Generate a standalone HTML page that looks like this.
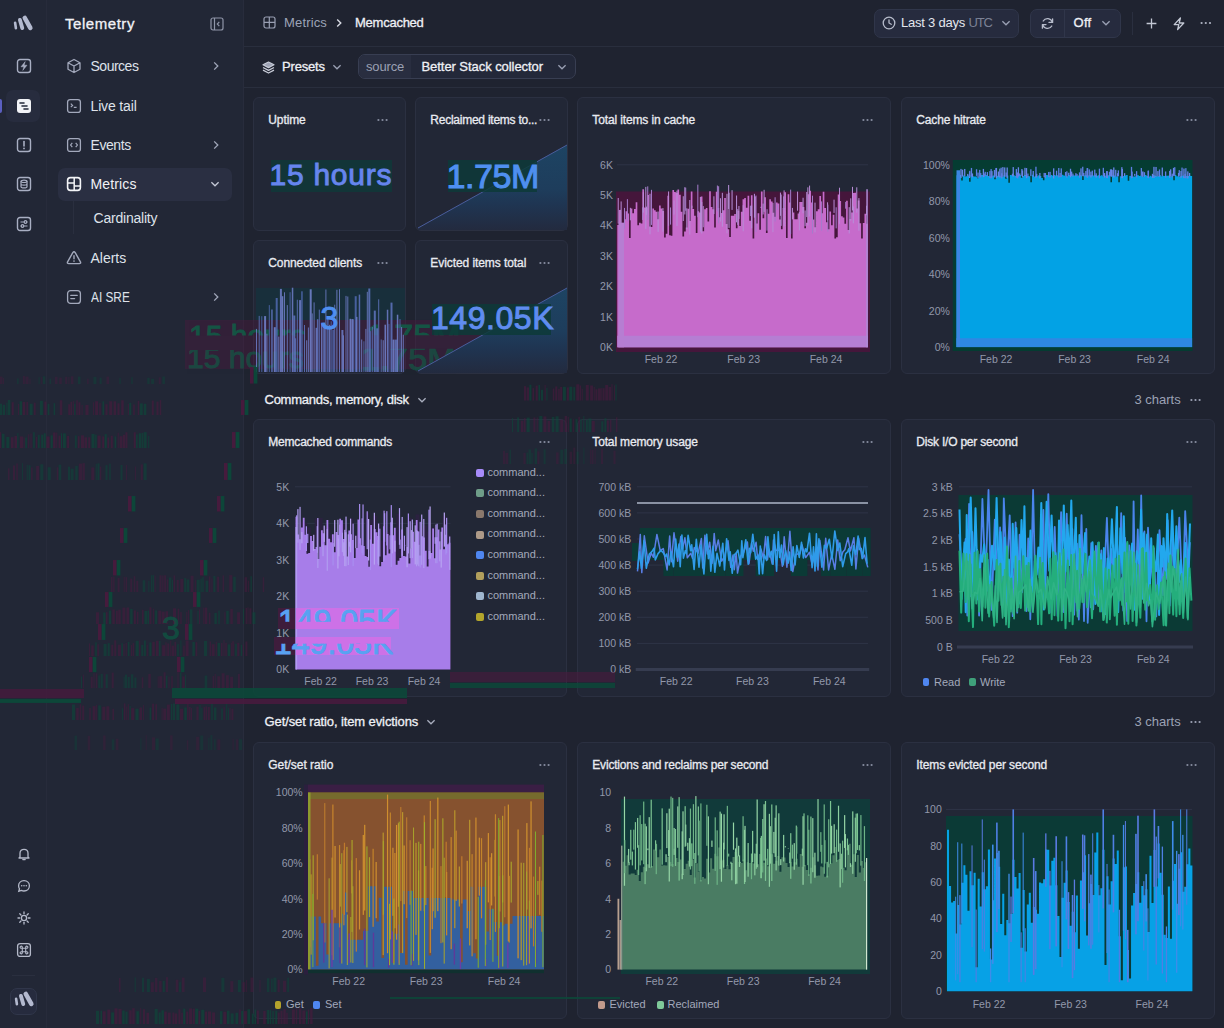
<!DOCTYPE html><html><head><meta charset="utf-8"><title>Telemetry</title>
<style>
html,body{margin:0;padding:0}
body{width:1224px;height:1028px;overflow:hidden;position:relative;background:#1f2330;font-family:"Liberation Sans",sans-serif;}
svg{overflow:visible}
</style></head><body>
<div style="position:absolute;left:0px;top:0px;width:46px;height:1028px;background:#222736;"></div>
<div style="position:absolute;left:46px;top:0px;width:1px;height:1028px;background:#272b3b;"></div>
<div style="position:absolute;left:47px;top:0px;width:196px;height:1028px;background:#222736;"></div>
<div style="position:absolute;left:243px;top:0px;width:1px;height:1028px;background:#282c3c;"></div>
<svg style="position:absolute;left:10px;top:12px;" width="24" height="20" viewBox="0 0 24 20"><g stroke="#b3b9cf" stroke-linecap="round" stroke-linejoin="round" fill="none"><path d="M5.1 10.7 L5.9 16.2" stroke-width="2.6"/><path d="M9.9 7.9 L12.3 16.1" stroke-width="3.8"/><path d="M14.8 6.0 L20.3 15.9" stroke-width="4.6"/></g></svg>
<div style="position:absolute;left:6px;top:90px;width:34px;height:32px;background:#272c3e;border-radius:7px;"></div>
<div style="position:absolute;left:0px;top:99px;width:2px;height:14px;background:#5b5fc0;border-radius:0 2px 2px 0;"></div>
<svg style="position:absolute;left:16px;top:58px;" width="16" height="16" viewBox="0 0 16 16"><rect x="1.5" y="1.5" width="13" height="13" rx="2.5" fill="none" stroke="#a9afc3" stroke-width="1.4"/><path d="M9.2 3.6 L5 8.8 H7.9 L6.8 12.4 L11 7.2 H8.1Z" fill="#a9afc3" stroke="#a9afc3" stroke-width=".5" stroke-linejoin="round"/></svg>
<svg style="position:absolute;left:16px;top:98px;" width="16" height="16" viewBox="0 0 16 16"><rect x="1" y="1" width="14" height="14" rx="3" fill="#f2f3f7"/><path d="M4 5 H8 M6 8 H11 M8 11 H12" stroke="#23283a" stroke-width="1.6" stroke-linecap="round"/></svg>
<svg style="position:absolute;left:16px;top:137px;" width="16" height="16" viewBox="0 0 16 16"><rect x="1.5" y="1.5" width="13" height="13" rx="2.5" fill="none" stroke="#a9afc3" stroke-width="1.4"/><path d="M8 4.5 V9" stroke="#a9afc3" stroke-width="1.6" stroke-linecap="round"/><circle cx="8" cy="11.4" r="0.9" fill="#a9afc3"/></svg>
<svg style="position:absolute;left:16px;top:176px;" width="16" height="16" viewBox="0 0 16 16"><rect x="1.5" y="1.5" width="13" height="13" rx="2.5" fill="none" stroke="#a9afc3" stroke-width="1.4"/><ellipse cx="8" cy="5.3" rx="3" ry="1.2" fill="none" stroke="#a9afc3" stroke-width="1.2"/><path d="M5 5.3 V10.7 C5 12.3 11 12.3 11 10.7 V5.3 M5 8 C5 9.5 11 9.5 11 8" fill="none" stroke="#a9afc3" stroke-width="1.2"/></svg>
<svg style="position:absolute;left:16px;top:216px;" width="16" height="16" viewBox="0 0 16 16"><rect x="1.5" y="1.5" width="13" height="13" rx="2.5" fill="none" stroke="#a9afc3" stroke-width="1.4"/><path d="M4.5 6 H11.5 M4.5 10 H11.5" stroke="#a9afc3" stroke-width="1.2"/><circle cx="9.5" cy="6" r="1.3" fill="#222736" stroke="#a9afc3" stroke-width="1.2"/><circle cx="6.5" cy="10" r="1.3" fill="#222736" stroke="#a9afc3" stroke-width="1.2"/></svg>
<svg style="position:absolute;left:16px;top:846px;" width="16" height="16" viewBox="0 0 16 16"><path d="M4 11 V7.2 C4 4.8 5.8 3.3 8 3.3 C10.2 3.3 12 4.8 12 7.2 V11 L13 12 H3Z" fill="none" stroke="#b4b9c9" stroke-width="1.3" stroke-linejoin="round"/><path d="M6.8 13.6 H9.2" stroke="#b4b9c9" stroke-width="1.3" stroke-linecap="round"/></svg>
<svg style="position:absolute;left:16px;top:878px;" width="16" height="16" viewBox="0 0 16 16"><path d="M8 2.6 C11.2 2.6 13.4 4.9 13.4 7.8 C13.4 10.7 11.2 13 8 13 C7.1 13 6.2 12.8 5.5 12.4 L2.8 13.2 L3.5 10.8 C2.9 10 2.6 8.9 2.6 7.8 C2.6 4.9 4.8 2.6 8 2.6Z" fill="none" stroke="#b4b9c9" stroke-width="1.3"/><circle cx="5.7" cy="7.8" r=".8" fill="#b4b9c9"/><circle cx="8" cy="7.8" r=".8" fill="#b4b9c9"/><circle cx="10.3" cy="7.8" r=".8" fill="#b4b9c9"/></svg>
<svg style="position:absolute;left:16px;top:910px;" width="16" height="16" viewBox="0 0 16 16"><circle cx="8" cy="8" r="2.6" fill="none" stroke="#b4b9c9" stroke-width="1.3"/><path d="M12.30 8.00 L14.00 8.00" stroke="#b4b9c9" stroke-width="1.3" stroke-linecap="round"/><path d="M11.04 11.04 L12.24 12.24" stroke="#b4b9c9" stroke-width="1.3" stroke-linecap="round"/><path d="M8.00 12.30 L8.00 14.00" stroke="#b4b9c9" stroke-width="1.3" stroke-linecap="round"/><path d="M4.96 11.04 L3.76 12.24" stroke="#b4b9c9" stroke-width="1.3" stroke-linecap="round"/><path d="M3.70 8.00 L2.00 8.00" stroke="#b4b9c9" stroke-width="1.3" stroke-linecap="round"/><path d="M4.96 4.96 L3.76 3.76" stroke="#b4b9c9" stroke-width="1.3" stroke-linecap="round"/><path d="M8.00 3.70 L8.00 2.00" stroke="#b4b9c9" stroke-width="1.3" stroke-linecap="round"/><path d="M11.04 4.96 L12.24 3.76" stroke="#b4b9c9" stroke-width="1.3" stroke-linecap="round"/></svg>
<svg style="position:absolute;left:16px;top:942px;" width="16" height="16" viewBox="0 0 16 16"><rect x="1.6" y="1.6" width="12.8" height="12.8" rx="2.5" fill="none" stroke="#b4b9c9" stroke-width="1.3"/><path d="M6.3 6.3 H9.7 V9.7 H6.3Z M6.3 6.3 V5.4 A1.1 1.1 0 1 0 5.2 6.3 H6.3 M9.7 6.3 V5.4 A1.1 1.1 0 1 1 10.8 6.3 H9.7 M6.3 9.7 V10.6 A1.1 1.1 0 1 1 5.2 9.7 H6.3 M9.7 9.7 V10.6 A1.1 1.1 0 1 0 10.8 9.7 H9.7" fill="none" stroke="#b4b9c9" stroke-width="1.1"/></svg>
<div style="position:absolute;left:12px;top:975px;width:23px;height:1px;background:#2a2f3f;"></div>
<div style="position:absolute;left:10px;top:988px;width:27px;height:27px;background:#262b3e;border:1px solid #30364a;border-radius:7px;box-sizing:border-box;"></div>
<svg style="position:absolute;left:10.5px;top:988px;" width="24" height="20" viewBox="0 0 24 20"><g stroke="#b3b9cf" stroke-linecap="round" stroke-linejoin="round" fill="none"><path d="M5.1 10.7 L5.9 16.2" stroke-width="2.6"/><path d="M9.9 7.9 L12.3 16.1" stroke-width="3.8"/><path d="M14.8 6.0 L20.3 15.9" stroke-width="4.6"/></g></svg>
<div class="t" style="position:absolute;left:65px;top:16.1px;font-size:15px;line-height:15px;font-weight:400;color:#f1f2f6;white-space:nowrap;letter-spacing:0.546px;-webkit-text-stroke:0.30px #f1f2f6;">Telemetry</div>
<svg style="position:absolute;left:210px;top:17px;" width="14" height="14" viewBox="0 0 14 14"><rect x="1" y="1" width="12" height="12" rx="2" fill="none" stroke="#8f95a8" stroke-width="1.2"/><path d="M4.5 1 V13" stroke="#8f95a8" stroke-width="1.2"/><path d="M9.3 4.8 L7.3 7 L9.3 9.2" fill="none" stroke="#8f95a8" stroke-width="1.2"/></svg>
<div style="position:absolute;left:58px;top:168px;width:174px;height:33px;background:#2a2f42;border-radius:7px;"></div>
<svg style="position:absolute;left:66px;top:58px;" width="16" height="16" viewBox="0 0 16 16"><path d="M8 1.5 L14 4.7 V11.3 L8 14.5 L2 11.3 V4.7Z M2 4.7 L8 8 L14 4.7 M8 8 V14.5" fill="none" stroke="#a3a9bc" stroke-width="1.3" stroke-linejoin="round"/></svg>
<div class="t" style="position:absolute;left:90.5px;top:59.2px;font-size:14px;line-height:14px;font-weight:400;color:#dfe2ea;white-space:nowrap;letter-spacing:-0.490px;">Sources</div>
<svg style="position:absolute;left:211px;top:61px;" width="10" height="10" viewBox="0 0 10 10"><path d="M3.2 1.4 L6.8 5 L3.2 8.6" fill="none" stroke="#a1a7ba" stroke-width="1.3"/></svg>
<svg style="position:absolute;left:66px;top:97.5px;" width="16" height="16" viewBox="0 0 16 16"><rect x="1.6" y="1.6" width="12.8" height="12.8" rx="2.5" fill="none" stroke="#a3a9bc" stroke-width="1.3"/><path d="M4.8 5.6 L6.6 7.4 L4.8 9.2 M7.8 9.4 H10.6" fill="none" stroke="#a3a9bc" stroke-width="1.2"/></svg>
<div class="t" style="position:absolute;left:90.5px;top:98.7px;font-size:14px;line-height:14px;font-weight:400;color:#dfe2ea;white-space:nowrap;letter-spacing:-0.144px;">Live tail</div>
<svg style="position:absolute;left:66px;top:137px;" width="16" height="16" viewBox="0 0 16 16"><rect x="1.6" y="1.6" width="12.8" height="12.8" rx="2.5" fill="none" stroke="#a3a9bc" stroke-width="1.3"/><path d="M6.3 5.8 L4.6 8 L6.3 10.2 M9.7 5.8 L11.4 8 L9.7 10.2" fill="none" stroke="#a3a9bc" stroke-width="1.2"/></svg>
<div class="t" style="position:absolute;left:90.5px;top:138.2px;font-size:14px;line-height:14px;font-weight:400;color:#dfe2ea;white-space:nowrap;letter-spacing:-0.419px;">Events</div>
<svg style="position:absolute;left:211px;top:140px;" width="10" height="10" viewBox="0 0 10 10"><path d="M3.2 1.4 L6.8 5 L3.2 8.6" fill="none" stroke="#a1a7ba" stroke-width="1.3"/></svg>
<svg style="position:absolute;left:66px;top:176px;" width="16" height="16" viewBox="0 0 16 16"><rect x="1.6" y="1.6" width="12.8" height="12.8" rx="2.8" fill="none" stroke="#f4f5f8" stroke-width="1.6"/><path d="M8.2 1.6 V14.4 M1.6 7 H8.2 M8.2 10 H14.4" stroke="#f4f5f8" stroke-width="1.5"/></svg>
<div class="t" style="position:absolute;left:90.5px;top:177.2px;font-size:14px;line-height:14px;font-weight:500;color:#f1f2f6;white-space:nowrap;letter-spacing:0.149px;">Metrics</div>
<svg style="position:absolute;left:210px;top:179px;" width="10" height="10" viewBox="0 0 10 10"><path d="M1.4 3.2 L5 6.8 L8.6 3.2" fill="none" stroke="#c5c9d6" stroke-width="1.3"/></svg>
<svg style="position:absolute;left:66px;top:249.5px;" width="16" height="16" viewBox="0 0 16 16"><path d="M6.8 2.6 Q8 0.8 9.2 2.6 L14.4 11.8 Q15.2 13.6 13.2 13.6 H2.8 Q0.8 13.6 1.6 11.8Z" fill="none" stroke="#a3a9bc" stroke-width="1.4" stroke-linejoin="round"/><path d="M8 5.8 V8.8" stroke="#a3a9bc" stroke-width="1.4" stroke-linecap="round"/><circle cx="8" cy="11" r=".85" fill="#a3a9bc"/></svg>
<div class="t" style="position:absolute;left:90.5px;top:250.7px;font-size:14px;line-height:14px;font-weight:400;color:#dfe2ea;white-space:nowrap;letter-spacing:-0.015px;">Alerts</div>
<svg style="position:absolute;left:66px;top:289px;" width="16" height="16" viewBox="0 0 16 16"><rect x="1.6" y="1.6" width="12.8" height="12.8" rx="3" fill="none" stroke="#a3a9bc" stroke-width="1.3"/><path d="M4.8 6.4 H11.2 M4.8 9.6 H8.6" stroke="#a3a9bc" stroke-width="1.3" stroke-linecap="round"/></svg>
<div class="t" style="position:absolute;left:90.5px;top:290.2px;font-size:14px;line-height:14px;font-weight:400;color:#dfe2ea;white-space:nowrap;transform:scaleX(0.845);transform-origin:0 0;">AI SRE</div>
<svg style="position:absolute;left:211px;top:292px;" width="10" height="10" viewBox="0 0 10 10"><path d="M3.2 1.4 L6.8 5 L3.2 8.6" fill="none" stroke="#a1a7ba" stroke-width="1.3"/></svg>
<div style="position:absolute;left:73px;top:201px;width:1px;height:33px;background:#2a2f3f;"></div>
<div class="t" style="position:absolute;left:93.5px;top:211.2px;font-size:14px;line-height:14px;font-weight:400;color:#dfe2ea;white-space:nowrap;letter-spacing:-0.212px;">Cardinality</div>
<div style="position:absolute;left:244px;top:46px;width:980px;height:1px;background:#292e3d;"></div>
<div style="position:absolute;left:244px;top:87px;width:980px;height:1px;background:#292e3d;"></div>
<svg style="position:absolute;left:263px;top:16px;" width="13" height="13" viewBox="0 0 13 13"><rect x="1" y="1" width="11" height="11" rx="2" fill="none" stroke="#9aa0b3" stroke-width="1.2"/><path d="M1 6.3 H12 M6.3 1 V12" stroke="#9aa0b3" stroke-width="1.2"/></svg>
<div class="t" style="position:absolute;left:284px;top:15.7px;font-size:13px;line-height:13px;font-weight:400;color:#9ca3b7;white-space:nowrap;letter-spacing:0.158px;">Metrics</div>
<svg style="position:absolute;left:334px;top:17.5px;" width="10" height="10" viewBox="0 0 10 10"><path d="M3.2 1.4 L6.8 5 L3.2 8.6" fill="none" stroke="#d7dae3" stroke-width="1.4"/></svg>
<div class="t" style="position:absolute;left:355px;top:15.7px;font-size:13px;line-height:13px;font-weight:400;color:#eef0f5;white-space:nowrap;letter-spacing:-0.247px;-webkit-text-stroke:0.30px #eef0f5;">Memcached</div>
<div style="position:absolute;left:874px;top:9px;width:145px;height:29px;background:#262b3e;border:1px solid #30364a;border-radius:7px;box-sizing:border-box;"></div>
<svg style="position:absolute;left:882px;top:16px;" width="14" height="14" viewBox="0 0 14 14"><circle cx="7" cy="7" r="5.8" fill="none" stroke="#b7bccb" stroke-width="1.3"/><path d="M7 3.8 V7 L9.2 8.3" fill="none" stroke="#b7bccb" stroke-width="1.3" stroke-linecap="round"/></svg>
<div class="t" style="position:absolute;left:901px;top:15.7px;font-size:13px;line-height:13px;font-weight:400;color:#e4e7ee;white-space:nowrap;letter-spacing:-0.216px;">Last 3 days</div>
<div class="t" style="position:absolute;left:968.5px;top:15.7px;font-size:13px;line-height:13px;font-weight:400;color:#7c8296;white-space:nowrap;letter-spacing:-1.139px;">UTC</div>
<svg style="position:absolute;left:1000.5px;top:18px;" width="10" height="10" viewBox="0 0 10 10"><path d="M1.4 3.2 L5 6.8 L8.6 3.2" fill="none" stroke="#9aa0b3" stroke-width="1.3"/></svg>
<div style="position:absolute;left:1030px;top:9px;width:91px;height:29px;background:#262b3e;border:1px solid #30364a;border-radius:7px;box-sizing:border-box;"></div>
<div style="position:absolute;left:1064px;top:10px;width:1px;height:27px;background:#30364a;"></div>
<svg style="position:absolute;left:1039.5px;top:15.5px;" width="15" height="15" viewBox="0 0 15 15"><path d="M12.3 6.2 A5 5 0 0 0 3.2 5 M2.7 8.8 A5 5 0 0 0 11.8 10" fill="none" stroke="#b7bccb" stroke-width="1.3" stroke-linecap="round"/><path d="M12.6 2.8 V6.4 H9" fill="none" stroke="#b7bccb" stroke-width="1.3" stroke-linecap="round" stroke-linejoin="round"/><path d="M2.4 12.2 V8.6 H6" fill="none" stroke="#b7bccb" stroke-width="1.3" stroke-linecap="round" stroke-linejoin="round"/></svg>
<div class="t" style="position:absolute;left:1073.5px;top:15.7px;font-size:13px;line-height:13px;font-weight:400;color:#eef0f5;white-space:nowrap;letter-spacing:0.265px;-webkit-text-stroke:0.30px #eef0f5;">Off</div>
<svg style="position:absolute;left:1101px;top:18px;" width="10" height="10" viewBox="0 0 10 10"><path d="M1.4 3.2 L5 6.8 L8.6 3.2" fill="none" stroke="#9aa0b3" stroke-width="1.3"/></svg>
<div style="position:absolute;left:1131.5px;top:12px;width:1.0px;height:23px;background:#2a2f3f;"></div>
<svg style="position:absolute;left:1145.5px;top:17.6px;" width="11" height="11" viewBox="0 0 11 11"><path d="M5.5 0.6 V10.4 M0.6 5.5 H10.4" stroke="#c3c8d4" stroke-width="1.3"/></svg>
<svg style="position:absolute;left:1171.5px;top:16.5px;" width="14" height="14" viewBox="0 0 14 14"><path d="M8.4 1 L2.2 7.6 H6.8 L5.6 12.6 L11.8 6 H7.2Z" fill="none" stroke="#c3c8d4" stroke-width="1.3" stroke-linejoin="round"/></svg>
<svg style="position:absolute;left:1199.5px;top:20.4px;" width="12" height="6" viewBox="0 0 12 6"><circle cx="1.6" cy="3" r="1.1" fill="#b0b5c4"/><circle cx="5.8" cy="3" r="1.1" fill="#b0b5c4"/><circle cx="10" cy="3" r="1.1" fill="#b0b5c4"/></svg>
<svg style="position:absolute;left:262px;top:60.5px;" width="13" height="13" viewBox="0 0 13 13"><path d="M6.5 1 L12 3.8 L6.5 6.6 L1 3.8Z" fill="#9ea3b5" stroke="#c7cbd7" stroke-width="1.2" stroke-linejoin="round"/><path d="M1 6.5 L6.5 9.3 L12 6.5 M1 9.2 L6.5 12 L12 9.2" fill="none" stroke="#c7cbd7" stroke-width="1.3" stroke-linejoin="round"/></svg>
<div class="t" style="position:absolute;left:282px;top:59.7px;font-size:13px;line-height:13px;font-weight:400;color:#eef0f5;white-space:nowrap;letter-spacing:-0.173px;-webkit-text-stroke:0.30px #eef0f5;">Presets</div>
<svg style="position:absolute;left:332px;top:61.5px;" width="10" height="10" viewBox="0 0 10 10"><path d="M1.4 3.2 L5 6.8 L8.6 3.2" fill="none" stroke="#9aa0b3" stroke-width="1.3"/></svg>
<div style="position:absolute;left:357.5px;top:54px;width:218.0px;height:24.5px;background:#232839;border:1px solid #383e52;border-radius:7px;box-sizing:border-box;"></div>
<div style="position:absolute;left:358.5px;top:55px;width:52.0px;height:22.5px;background:#292e40;border-radius:6px 0 0 6px;"></div>
<div class="t" style="position:absolute;left:366px;top:60.0px;font-size:13px;line-height:13px;font-weight:400;color:#9aa0b3;white-space:nowrap;letter-spacing:-0.158px;">source</div>
<div class="t" style="position:absolute;left:421.5px;top:60.0px;font-size:13px;line-height:13px;font-weight:400;color:#eef0f5;white-space:nowrap;letter-spacing:-0.061px;-webkit-text-stroke:0.30px #eef0f5;">Better Stack collector</div>
<svg style="position:absolute;left:557px;top:61.5px;" width="10" height="10" viewBox="0 0 10 10"><path d="M1.4 3.2 L5 6.8 L8.6 3.2" fill="none" stroke="#9aa0b3" stroke-width="1.3"/></svg>
<div style="position:absolute;left:253px;top:97px;width:153px;height:134px;background:#222736;border:1px solid #2b3041;border-radius:6px;box-sizing:border-box;"></div>
<div class="t" style="position:absolute;left:268.3px;top:113.6px;font-size:12px;line-height:12px;font-weight:400;color:#e9ebf1;white-space:nowrap;letter-spacing:-0.111px;-webkit-text-stroke:0.30px #e9ebf1;">Uptime</div>
<svg style="position:absolute;left:377px;top:116.6px;" width="11" height="6" viewBox="0 0 11 6"><circle cx="1.4" cy="3" r="1.1" fill="#868c9f"/><circle cx="5.5" cy="3" r="1.1" fill="#868c9f"/><circle cx="9.6" cy="3" r="1.1" fill="#868c9f"/></svg>
<div style="position:absolute;left:415px;top:97px;width:153px;height:134px;background:#222736;border:1px solid #2b3041;border-radius:6px;box-sizing:border-box;"></div>
<div class="t" style="position:absolute;left:430.3px;top:113.6px;font-size:12px;line-height:12px;font-weight:400;color:#e9ebf1;white-space:nowrap;letter-spacing:-0.244px;-webkit-text-stroke:0.30px #e9ebf1;">Reclaimed items to...</div>
<svg style="position:absolute;left:539px;top:116.6px;" width="11" height="6" viewBox="0 0 11 6"><circle cx="1.4" cy="3" r="1.1" fill="#868c9f"/><circle cx="5.5" cy="3" r="1.1" fill="#868c9f"/><circle cx="9.6" cy="3" r="1.1" fill="#868c9f"/></svg>
<div style="position:absolute;left:253px;top:240px;width:153px;height:134px;background:#222736;border:1px solid #2b3041;border-radius:6px;box-sizing:border-box;"></div>
<div class="t" style="position:absolute;left:268.3px;top:256.6px;font-size:12px;line-height:12px;font-weight:400;color:#e9ebf1;white-space:nowrap;letter-spacing:-0.096px;-webkit-text-stroke:0.30px #e9ebf1;">Connected clients</div>
<svg style="position:absolute;left:377px;top:259.8px;" width="11" height="6" viewBox="0 0 11 6"><circle cx="1.4" cy="3" r="1.1" fill="#868c9f"/><circle cx="5.5" cy="3" r="1.1" fill="#868c9f"/><circle cx="9.6" cy="3" r="1.1" fill="#868c9f"/></svg>
<div style="position:absolute;left:415px;top:240px;width:153px;height:134px;background:#222736;border:1px solid #2b3041;border-radius:6px;box-sizing:border-box;"></div>
<div class="t" style="position:absolute;left:430.3px;top:256.6px;font-size:12px;line-height:12px;font-weight:400;color:#e9ebf1;white-space:nowrap;letter-spacing:-0.073px;-webkit-text-stroke:0.30px #e9ebf1;">Evicted items total</div>
<svg style="position:absolute;left:539px;top:259.8px;" width="11" height="6" viewBox="0 0 11 6"><circle cx="1.4" cy="3" r="1.1" fill="#868c9f"/><circle cx="5.5" cy="3" r="1.1" fill="#868c9f"/><circle cx="9.6" cy="3" r="1.1" fill="#868c9f"/></svg>
<div style="position:absolute;left:577px;top:97px;width:314px;height:277px;background:#222736;border:1px solid #2b3041;border-radius:6px;box-sizing:border-box;"></div>
<div class="t" style="position:absolute;left:592.3px;top:113.6px;font-size:12px;line-height:12px;font-weight:400;color:#e9ebf1;white-space:nowrap;letter-spacing:-0.133px;-webkit-text-stroke:0.30px #e9ebf1;">Total items in cache</div>
<svg style="position:absolute;left:862px;top:116.6px;" width="11" height="6" viewBox="0 0 11 6"><circle cx="1.4" cy="3" r="1.1" fill="#868c9f"/><circle cx="5.5" cy="3" r="1.1" fill="#868c9f"/><circle cx="9.6" cy="3" r="1.1" fill="#868c9f"/></svg>
<div style="position:absolute;left:901px;top:97px;width:314px;height:277px;background:#222736;border:1px solid #2b3041;border-radius:6px;box-sizing:border-box;"></div>
<div class="t" style="position:absolute;left:916.3px;top:113.6px;font-size:12px;line-height:12px;font-weight:400;color:#e9ebf1;white-space:nowrap;letter-spacing:-0.151px;-webkit-text-stroke:0.30px #e9ebf1;">Cache hitrate</div>
<svg style="position:absolute;left:1186px;top:116.6px;" width="11" height="6" viewBox="0 0 11 6"><circle cx="1.4" cy="3" r="1.1" fill="#868c9f"/><circle cx="5.5" cy="3" r="1.1" fill="#868c9f"/><circle cx="9.6" cy="3" r="1.1" fill="#868c9f"/></svg>
<div class="t" style="position:absolute;left:264.5px;top:392.8px;font-size:13px;line-height:13px;font-weight:400;color:#eef0f5;white-space:nowrap;letter-spacing:-0.261px;-webkit-text-stroke:0.30px #eef0f5;">Commands, memory, disk</div>
<svg style="position:absolute;left:416.5px;top:394.5px;" width="10" height="10" viewBox="0 0 10 10"><path d="M1.4 3.2 L5 6.8 L8.6 3.2" fill="none" stroke="#a8adbd" stroke-width="1.3"/></svg>
<div class="t" style="position:absolute;left:1134.5px;top:392.9px;font-size:13px;line-height:13px;font-weight:400;color:#9ca2b5;white-space:nowrap;letter-spacing:-0.016px;">3 charts</div>
<svg style="position:absolute;left:1190px;top:396.6px;" width="11" height="6" viewBox="0 0 11 6"><circle cx="1.4" cy="3" r="1.1" fill="#9ca2b5"/><circle cx="5.5" cy="3" r="1.1" fill="#9ca2b5"/><circle cx="9.6" cy="3" r="1.1" fill="#9ca2b5"/></svg>
<div style="position:absolute;left:253px;top:419px;width:314px;height:278px;background:#222736;border:1px solid #2b3041;border-radius:6px;box-sizing:border-box;"></div>
<div class="t" style="position:absolute;left:268.3px;top:435.6px;font-size:12px;line-height:12px;font-weight:400;color:#e9ebf1;white-space:nowrap;letter-spacing:-0.208px;-webkit-text-stroke:0.30px #e9ebf1;">Memcached commands</div>
<svg style="position:absolute;left:539px;top:439.3px;" width="11" height="6" viewBox="0 0 11 6"><circle cx="1.4" cy="3" r="1.1" fill="#868c9f"/><circle cx="5.5" cy="3" r="1.1" fill="#868c9f"/><circle cx="9.6" cy="3" r="1.1" fill="#868c9f"/></svg>
<div style="position:absolute;left:577px;top:419px;width:314px;height:278px;background:#222736;border:1px solid #2b3041;border-radius:6px;box-sizing:border-box;"></div>
<div class="t" style="position:absolute;left:592.3px;top:435.6px;font-size:12px;line-height:12px;font-weight:400;color:#e9ebf1;white-space:nowrap;letter-spacing:-0.146px;-webkit-text-stroke:0.30px #e9ebf1;">Total memory usage</div>
<svg style="position:absolute;left:862px;top:439.3px;" width="11" height="6" viewBox="0 0 11 6"><circle cx="1.4" cy="3" r="1.1" fill="#868c9f"/><circle cx="5.5" cy="3" r="1.1" fill="#868c9f"/><circle cx="9.6" cy="3" r="1.1" fill="#868c9f"/></svg>
<div style="position:absolute;left:901px;top:419px;width:314px;height:278px;background:#222736;border:1px solid #2b3041;border-radius:6px;box-sizing:border-box;"></div>
<div class="t" style="position:absolute;left:916.3px;top:435.6px;font-size:12px;line-height:12px;font-weight:400;color:#e9ebf1;white-space:nowrap;letter-spacing:-0.212px;-webkit-text-stroke:0.30px #e9ebf1;">Disk I/O per second</div>
<svg style="position:absolute;left:1186px;top:439.3px;" width="11" height="6" viewBox="0 0 11 6"><circle cx="1.4" cy="3" r="1.1" fill="#868c9f"/><circle cx="5.5" cy="3" r="1.1" fill="#868c9f"/><circle cx="9.6" cy="3" r="1.1" fill="#868c9f"/></svg>
<div class="t" style="position:absolute;left:264.5px;top:715.2px;font-size:13px;line-height:13px;font-weight:400;color:#eef0f5;white-space:nowrap;letter-spacing:-0.105px;-webkit-text-stroke:0.30px #eef0f5;">Get/set ratio, item evictions</div>
<svg style="position:absolute;left:426px;top:717px;" width="10" height="10" viewBox="0 0 10 10"><path d="M1.4 3.2 L5 6.8 L8.6 3.2" fill="none" stroke="#a8adbd" stroke-width="1.3"/></svg>
<div class="t" style="position:absolute;left:1134.5px;top:715.3px;font-size:13px;line-height:13px;font-weight:400;color:#9ca2b5;white-space:nowrap;letter-spacing:-0.016px;">3 charts</div>
<svg style="position:absolute;left:1190px;top:719px;" width="11" height="6" viewBox="0 0 11 6"><circle cx="1.4" cy="3" r="1.1" fill="#9ca2b5"/><circle cx="5.5" cy="3" r="1.1" fill="#9ca2b5"/><circle cx="9.6" cy="3" r="1.1" fill="#9ca2b5"/></svg>
<div style="position:absolute;left:253px;top:742px;width:314px;height:277px;background:#222736;border:1px solid #2b3041;border-radius:6px;box-sizing:border-box;"></div>
<div class="t" style="position:absolute;left:268.3px;top:758.6px;font-size:12px;line-height:12px;font-weight:400;color:#e9ebf1;white-space:nowrap;letter-spacing:-0.026px;-webkit-text-stroke:0.30px #e9ebf1;">Get/set ratio</div>
<svg style="position:absolute;left:539px;top:761.8px;" width="11" height="6" viewBox="0 0 11 6"><circle cx="1.4" cy="3" r="1.1" fill="#868c9f"/><circle cx="5.5" cy="3" r="1.1" fill="#868c9f"/><circle cx="9.6" cy="3" r="1.1" fill="#868c9f"/></svg>
<div style="position:absolute;left:577px;top:742px;width:314px;height:277px;background:#222736;border:1px solid #2b3041;border-radius:6px;box-sizing:border-box;"></div>
<div class="t" style="position:absolute;left:592.3px;top:758.6px;font-size:12px;line-height:12px;font-weight:400;color:#e9ebf1;white-space:nowrap;letter-spacing:-0.189px;-webkit-text-stroke:0.30px #e9ebf1;">Evictions and reclaims per second</div>
<svg style="position:absolute;left:862px;top:761.8px;" width="11" height="6" viewBox="0 0 11 6"><circle cx="1.4" cy="3" r="1.1" fill="#868c9f"/><circle cx="5.5" cy="3" r="1.1" fill="#868c9f"/><circle cx="9.6" cy="3" r="1.1" fill="#868c9f"/></svg>
<div style="position:absolute;left:901px;top:742px;width:314px;height:277px;background:#222736;border:1px solid #2b3041;border-radius:6px;box-sizing:border-box;"></div>
<div class="t" style="position:absolute;left:916.3px;top:758.6px;font-size:12px;line-height:12px;font-weight:400;color:#e9ebf1;white-space:nowrap;letter-spacing:-0.106px;-webkit-text-stroke:0.30px #e9ebf1;">Items evicted per second</div>
<svg style="position:absolute;left:1186px;top:761.8px;" width="11" height="6" viewBox="0 0 11 6"><circle cx="1.4" cy="3" r="1.1" fill="#868c9f"/><circle cx="5.5" cy="3" r="1.1" fill="#868c9f"/><circle cx="9.6" cy="3" r="1.1" fill="#868c9f"/></svg>
<!--CHARTS-->
<div style="position:absolute;left:185px;top:320px;width:311px;height:49px;background:#4a1a3e;opacity:.45;"></div>
<div class="t" style="position:absolute;left:189px;top:321.2px;font-size:30px;line-height:30px;font-weight:400;color:#0d6248;white-space:nowrap;-webkit-text-stroke:0.90px #0d6248;opacity:.8;clip-path:inset(0 0 52% 0);">15 hours</div>
<div class="t" style="position:absolute;left:187px;top:343.2px;font-size:30px;line-height:30px;font-weight:400;color:#0d6248;white-space:nowrap;-webkit-text-stroke:0.90px #0d6248;opacity:.6;clip-path:inset(23% 0 0 0);">15 hours</div>
<div class="t" style="position:absolute;left:366px;top:319.0px;font-size:34px;line-height:34px;font-weight:400;color:#0d6248;white-space:nowrap;-webkit-text-stroke:1.02px #0d6248;opacity:.8;clip-path:inset(0 0 52% 0);">1.75M</div>
<div class="t" style="position:absolute;left:361px;top:341.0px;font-size:34px;line-height:34px;font-weight:400;color:#0d6248;white-space:nowrap;-webkit-text-stroke:1.02px #0d6248;opacity:.6;clip-path:inset(23% 0 0 0);">1.75M</div>
<div style="position:absolute;left:271px;top:160px;width:121px;height:32px;background:#0f3a3a;opacity:.8;"></div>
<div class="t" style="position:absolute;left:269.5px;top:159.7px;font-size:30px;line-height:30px;font-weight:400;color:#6685ee;white-space:nowrap;letter-spacing:0.736px;-webkit-text-stroke:0.90px #6685ee;">15 hours</div>
<svg style="position:absolute;left:415px;top:97px;" width="153" height="134" viewBox="0 0 153 134"><defs><linearGradient id="lg97" x1="0" y1="0" x2="0" y2="1"><stop offset="0" stop-color="#1d4564"/><stop offset="0.55" stop-color="#1e3d5c"/><stop offset="0.72" stop-color="#1f3552"/><stop offset="1" stop-color="#232a3e"/></linearGradient><clipPath id="ac97"><path d="M3 131 L152 48 V133 H3Z"/></clipPath></defs><rect x="0" y="40" width="153" height="94" fill="url(#lg97)" clip-path="url(#ac97)"/><path d="M3 131 L152 48" stroke="#4a5d9c" stroke-width="1" fill="none"/></svg>
<div style="position:absolute;left:448px;top:160px;width:89px;height:31.5px;background:#0d3a38;opacity:.85;"></div>
<div class="t" style="position:absolute;left:446.5px;top:158.8px;font-size:34px;line-height:34px;font-weight:400;color:#4f8ff0;white-space:nowrap;letter-spacing:-0.445px;-webkit-text-stroke:1.02px #4f8ff0;">1.75M</div>
<div style="position:absolute;left:256px;top:288px;width:149px;height:32px;background:#123540;opacity:.6;"></div>
<svg style="position:absolute;left:255px;top:287px;" width="150" height="86" viewBox="0 0 150 86"><rect x="1.0" y="41.9" width="1" height="43.1" fill="#6e7cc8" opacity=".85"/><rect x="3.7" y="28.9" width="1" height="56.1" fill="#5f74c0" opacity=".85"/><rect x="6.3" y="29.2" width="1" height="55.8" fill="#5068b0" opacity=".85"/><rect x="9.1" y="29.1" width="2" height="55.9" fill="#7484d0" opacity=".85"/><rect x="11.4" y="46.7" width="1" height="38.3" fill="#7484d0" opacity=".85"/><rect x="13.8" y="18.1" width="1" height="66.9" fill="#5068b0" opacity=".85"/><rect x="16.2" y="22.5" width="1.5" height="62.5" fill="#5f74c0" opacity=".85"/><rect x="18.8" y="40.2" width="2" height="44.8" fill="#7484d0" opacity=".85"/><rect x="20.7" y="11.0" width="2" height="74.0" fill="#5068b0" opacity=".85"/><rect x="23.3" y="49.6" width="1" height="35.4" fill="#7484d0" opacity=".85"/><rect x="24.9" y="1.9" width="2" height="83.1" fill="#6e7cc8" opacity=".85"/><rect x="26.8" y="9.2" width="1.5" height="75.8" fill="#7484d0" opacity=".85"/><rect x="29.0" y="5.3" width="1" height="79.7" fill="#6e7cc8" opacity=".85"/><rect x="31.8" y="18.1" width="1" height="66.9" fill="#6e7cc8" opacity=".85"/><rect x="34.6" y="5.2" width="1" height="79.8" fill="#5068b0" opacity=".85"/><rect x="36.8" y="0.7" width="1.5" height="84.3" fill="#6e7cc8" opacity=".85"/><rect x="38.3" y="28.5" width="2" height="56.5" fill="#5f74c0" opacity=".85"/><rect x="40.1" y="51.3" width="1" height="33.7" fill="#5f74c0" opacity=".85"/><rect x="41.8" y="12.7" width="1" height="72.3" fill="#5f74c0" opacity=".85"/><rect x="44.1" y="13.1" width="2" height="71.9" fill="#6e7cc8" opacity=".85"/><rect x="46.2" y="4.3" width="1.5" height="80.7" fill="#5068b0" opacity=".85"/><rect x="49.0" y="38.0" width="1" height="47.0" fill="#5f74c0" opacity=".85"/><rect x="51.2" y="53.3" width="1" height="31.7" fill="#7484d0" opacity=".85"/><rect x="52.9" y="40.5" width="1" height="44.5" fill="#6e7cc8" opacity=".85"/><rect x="54.7" y="2.3" width="2" height="82.7" fill="#7484d0" opacity=".85"/><rect x="56.7" y="26.4" width="1" height="58.6" fill="#6e7cc8" opacity=".85"/><rect x="58.6" y="15.4" width="1" height="69.6" fill="#6e7cc8" opacity=".85"/><rect x="60.6" y="40.8" width="1.5" height="44.2" fill="#6e7cc8" opacity=".85"/><rect x="61.9" y="32.2" width="1.5" height="52.8" fill="#5f74c0" opacity=".85"/><rect x="63.8" y="22.6" width="1" height="62.4" fill="#5f74c0" opacity=".85"/><rect x="66.0" y="36.7" width="1.5" height="48.3" fill="#6e7cc8" opacity=".85"/><rect x="68.2" y="39.7" width="2" height="45.3" fill="#5f74c0" opacity=".85"/><rect x="70.4" y="2.5" width="1" height="82.5" fill="#6e7cc8" opacity=".85"/><rect x="72.1" y="29.9" width="1.5" height="55.1" fill="#5068b0" opacity=".85"/><rect x="73.9" y="37.8" width="1.5" height="47.2" fill="#6e7cc8" opacity=".85"/><rect x="75.7" y="34.3" width="1" height="50.7" fill="#5068b0" opacity=".85"/><rect x="77.4" y="42.8" width="1.5" height="42.2" fill="#5068b0" opacity=".85"/><rect x="79.2" y="17.7" width="1" height="67.3" fill="#5f74c0" opacity=".85"/><rect x="81.4" y="2.8" width="1" height="82.2" fill="#7484d0" opacity=".85"/><rect x="84.0" y="2.2" width="1" height="82.8" fill="#6e7cc8" opacity=".85"/><rect x="86.4" y="43.0" width="2" height="42.0" fill="#6e7cc8" opacity=".85"/><rect x="88.0" y="48.3" width="1" height="36.7" fill="#6e7cc8" opacity=".85"/><rect x="90.5" y="8.9" width="1" height="76.1" fill="#6e7cc8" opacity=".85"/><rect x="92.3" y="9.5" width="1" height="75.5" fill="#6e7cc8" opacity=".85"/><rect x="94.5" y="31.8" width="1.5" height="53.2" fill="#7484d0" opacity=".85"/><rect x="96.3" y="32.1" width="2" height="52.9" fill="#7484d0" opacity=".85"/><rect x="97.7" y="32.3" width="1" height="52.7" fill="#5f74c0" opacity=".85"/><rect x="99.7" y="9.2" width="2" height="75.8" fill="#5068b0" opacity=".85"/><rect x="101.0" y="29.9" width="1.5" height="55.1" fill="#6e7cc8" opacity=".85"/><rect x="103.7" y="7.6" width="1.5" height="77.4" fill="#5f74c0" opacity=".85"/><rect x="106.2" y="52.5" width="1" height="32.5" fill="#7484d0" opacity=".85"/><rect x="108.4" y="54.3" width="1" height="30.7" fill="#5068b0" opacity=".85"/><rect x="110.4" y="41.9" width="1" height="43.1" fill="#7484d0" opacity=".85"/><rect x="111.8" y="4.8" width="1" height="80.2" fill="#6e7cc8" opacity=".85"/><rect x="113.3" y="1.5" width="2" height="83.5" fill="#5f74c0" opacity=".85"/><rect x="115.1" y="44.1" width="1" height="40.9" fill="#5068b0" opacity=".85"/><rect x="116.8" y="39.9" width="1" height="45.1" fill="#5f74c0" opacity=".85"/><rect x="118.8" y="23.6" width="2" height="61.4" fill="#5f74c0" opacity=".85"/><rect x="121.2" y="41.3" width="2" height="43.7" fill="#5f74c0" opacity=".85"/><rect x="123.2" y="12.3" width="1" height="72.7" fill="#5f74c0" opacity=".85"/><rect x="125.7" y="52.5" width="1" height="32.5" fill="#5f74c0" opacity=".85"/><rect x="127.7" y="53.2" width="1" height="31.8" fill="#7484d0" opacity=".85"/><rect x="129.5" y="37.7" width="1.5" height="47.3" fill="#7484d0" opacity=".85"/><rect x="131.8" y="22.7" width="1.5" height="62.3" fill="#6e7cc8" opacity=".85"/><rect x="133.4" y="36.9" width="1" height="48.1" fill="#5068b0" opacity=".85"/><rect x="135.5" y="15.6" width="2" height="69.4" fill="#5f74c0" opacity=".85"/><rect x="137.6" y="52.6" width="2" height="32.4" fill="#7484d0" opacity=".85"/><rect x="139.9" y="52.6" width="2" height="32.4" fill="#5f74c0" opacity=".85"/><rect x="141.8" y="27.7" width="1.5" height="57.3" fill="#7484d0" opacity=".85"/><rect x="144.5" y="32.0" width="1" height="53.0" fill="#5068b0" opacity=".85"/><rect x="146.1" y="40.1" width="1" height="44.9" fill="#7484d0" opacity=".85"/><rect x="147.8" y="47.8" width="1" height="37.2" fill="#6e7cc8" opacity=".85"/></svg>
<div class="t" style="position:absolute;left:320.5px;top:302.1px;font-size:32px;line-height:32px;font-weight:400;color:#4f8ff0;white-space:nowrap;-webkit-text-stroke:0.96px #4f8ff0;">3</div>
<svg style="position:absolute;left:415px;top:240px;" width="153" height="134" viewBox="0 0 153 134"><defs><linearGradient id="lg240" x1="0" y1="0" x2="0" y2="1"><stop offset="0" stop-color="#1d4564"/><stop offset="0.55" stop-color="#1e3d5c"/><stop offset="0.72" stop-color="#1f3552"/><stop offset="1" stop-color="#232a3e"/></linearGradient><clipPath id="ac240"><path d="M3 131 L152 48 V133 H3Z"/></clipPath></defs><rect x="0" y="40" width="153" height="94" fill="url(#lg240)" clip-path="url(#ac240)"/><path d="M3 131 L152 48" stroke="#4a5d9c" stroke-width="1" fill="none"/></svg>
<div style="position:absolute;left:432px;top:304px;width:119px;height:31px;background:#0d3a38;opacity:.85;"></div>
<div class="t" style="position:absolute;left:431px;top:302.1px;font-size:32px;line-height:32px;font-weight:400;color:#5f8cf0;white-space:nowrap;letter-spacing:0.557px;-webkit-text-stroke:0.96px #5f8cf0;">149.05K</div>
<svg style="position:absolute;left:0px;top:0px;" width="1" height="1" viewBox="0 0 1 1"></svg>
<svg style="position:absolute;left:617px;top:160px;" width="260" height="200" viewBox="0 0 260 200"><line x1="0" y1="4.800000000000011" x2="251" y2="4.800000000000011" stroke="#2e3447" stroke-width="1"/><line x1="0" y1="35.20000000000002" x2="251" y2="35.20000000000002" stroke="#2e3447" stroke-width="1"/><line x1="0" y1="65.60000000000002" x2="251" y2="65.60000000000002" stroke="#2e3447" stroke-width="1"/><line x1="0" y1="96.0" x2="251" y2="96.0" stroke="#2e3447" stroke-width="1"/><line x1="0" y1="126.39999999999998" x2="251" y2="126.39999999999998" stroke="#2e3447" stroke-width="1"/><line x1="0" y1="156.8" x2="251" y2="156.8" stroke="#2e3447" stroke-width="1"/></svg>
<div class="t" style="position:absolute;right:611.0999999999999px;top:159.5px;font-size:10.5px;line-height:10.5px;font-weight:400;color:#9298ab;white-space:nowrap;text-align:right;">6K</div>
<div class="t" style="position:absolute;right:611.0999999999999px;top:189.9px;font-size:10.5px;line-height:10.5px;font-weight:400;color:#9298ab;white-space:nowrap;text-align:right;">5K</div>
<div class="t" style="position:absolute;right:611.0999999999999px;top:220.3px;font-size:10.5px;line-height:10.5px;font-weight:400;color:#9298ab;white-space:nowrap;text-align:right;">4K</div>
<div class="t" style="position:absolute;right:611.0999999999999px;top:250.7px;font-size:10.5px;line-height:10.5px;font-weight:400;color:#9298ab;white-space:nowrap;text-align:right;">3K</div>
<div class="t" style="position:absolute;right:611.0999999999999px;top:281.1px;font-size:10.5px;line-height:10.5px;font-weight:400;color:#9298ab;white-space:nowrap;text-align:right;">2K</div>
<div class="t" style="position:absolute;right:611.0999999999999px;top:311.5px;font-size:10.5px;line-height:10.5px;font-weight:400;color:#9298ab;white-space:nowrap;text-align:right;">1K</div>
<div class="t" style="position:absolute;right:611.0999999999999px;top:341.9px;font-size:10.5px;line-height:10.5px;font-weight:400;color:#9298ab;white-space:nowrap;text-align:right;">0K</div>
<div style="position:absolute;left:621px;width:80px;top:354.2px;font-size:10.5px;line-height:10.5px;font-weight:400;color:#9298ab;white-space:nowrap;text-align:center;">Feb 22</div>
<div style="position:absolute;left:703.7px;width:80px;top:354.2px;font-size:10.5px;line-height:10.5px;font-weight:400;color:#9298ab;white-space:nowrap;text-align:center;">Feb 23</div>
<div style="position:absolute;left:786px;width:80px;top:354.2px;font-size:10.5px;line-height:10.5px;font-weight:400;color:#9298ab;white-space:nowrap;text-align:center;">Feb 24</div>
<div class="t" style="position:absolute;right:274.19999999999993px;top:159.5px;font-size:10.5px;line-height:10.5px;font-weight:400;color:#9298ab;white-space:nowrap;text-align:right;">100%</div>
<div class="t" style="position:absolute;right:274.19999999999993px;top:196.0px;font-size:10.5px;line-height:10.5px;font-weight:400;color:#9298ab;white-space:nowrap;text-align:right;">80%</div>
<div class="t" style="position:absolute;right:274.19999999999993px;top:232.5px;font-size:10.5px;line-height:10.5px;font-weight:400;color:#9298ab;white-space:nowrap;text-align:right;">60%</div>
<div class="t" style="position:absolute;right:274.19999999999993px;top:269.0px;font-size:10.5px;line-height:10.5px;font-weight:400;color:#9298ab;white-space:nowrap;text-align:right;">40%</div>
<div class="t" style="position:absolute;right:274.19999999999993px;top:305.5px;font-size:10.5px;line-height:10.5px;font-weight:400;color:#9298ab;white-space:nowrap;text-align:right;">20%</div>
<div class="t" style="position:absolute;right:274.19999999999993px;top:342.0px;font-size:10.5px;line-height:10.5px;font-weight:400;color:#9298ab;white-space:nowrap;text-align:right;">0%</div>
<div style="position:absolute;left:956px;width:80px;top:354.2px;font-size:10.5px;line-height:10.5px;font-weight:400;color:#9298ab;white-space:nowrap;text-align:center;">Feb 22</div>
<div style="position:absolute;left:1034.5px;width:80px;top:354.2px;font-size:10.5px;line-height:10.5px;font-weight:400;color:#9298ab;white-space:nowrap;text-align:center;">Feb 23</div>
<div style="position:absolute;left:1113.2px;width:80px;top:354.2px;font-size:10.5px;line-height:10.5px;font-weight:400;color:#9298ab;white-space:nowrap;text-align:center;">Feb 24</div>
<svg style="position:absolute;left:295px;top:480px;" width="160" height="200" viewBox="0 0 160 200"><line x1="0" y1="6.800000000000011" x2="155.5" y2="6.800000000000011" stroke="#2e3447" stroke-width="1"/><line x1="0" y1="43.34000000000003" x2="155.5" y2="43.34000000000003" stroke="#2e3447" stroke-width="1"/><line x1="0" y1="79.88" x2="155.5" y2="79.88" stroke="#2e3447" stroke-width="1"/><line x1="0" y1="116.42000000000007" x2="155.5" y2="116.42000000000007" stroke="#2e3447" stroke-width="1"/><line x1="0" y1="152.96000000000004" x2="155.5" y2="152.96000000000004" stroke="#2e3447" stroke-width="1"/></svg>
<div class="t" style="position:absolute;right:934.8px;top:481.5px;font-size:10.5px;line-height:10.5px;font-weight:400;color:#9298ab;white-space:nowrap;text-align:right;">5K</div>
<div class="t" style="position:absolute;right:934.8px;top:518.1px;font-size:10.5px;line-height:10.5px;font-weight:400;color:#9298ab;white-space:nowrap;text-align:right;">4K</div>
<div class="t" style="position:absolute;right:934.8px;top:554.6px;font-size:10.5px;line-height:10.5px;font-weight:400;color:#9298ab;white-space:nowrap;text-align:right;">3K</div>
<div class="t" style="position:absolute;right:934.8px;top:591.1px;font-size:10.5px;line-height:10.5px;font-weight:400;color:#9298ab;white-space:nowrap;text-align:right;">2K</div>
<div class="t" style="position:absolute;right:934.8px;top:627.7px;font-size:10.5px;line-height:10.5px;font-weight:400;color:#9298ab;white-space:nowrap;text-align:right;">1K</div>
<div class="t" style="position:absolute;right:934.8px;top:664.2px;font-size:10.5px;line-height:10.5px;font-weight:400;color:#9298ab;white-space:nowrap;text-align:right;">0K</div>
<div style="position:absolute;left:280.6px;width:80px;top:676.0px;font-size:10.5px;line-height:10.5px;font-weight:400;color:#9298ab;white-space:nowrap;text-align:center;">Feb 22</div>
<div style="position:absolute;left:332px;width:80px;top:676.0px;font-size:10.5px;line-height:10.5px;font-weight:400;color:#9298ab;white-space:nowrap;text-align:center;">Feb 23</div>
<div style="position:absolute;left:384px;width:80px;top:676.0px;font-size:10.5px;line-height:10.5px;font-weight:400;color:#9298ab;white-space:nowrap;text-align:center;">Feb 24</div>
<div style="position:absolute;left:475.5px;top:468.8px;width:8.0px;height:8.0px;background:#a78bfa;border-radius:2px;"></div>
<div class="t" style="position:absolute;left:487.5px;top:466.6px;font-size:11px;line-height:11px;font-weight:400;color:#a3a9bb;white-space:nowrap;">command...</div>
<div style="position:absolute;left:475.5px;top:489.40000000000003px;width:8.0px;height:8.0px;background:#6f9d89;border-radius:2px;"></div>
<div class="t" style="position:absolute;left:487.5px;top:487.2px;font-size:11px;line-height:11px;font-weight:400;color:#a3a9bb;white-space:nowrap;">command...</div>
<div style="position:absolute;left:475.5px;top:510.0px;width:8.0px;height:8.0px;background:#8a786c;border-radius:2px;"></div>
<div class="t" style="position:absolute;left:487.5px;top:507.8px;font-size:11px;line-height:11px;font-weight:400;color:#a3a9bb;white-space:nowrap;">command...</div>
<div style="position:absolute;left:475.5px;top:530.6px;width:8.0px;height:8.0px;background:#ae9a88;border-radius:2px;"></div>
<div class="t" style="position:absolute;left:487.5px;top:528.4px;font-size:11px;line-height:11px;font-weight:400;color:#a3a9bb;white-space:nowrap;">command...</div>
<div style="position:absolute;left:475.5px;top:551.2px;width:8.0px;height:8.0px;background:#4f86f0;border-radius:2px;"></div>
<div class="t" style="position:absolute;left:487.5px;top:549.0px;font-size:11px;line-height:11px;font-weight:400;color:#a3a9bb;white-space:nowrap;">command...</div>
<div style="position:absolute;left:475.5px;top:571.8px;width:8.0px;height:8.0px;background:#b29f5c;border-radius:2px;"></div>
<div class="t" style="position:absolute;left:487.5px;top:569.6px;font-size:11px;line-height:11px;font-weight:400;color:#a3a9bb;white-space:nowrap;">command...</div>
<div style="position:absolute;left:475.5px;top:592.4px;width:8.0px;height:8.0px;background:#9fb6cf;border-radius:2px;"></div>
<div class="t" style="position:absolute;left:487.5px;top:590.2px;font-size:11px;line-height:11px;font-weight:400;color:#a3a9bb;white-space:nowrap;">command...</div>
<div style="position:absolute;left:475.5px;top:613.0px;width:8.0px;height:8.0px;background:#b3a52c;border-radius:2px;"></div>
<div class="t" style="position:absolute;left:487.5px;top:610.8px;font-size:11px;line-height:11px;font-weight:400;color:#a3a9bb;white-space:nowrap;">command...</div>
<svg style="position:absolute;left:637px;top:480px;" width="240" height="200" viewBox="0 0 240 200"><line x1="0" y1="6.800000000000011" x2="231" y2="6.800000000000011" stroke="#2e3447" stroke-width="1"/><line x1="0" y1="32.89999999999998" x2="231" y2="32.89999999999998" stroke="#2e3447" stroke-width="1"/><line x1="0" y1="59.0" x2="231" y2="59.0" stroke="#2e3447" stroke-width="1"/><line x1="0" y1="85.10000000000002" x2="231" y2="85.10000000000002" stroke="#2e3447" stroke-width="1"/><line x1="0" y1="111.20000000000005" x2="231" y2="111.20000000000005" stroke="#2e3447" stroke-width="1"/><line x1="0" y1="137.29999999999995" x2="231" y2="137.29999999999995" stroke="#2e3447" stroke-width="1"/><line x1="0" y1="163.4000000000001" x2="231" y2="163.4000000000001" stroke="#2e3447" stroke-width="1"/></svg>
<div class="t" style="position:absolute;right:592.8px;top:481.5px;font-size:10.5px;line-height:10.5px;font-weight:400;color:#9298ab;white-space:nowrap;text-align:right;">700 kB</div>
<div class="t" style="position:absolute;right:592.8px;top:507.6px;font-size:10.5px;line-height:10.5px;font-weight:400;color:#9298ab;white-space:nowrap;text-align:right;">600 kB</div>
<div class="t" style="position:absolute;right:592.8px;top:533.7px;font-size:10.5px;line-height:10.5px;font-weight:400;color:#9298ab;white-space:nowrap;text-align:right;">500 kB</div>
<div class="t" style="position:absolute;right:592.8px;top:559.8px;font-size:10.5px;line-height:10.5px;font-weight:400;color:#9298ab;white-space:nowrap;text-align:right;">400 kB</div>
<div class="t" style="position:absolute;right:592.8px;top:585.9px;font-size:10.5px;line-height:10.5px;font-weight:400;color:#9298ab;white-space:nowrap;text-align:right;">300 kB</div>
<div class="t" style="position:absolute;right:592.8px;top:612.0px;font-size:10.5px;line-height:10.5px;font-weight:400;color:#9298ab;white-space:nowrap;text-align:right;">200 kB</div>
<div class="t" style="position:absolute;right:592.8px;top:638.1px;font-size:10.5px;line-height:10.5px;font-weight:400;color:#9298ab;white-space:nowrap;text-align:right;">100 kB</div>
<div class="t" style="position:absolute;right:592.8px;top:664.2px;font-size:10.5px;line-height:10.5px;font-weight:400;color:#9298ab;white-space:nowrap;text-align:right;">0 kB</div>
<div style="position:absolute;left:636.2px;width:80px;top:676.0px;font-size:10.5px;line-height:10.5px;font-weight:400;color:#9298ab;white-space:nowrap;text-align:center;">Feb 22</div>
<div style="position:absolute;left:712.4px;width:80px;top:676.0px;font-size:10.5px;line-height:10.5px;font-weight:400;color:#9298ab;white-space:nowrap;text-align:center;">Feb 23</div>
<div style="position:absolute;left:789.3px;width:80px;top:676.0px;font-size:10.5px;line-height:10.5px;font-weight:400;color:#9298ab;white-space:nowrap;text-align:center;">Feb 24</div>
<svg style="position:absolute;left:959px;top:480px;" width="240" height="200" viewBox="0 0 240 200"><line x1="0" y1="6.800000000000011" x2="233" y2="6.800000000000011" stroke="#2e3447" stroke-width="1"/><line x1="0" y1="33.5" x2="233" y2="33.5" stroke="#2e3447" stroke-width="1"/><line x1="0" y1="60.200000000000045" x2="233" y2="60.200000000000045" stroke="#2e3447" stroke-width="1"/><line x1="0" y1="86.89999999999998" x2="233" y2="86.89999999999998" stroke="#2e3447" stroke-width="1"/><line x1="0" y1="113.60000000000002" x2="233" y2="113.60000000000002" stroke="#2e3447" stroke-width="1"/><line x1="0" y1="140.29999999999995" x2="233" y2="140.29999999999995" stroke="#2e3447" stroke-width="1"/></svg>
<div class="t" style="position:absolute;right:271.29999999999995px;top:481.5px;font-size:10.5px;line-height:10.5px;font-weight:400;color:#9298ab;white-space:nowrap;text-align:right;">3 kB</div>
<div class="t" style="position:absolute;right:271.29999999999995px;top:508.2px;font-size:10.5px;line-height:10.5px;font-weight:400;color:#9298ab;white-space:nowrap;text-align:right;">2.5 kB</div>
<div class="t" style="position:absolute;right:271.29999999999995px;top:534.9px;font-size:10.5px;line-height:10.5px;font-weight:400;color:#9298ab;white-space:nowrap;text-align:right;">2 kB</div>
<div class="t" style="position:absolute;right:271.29999999999995px;top:561.6px;font-size:10.5px;line-height:10.5px;font-weight:400;color:#9298ab;white-space:nowrap;text-align:right;">1.5 kB</div>
<div class="t" style="position:absolute;right:271.29999999999995px;top:588.3px;font-size:10.5px;line-height:10.5px;font-weight:400;color:#9298ab;white-space:nowrap;text-align:right;">1 kB</div>
<div class="t" style="position:absolute;right:271.29999999999995px;top:615.0px;font-size:10.5px;line-height:10.5px;font-weight:400;color:#9298ab;white-space:nowrap;text-align:right;">500 B</div>
<div class="t" style="position:absolute;right:271.29999999999995px;top:641.7px;font-size:10.5px;line-height:10.5px;font-weight:400;color:#9298ab;white-space:nowrap;text-align:right;">0 B</div>
<div style="position:absolute;left:958px;width:80px;top:653.9px;font-size:10.5px;line-height:10.5px;font-weight:400;color:#9298ab;white-space:nowrap;text-align:center;">Feb 22</div>
<div style="position:absolute;left:1035.5px;width:80px;top:653.9px;font-size:10.5px;line-height:10.5px;font-weight:400;color:#9298ab;white-space:nowrap;text-align:center;">Feb 23</div>
<div style="position:absolute;left:1113.3px;width:80px;top:653.9px;font-size:10.5px;line-height:10.5px;font-weight:400;color:#9298ab;white-space:nowrap;text-align:center;">Feb 24</div>
<div style="position:absolute;left:922.5px;top:677.5px;width:6.5px;height:8.5px;background:#4f86f0;border-radius:2px;"></div>
<div class="t" style="position:absolute;left:934px;top:676.6px;font-size:11px;line-height:11px;font-weight:400;color:#a3a9bb;white-space:nowrap;">Read</div>
<div style="position:absolute;left:969px;top:677.5px;width:6.5px;height:8.5px;background:#3fa07a;border-radius:2px;"></div>
<div class="t" style="position:absolute;left:980px;top:676.6px;font-size:11px;line-height:11px;font-weight:400;color:#a3a9bb;white-space:nowrap;">Write</div>
<div class="t" style="position:absolute;right:921.3px;top:787.2px;font-size:10.5px;line-height:10.5px;font-weight:400;color:#9298ab;white-space:nowrap;text-align:right;">100%</div>
<div class="t" style="position:absolute;right:921.3px;top:822.6px;font-size:10.5px;line-height:10.5px;font-weight:400;color:#9298ab;white-space:nowrap;text-align:right;">80%</div>
<div class="t" style="position:absolute;right:921.3px;top:858.1px;font-size:10.5px;line-height:10.5px;font-weight:400;color:#9298ab;white-space:nowrap;text-align:right;">60%</div>
<div class="t" style="position:absolute;right:921.3px;top:893.5px;font-size:10.5px;line-height:10.5px;font-weight:400;color:#9298ab;white-space:nowrap;text-align:right;">40%</div>
<div class="t" style="position:absolute;right:921.3px;top:928.9px;font-size:10.5px;line-height:10.5px;font-weight:400;color:#9298ab;white-space:nowrap;text-align:right;">20%</div>
<div class="t" style="position:absolute;right:921.3px;top:964.3px;font-size:10.5px;line-height:10.5px;font-weight:400;color:#9298ab;white-space:nowrap;text-align:right;">0%</div>
<div style="position:absolute;left:308.7px;width:80px;top:976.4px;font-size:10.5px;line-height:10.5px;font-weight:400;color:#9298ab;white-space:nowrap;text-align:center;">Feb 22</div>
<div style="position:absolute;left:386.2px;width:80px;top:976.4px;font-size:10.5px;line-height:10.5px;font-weight:400;color:#9298ab;white-space:nowrap;text-align:center;">Feb 23</div>
<div style="position:absolute;left:464.1px;width:80px;top:976.4px;font-size:10.5px;line-height:10.5px;font-weight:400;color:#9298ab;white-space:nowrap;text-align:center;">Feb 24</div>
<div style="position:absolute;left:274.5px;top:1000.5px;width:6.5px;height:8.5px;background:#b5a22c;border-radius:2px;"></div>
<div class="t" style="position:absolute;left:286px;top:999.1px;font-size:11px;line-height:11px;font-weight:400;color:#a3a9bb;white-space:nowrap;">Get</div>
<div style="position:absolute;left:313px;top:1000.5px;width:6.5px;height:8.5px;background:#4f86f0;border-radius:2px;"></div>
<div class="t" style="position:absolute;left:325px;top:999.1px;font-size:11px;line-height:11px;font-weight:400;color:#a3a9bb;white-space:nowrap;">Set</div>
<div class="t" style="position:absolute;right:612.8px;top:787.2px;font-size:10.5px;line-height:10.5px;font-weight:400;color:#9298ab;white-space:nowrap;text-align:right;">10</div>
<div class="t" style="position:absolute;right:612.8px;top:822.6px;font-size:10.5px;line-height:10.5px;font-weight:400;color:#9298ab;white-space:nowrap;text-align:right;">8</div>
<div class="t" style="position:absolute;right:612.8px;top:858.1px;font-size:10.5px;line-height:10.5px;font-weight:400;color:#9298ab;white-space:nowrap;text-align:right;">6</div>
<div class="t" style="position:absolute;right:612.8px;top:893.5px;font-size:10.5px;line-height:10.5px;font-weight:400;color:#9298ab;white-space:nowrap;text-align:right;">4</div>
<div class="t" style="position:absolute;right:612.8px;top:928.9px;font-size:10.5px;line-height:10.5px;font-weight:400;color:#9298ab;white-space:nowrap;text-align:right;">2</div>
<div class="t" style="position:absolute;right:612.8px;top:964.3px;font-size:10.5px;line-height:10.5px;font-weight:400;color:#9298ab;white-space:nowrap;text-align:right;">0</div>
<div style="position:absolute;left:621.8px;width:80px;top:976.4px;font-size:10.5px;line-height:10.5px;font-weight:400;color:#9298ab;white-space:nowrap;text-align:center;">Feb 22</div>
<div style="position:absolute;left:703.2px;width:80px;top:976.4px;font-size:10.5px;line-height:10.5px;font-weight:400;color:#9298ab;white-space:nowrap;text-align:center;">Feb 23</div>
<div style="position:absolute;left:784.5px;width:80px;top:976.4px;font-size:10.5px;line-height:10.5px;font-weight:400;color:#9298ab;white-space:nowrap;text-align:center;">Feb 24</div>
<div style="position:absolute;left:598px;top:1000.5px;width:6.5px;height:8.5px;background:#c29a8c;border-radius:2px;"></div>
<div class="t" style="position:absolute;left:609.5px;top:999.1px;font-size:11px;line-height:11px;font-weight:400;color:#a3a9bb;white-space:nowrap;">Evicted</div>
<div style="position:absolute;left:657px;top:1000.5px;width:6.5px;height:8.5px;background:#7fc99a;border-radius:2px;"></div>
<div class="t" style="position:absolute;left:667.5px;top:999.1px;font-size:11px;line-height:11px;font-weight:400;color:#a3a9bb;white-space:nowrap;">Reclaimed</div>
<svg style="position:absolute;left:946px;top:800px;" width="250" height="200" viewBox="0 0 250 200"><line x1="0" y1="9.399999999999977" x2="246" y2="9.399999999999977" stroke="#2e3447" stroke-width="1"/><line x1="0" y1="45.77999999999997" x2="246" y2="45.77999999999997" stroke="#2e3447" stroke-width="1"/><line x1="0" y1="82.15999999999997" x2="246" y2="82.15999999999997" stroke="#2e3447" stroke-width="1"/><line x1="0" y1="118.53999999999996" x2="246" y2="118.53999999999996" stroke="#2e3447" stroke-width="1"/><line x1="0" y1="154.91999999999996" x2="246" y2="154.91999999999996" stroke="#2e3447" stroke-width="1"/></svg>
<div class="t" style="position:absolute;right:282.19999999999993px;top:804.1px;font-size:10.5px;line-height:10.5px;font-weight:400;color:#9298ab;white-space:nowrap;text-align:right;">100</div>
<div class="t" style="position:absolute;right:282.19999999999993px;top:840.5px;font-size:10.5px;line-height:10.5px;font-weight:400;color:#9298ab;white-space:nowrap;text-align:right;">80</div>
<div class="t" style="position:absolute;right:282.19999999999993px;top:876.9px;font-size:10.5px;line-height:10.5px;font-weight:400;color:#9298ab;white-space:nowrap;text-align:right;">60</div>
<div class="t" style="position:absolute;right:282.19999999999993px;top:913.3px;font-size:10.5px;line-height:10.5px;font-weight:400;color:#9298ab;white-space:nowrap;text-align:right;">40</div>
<div class="t" style="position:absolute;right:282.19999999999993px;top:949.6px;font-size:10.5px;line-height:10.5px;font-weight:400;color:#9298ab;white-space:nowrap;text-align:right;">20</div>
<div class="t" style="position:absolute;right:282.19999999999993px;top:986.0px;font-size:10.5px;line-height:10.5px;font-weight:400;color:#9298ab;white-space:nowrap;text-align:right;">0</div>
<div style="position:absolute;left:949px;width:80px;top:998.5px;font-size:10.5px;line-height:10.5px;font-weight:400;color:#9298ab;white-space:nowrap;text-align:center;">Feb 22</div>
<div style="position:absolute;left:1030.5px;width:80px;top:998.5px;font-size:10.5px;line-height:10.5px;font-weight:400;color:#9298ab;white-space:nowrap;text-align:center;">Feb 23</div>
<div style="position:absolute;left:1111.9px;width:80px;top:998.5px;font-size:10.5px;line-height:10.5px;font-weight:400;color:#9298ab;white-space:nowrap;text-align:center;">Feb 24</div>
<svg style="position:absolute;left:610px;top:155px;" width="270" height="200" viewBox="0 0 270 200"><rect x="6.00" y="36.50" width="254.00" height="160.50" fill="#45163b"/><path d="M7.30 192.30 L7.30 69.94 L8.97 69.94 L8.97 54.88 L10.64 54.88 L10.64 68.17 L12.31 68.17 L12.31 78.49 L13.98 78.49 L13.98 64.27 L15.65 64.27 L15.65 56.33 L17.32 56.33 L17.32 58.54 L18.99 58.54 L18.99 83.04 L20.66 83.04 L20.66 53.58 L22.33 53.58 L22.33 58.18 L24.00 58.18 L24.00 53.91 L25.67 53.91 L25.67 47.26 L27.34 47.26 L27.34 70.32 L29.01 70.32 L29.01 67.81 L30.68 67.81 L30.68 68.43 L32.35 68.43 L32.35 34.28 L34.02 34.28 L34.02 52.60 L35.69 52.60 L35.69 52.95 L37.36 52.95 L37.36 39.90 L39.03 39.90 L39.03 71.60 L40.70 71.60 L40.70 72.04 L42.37 72.04 L42.37 53.44 L44.04 53.44 L44.04 55.32 L45.71 55.32 L45.71 56.76 L47.38 56.76 L47.38 64.29 L49.05 64.29 L49.05 50.45 L50.72 50.45 L50.72 53.61 L52.39 53.61 L52.39 56.08 L54.06 56.08 L54.06 82.47 L55.73 82.47 L55.73 78.71 L57.40 78.71 L57.40 40.74 L59.07 40.74 L59.07 80.20 L60.74 80.20 L60.74 80.66 L62.41 80.66 L62.41 34.93 L64.08 34.93 L64.08 37.02 L65.75 37.02 L65.75 37.76 L67.42 37.76 L67.42 34.48 L69.09 34.48 L69.09 39.75 L70.76 39.75 L70.76 56.75 L72.43 56.75 L72.43 81.50 L74.10 81.50 L74.10 76.62 L75.77 76.62 L75.77 72.52 L77.44 72.52 L77.44 53.76 L79.11 53.76 L79.11 66.04 L80.78 66.04 L80.78 36.45 L82.45 36.45 L82.45 53.92 L84.12 53.92 L84.12 60.78 L85.79 60.78 L85.79 78.10 L87.46 78.10 L87.46 56.22 L89.13 56.22 L89.13 57.60 L90.80 57.60 L90.80 41.40 L92.47 41.40 L92.47 76.18 L94.14 76.18 L94.14 54.27 L95.81 54.27 L95.81 52.99 L97.48 52.99 L97.48 66.53 L99.15 66.53 L99.15 36.23 L100.82 36.23 L100.82 51.99 L102.49 51.99 L102.49 54.25 L104.16 54.25 L104.16 72.61 L105.83 72.61 L105.83 36.87 L107.50 36.87 L107.50 53.08 L109.17 53.08 L109.17 62.32 L110.84 62.32 L110.84 58.10 L112.51 58.10 L112.51 55.33 L114.18 55.33 L114.18 43.07 L115.85 43.07 L115.85 68.99 L117.52 68.99 L117.52 74.20 L119.19 74.20 L119.19 81.98 L120.86 81.98 L120.86 60.85 L122.53 60.85 L122.53 60.85 L124.20 60.85 L124.20 59.06 L125.87 59.06 L125.87 73.15 L127.54 73.15 L127.54 55.63 L129.21 55.63 L129.21 71.06 L130.88 71.06 L130.88 56.82 L132.55 56.82 L132.55 44.37 L134.22 44.37 L134.22 42.99 L135.89 42.99 L135.89 52.67 L137.56 52.67 L137.56 40.66 L139.23 40.66 L139.23 65.84 L140.90 65.84 L140.90 40.29 L142.57 40.29 L142.57 83.43 L144.24 83.43 L144.24 41.56 L145.91 41.56 L145.91 68.51 L147.58 68.51 L147.58 58.27 L149.25 58.27 L149.25 74.77 L150.92 74.77 L150.92 36.51 L152.59 36.51 L152.59 63.31 L154.26 63.31 L154.26 42.35 L155.93 42.35 L155.93 78.04 L157.60 78.04 L157.60 58.65 L159.27 58.65 L159.27 44.36 L160.94 44.36 L160.94 46.47 L162.61 46.47 L162.61 57.66 L164.28 57.66 L164.28 61.68 L165.95 61.68 L165.95 47.58 L167.62 47.58 L167.62 48.47 L169.29 48.47 L169.29 64.41 L170.96 64.41 L170.96 74.31 L172.63 74.31 L172.63 53.03 L174.30 53.03 L174.30 37.31 L175.97 37.31 L175.97 83.06 L177.64 83.06 L177.64 39.29 L179.31 39.29 L179.31 47.48 L180.98 47.48 L180.98 83.59 L182.65 83.59 L182.65 57.40 L184.32 57.40 L184.32 64.30 L185.99 64.30 L185.99 64.27 L187.66 64.27 L187.66 58.61 L189.33 58.61 L189.33 46.98 L191.00 46.98 L191.00 47.06 L192.67 47.06 L192.67 51.92 L194.34 51.92 L194.34 73.34 L196.01 73.34 L196.01 67.77 L197.68 67.77 L197.68 39.28 L199.35 39.28 L199.35 35.86 L201.02 35.86 L201.02 47.51 L202.69 47.51 L202.69 64.41 L204.36 64.41 L204.36 72.35 L206.03 72.35 L206.03 56.31 L207.70 56.31 L207.70 54.24 L209.37 54.24 L209.37 40.98 L211.04 40.98 L211.04 58.26 L212.71 58.26 L212.71 36.65 L214.38 36.65 L214.38 53.08 L216.05 53.08 L216.05 67.24 L217.72 67.24 L217.72 74.15 L219.39 74.15 L219.39 56.53 L221.06 56.53 L221.06 70.31 L222.73 70.31 L222.73 59.86 L224.40 59.86 L224.40 83.47 L226.07 83.47 L226.07 82.34 L227.74 82.34 L227.74 39.38 L229.41 39.38 L229.41 45.98 L231.08 45.98 L231.08 61.28 L232.75 61.28 L232.75 62.38 L234.42 62.38 L234.42 68.66 L236.09 68.66 L236.09 45.73 L237.76 45.73 L237.76 75.12 L239.43 75.12 L239.43 63.99 L241.10 63.99 L241.10 57.45 L242.77 57.45 L242.77 37.98 L244.44 37.98 L244.44 37.85 L246.11 37.85 L246.11 53.47 L247.78 53.47 L247.78 45.51 L249.45 45.51 L249.45 68.32 L251.12 68.32 L251.12 83.49 L252.79 83.49 L252.79 67.91 L254.46 67.91 L254.46 58.81 L256.13 58.81 L256.13 68.71 L257.80 68.71 L257.80 192.30Z" fill="#c66bcb"/><rect x="7.72" y="42.98" width="1.00" height="25.52" fill="#b98bd6"/><rect x="9.69" y="54.87" width="1.00" height="13.08" fill="#b98bd6"/><rect x="10.63" y="46.42" width="1.00" height="32.59" fill="#b98bd6"/><rect x="14.01" y="52.93" width="1.00" height="20.67" fill="#a57ccc"/><rect x="16.89" y="44.13" width="1.00" height="22.01" fill="#a57ccc"/><rect x="19.86" y="52.83" width="1.00" height="12.48" fill="#b98bd6"/><rect x="32.13" y="52.30" width="1.00" height="12.67" fill="#a57ccc"/><rect x="32.84" y="37.15" width="1.00" height="20.50" fill="#b690d9"/><rect x="35.31" y="31.89" width="1.00" height="41.96" fill="#b690d9"/><rect x="36.09" y="51.63" width="1.00" height="8.31" fill="#b98bd6"/><rect x="37.24" y="31.36" width="1.00" height="33.60" fill="#a57ccc"/><rect x="39.50" y="38.75" width="1.00" height="40.58" fill="#b690d9"/><rect x="40.97" y="34.83" width="1.00" height="35.10" fill="#a57ccc"/><rect x="47.63" y="56.50" width="1.00" height="20.41" fill="#b690d9"/><rect x="52.45" y="53.07" width="1.00" height="23.61" fill="#b690d9"/><rect x="58.07" y="36.45" width="1.00" height="34.42" fill="#b98bd6"/><rect x="60.06" y="52.47" width="1.00" height="17.14" fill="#a57ccc"/><rect x="63.54" y="45.43" width="1.00" height="14.16" fill="#b98bd6"/><rect x="66.48" y="35.66" width="1.00" height="35.31" fill="#b690d9"/><rect x="72.75" y="41.22" width="1.00" height="24.80" fill="#b98bd6"/><rect x="74.33" y="32.22" width="1.00" height="27.23" fill="#b690d9"/><rect x="75.20" y="32.65" width="1.00" height="23.10" fill="#a57ccc"/><rect x="76.30" y="53.30" width="1.00" height="20.86" fill="#b690d9"/><rect x="79.30" y="45.00" width="1.00" height="34.53" fill="#b98bd6"/><rect x="81.41" y="50.66" width="1.00" height="2.86" fill="#b98bd6"/><rect x="87.33" y="29.66" width="1.00" height="32.58" fill="#a57ccc"/><rect x="89.87" y="41.94" width="1.00" height="34.74" fill="#b690d9"/><rect x="91.29" y="46.94" width="1.00" height="31.50" fill="#b690d9"/><rect x="92.70" y="51.07" width="1.00" height="21.20" fill="#b98bd6"/><rect x="103.41" y="41.28" width="1.00" height="17.76" fill="#b690d9"/><rect x="106.89" y="30.52" width="1.00" height="25.88" fill="#a57ccc"/><rect x="108.12" y="31.24" width="1.00" height="37.07" fill="#a57ccc"/><rect x="109.94" y="43.22" width="1.00" height="23.38" fill="#b98bd6"/><rect x="111.84" y="37.84" width="1.00" height="33.88" fill="#b690d9"/><rect x="116.50" y="38.78" width="1.00" height="39.60" fill="#b98bd6"/><rect x="118.14" y="29.98" width="1.00" height="24.00" fill="#b690d9"/><rect x="118.53" y="37.77" width="1.00" height="35.18" fill="#b690d9"/><rect x="121.56" y="35.14" width="1.00" height="19.79" fill="#b690d9"/><rect x="126.07" y="40.51" width="1.00" height="26.84" fill="#b690d9"/><rect x="127.33" y="54.07" width="1.00" height="15.81" fill="#b690d9"/><rect x="128.42" y="50.97" width="1.00" height="12.92" fill="#b98bd6"/><rect x="132.73" y="50.16" width="1.00" height="26.13" fill="#b98bd6"/><rect x="139.91" y="50.70" width="1.00" height="10.38" fill="#a57ccc"/><rect x="141.16" y="50.49" width="1.00" height="22.78" fill="#b690d9"/><rect x="143.93" y="38.81" width="1.00" height="23.82" fill="#b690d9"/><rect x="145.51" y="40.54" width="1.00" height="36.48" fill="#a57ccc"/><rect x="150.52" y="51.76" width="1.00" height="1.21" fill="#b98bd6"/><rect x="152.59" y="48.61" width="1.00" height="10.83" fill="#b690d9"/><rect x="153.60" y="34.80" width="1.00" height="22.09" fill="#b690d9"/><rect x="156.54" y="54.19" width="1.00" height="21.43" fill="#a57ccc"/><rect x="162.42" y="47.88" width="1.00" height="29.29" fill="#b98bd6"/><rect x="164.59" y="42.25" width="1.00" height="24.31" fill="#a57ccc"/><rect x="167.12" y="49.58" width="1.00" height="5.32" fill="#a57ccc"/><rect x="169.94" y="37.60" width="1.00" height="23.23" fill="#b98bd6"/><rect x="170.63" y="39.56" width="1.00" height="31.31" fill="#b690d9"/><rect x="173.12" y="41.36" width="1.00" height="13.77" fill="#a57ccc"/><rect x="173.60" y="35.35" width="1.00" height="36.13" fill="#b98bd6"/><rect x="180.14" y="34.61" width="1.00" height="44.55" fill="#a57ccc"/><rect x="181.93" y="52.91" width="1.00" height="11.48" fill="#b98bd6"/><rect x="187.05" y="36.62" width="1.00" height="19.10" fill="#b98bd6"/><rect x="188.86" y="56.87" width="1.00" height="18.61" fill="#b98bd6"/><rect x="192.57" y="42.75" width="1.00" height="15.51" fill="#b690d9"/><rect x="194.60" y="55.50" width="1.00" height="15.74" fill="#b690d9"/><rect x="196.29" y="37.00" width="1.00" height="25.06" fill="#b690d9"/><rect x="197.36" y="32.32" width="1.00" height="38.24" fill="#b98bd6"/><rect x="199.07" y="30.58" width="1.00" height="30.85" fill="#b98bd6"/><rect x="201.98" y="40.69" width="1.00" height="37.87" fill="#a57ccc"/><rect x="204.50" y="47.62" width="1.00" height="29.75" fill="#b98bd6"/><rect x="211.09" y="46.40" width="1.00" height="29.42" fill="#a57ccc"/><rect x="217.05" y="47.30" width="1.00" height="18.05" fill="#b98bd6"/><rect x="217.34" y="49.63" width="1.00" height="27.05" fill="#a57ccc"/><rect x="223.53" y="44.65" width="1.00" height="13.27" fill="#b98bd6"/><rect x="225.66" y="52.26" width="1.00" height="21.12" fill="#a57ccc"/><rect x="229.03" y="32.71" width="1.00" height="36.10" fill="#b98bd6"/><rect x="235.17" y="46.91" width="1.00" height="6.76" fill="#a57ccc"/><rect x="238.70" y="52.16" width="1.00" height="26.30" fill="#b690d9"/><rect x="240.25" y="43.30" width="1.00" height="22.40" fill="#b98bd6"/><rect x="242.00" y="31.85" width="1.00" height="23.56" fill="#b98bd6"/><rect x="242.79" y="51.42" width="1.00" height="16.87" fill="#b690d9"/><rect x="246.27" y="32.31" width="1.00" height="25.34" fill="#b690d9"/><rect x="248.41" y="43.10" width="1.00" height="32.60" fill="#b690d9"/><rect x="256.06" y="50.74" width="1.00" height="9.47" fill="#b690d9"/><rect x="7.30" y="180.75" width="250.50" height="11.55" fill="#b57ed3"/><rect x="256.30" y="34.22" width="1.50" height="158.08" fill="#b08ad6"/><rect x="8.50" y="67.66" width="5.50" height="124.64" fill="#b67ed2"/></svg>
<svg style="position:absolute;left:950px;top:155px;" width="250" height="200" viewBox="0 0 250 200"><rect x="2.80" y="5.00" width="239.70" height="191.00" fill="#053c32"/><path d="M6.50 192.30 L6.50 20.31 L8.07 20.31 L8.07 19.94 L9.64 19.94 L9.64 19.98 L11.21 19.98 L11.21 25.50 L12.78 25.50 L12.78 20.48 L14.35 20.48 L14.35 21.46 L15.92 21.46 L15.92 21.21 L17.49 21.21 L17.49 20.62 L19.07 20.62 L19.07 26.86 L20.64 26.86 L20.64 19.99 L22.21 19.99 L22.21 21.37 L23.78 21.37 L23.78 21.41 L25.35 21.41 L25.35 21.43 L26.92 21.43 L26.92 23.28 L28.49 23.28 L28.49 21.27 L30.06 21.27 L30.06 20.07 L31.63 20.07 L31.63 19.91 L33.20 19.91 L33.20 20.43 L34.77 20.43 L34.77 19.95 L36.34 19.95 L36.34 19.90 L37.91 19.90 L37.91 21.12 L39.48 21.12 L39.48 21.36 L41.05 21.36 L41.05 21.54 L42.63 21.54 L42.63 20.56 L44.20 20.56 L44.20 24.34 L45.77 24.34 L45.77 21.10 L47.34 21.10 L47.34 20.79 L48.91 20.79 L48.91 20.78 L50.48 20.78 L50.48 21.56 L52.05 21.56 L52.05 21.62 L53.62 21.62 L53.62 20.12 L55.19 20.12 L55.19 23.74 L56.76 23.74 L56.76 20.61 L58.33 20.61 L58.33 27.79 L59.90 27.79 L59.90 19.92 L61.47 19.92 L61.47 20.28 L63.04 20.28 L63.04 19.94 L64.61 19.94 L64.61 21.02 L66.19 21.02 L66.19 20.25 L67.76 20.25 L67.76 20.30 L69.33 20.30 L69.33 20.09 L70.90 20.09 L70.90 22.87 L72.47 22.87 L72.47 21.04 L74.04 21.04 L74.04 19.99 L75.61 19.99 L75.61 19.98 L77.18 19.98 L77.18 21.09 L78.75 21.09 L78.75 21.34 L80.32 21.34 L80.32 27.23 L81.89 27.23 L81.89 19.84 L83.46 19.84 L83.46 21.57 L85.03 21.57 L85.03 20.69 L86.60 20.69 L86.60 21.23 L88.17 21.23 L88.17 20.15 L89.75 20.15 L89.75 20.89 L91.32 20.89 L91.32 23.03 L92.89 23.03 L92.89 25.35 L94.46 25.35 L94.46 21.42 L96.03 21.42 L96.03 19.93 L97.60 19.93 L97.60 20.22 L99.17 20.22 L99.17 20.87 L100.74 20.87 L100.74 20.12 L102.31 20.12 L102.31 20.84 L103.88 20.84 L103.88 20.11 L105.45 20.11 L105.45 20.83 L107.02 20.83 L107.02 20.33 L108.59 20.33 L108.59 21.13 L110.16 21.13 L110.16 21.40 L111.73 21.40 L111.73 19.86 L113.31 19.86 L113.31 20.52 L114.88 20.52 L114.88 21.04 L116.45 21.04 L116.45 21.17 L118.02 21.17 L118.02 20.08 L119.59 20.08 L119.59 20.23 L121.16 20.23 L121.16 20.39 L122.73 20.39 L122.73 20.28 L124.30 20.28 L124.30 20.38 L125.87 20.38 L125.87 20.78 L127.44 20.78 L127.44 20.40 L129.01 20.40 L129.01 19.94 L130.58 19.94 L130.58 20.60 L132.15 20.60 L132.15 25.06 L133.72 25.06 L133.72 20.44 L135.29 20.44 L135.29 20.17 L136.87 20.17 L136.87 20.21 L138.44 20.21 L138.44 20.49 L140.01 20.49 L140.01 20.15 L141.58 20.15 L141.58 20.12 L143.15 20.12 L143.15 20.41 L144.72 20.41 L144.72 19.92 L146.29 19.92 L146.29 20.70 L147.86 20.70 L147.86 20.14 L149.43 20.14 L149.43 20.79 L151.00 20.79 L151.00 20.35 L152.57 20.35 L152.57 21.35 L154.14 21.35 L154.14 20.60 L155.71 20.60 L155.71 20.89 L157.28 20.89 L157.28 20.25 L158.85 20.25 L158.85 20.35 L160.43 20.35 L160.43 27.17 L162.00 27.17 L162.00 20.48 L163.57 20.48 L163.57 20.41 L165.14 20.41 L165.14 21.59 L166.71 21.59 L166.71 21.25 L168.28 21.25 L168.28 27.32 L169.85 27.32 L169.85 21.33 L171.42 21.33 L171.42 21.60 L172.99 21.60 L172.99 20.97 L174.56 20.97 L174.56 20.59 L176.13 20.59 L176.13 20.01 L177.70 20.01 L177.70 25.83 L179.27 25.83 L179.27 20.91 L180.84 20.91 L180.84 20.15 L182.41 20.15 L182.41 21.60 L183.99 21.60 L183.99 21.49 L185.56 21.49 L185.56 21.04 L187.13 21.04 L187.13 19.91 L188.70 19.91 L188.70 20.90 L190.27 20.90 L190.27 20.49 L191.84 20.49 L191.84 21.40 L193.41 21.40 L193.41 20.63 L194.98 20.63 L194.98 19.90 L196.55 19.90 L196.55 21.02 L198.12 21.02 L198.12 21.66 L199.69 21.66 L199.69 20.63 L201.26 20.63 L201.26 21.41 L202.83 21.41 L202.83 20.04 L204.40 20.04 L204.40 20.87 L205.97 20.87 L205.97 21.13 L207.55 21.13 L207.55 20.97 L209.12 20.97 L209.12 19.99 L210.69 19.99 L210.69 21.19 L212.26 21.19 L212.26 20.76 L213.83 20.76 L213.83 21.08 L215.40 21.08 L215.40 20.77 L216.97 20.77 L216.97 20.79 L218.54 20.79 L218.54 20.53 L220.11 20.53 L220.11 21.13 L221.68 21.13 L221.68 20.15 L223.25 20.15 L223.25 25.13 L224.82 25.13 L224.82 19.96 L226.39 19.96 L226.39 21.21 L227.96 21.21 L227.96 21.38 L229.53 21.38 L229.53 21.13 L231.11 21.13 L231.11 20.80 L232.68 20.80 L232.68 20.56 L234.25 20.56 L234.25 21.45 L235.82 21.45 L235.82 21.11 L237.39 21.11 L237.39 21.05 L238.96 21.05 L238.96 20.70 L240.53 20.70 L240.53 21.00 L242.10 21.00 L242.10 192.30Z" fill="#02a2e5"/><rect x="8.84" y="18.66" width="1.30" height="4.14" fill="#6a84e8"/><rect x="10.35" y="13.91" width="1.30" height="9.06" fill="#6a84e8"/><rect x="11.85" y="14.72" width="1.30" height="6.83" fill="#6a84e8"/><rect x="14.07" y="13.94" width="1.30" height="7.57" fill="#6a84e8"/><rect x="17.10" y="18.90" width="1.30" height="2.45" fill="#6a84e8"/><rect x="18.94" y="16.66" width="1.30" height="6.38" fill="#6a84e8"/><rect x="19.07" y="15.82" width="1.30" height="6.19" fill="#5f7fe4"/><rect x="20.82" y="12.94" width="1.30" height="8.38" fill="#5f7fe4"/><rect x="21.81" y="18.42" width="1.30" height="3.95" fill="#6a84e8"/><rect x="25.89" y="14.21" width="1.30" height="6.67" fill="#5f7fe4"/><rect x="27.38" y="17.59" width="1.30" height="5.39" fill="#5f7fe4"/><rect x="29.06" y="14.87" width="1.30" height="6.81" fill="#5f7fe4"/><rect x="30.07" y="18.06" width="1.30" height="4.34" fill="#5f7fe4"/><rect x="32.75" y="13.92" width="1.30" height="8.23" fill="#6a84e8"/><rect x="33.62" y="18.52" width="1.30" height="3.06" fill="#5f7fe4"/><rect x="34.58" y="16.81" width="1.30" height="4.10" fill="#5f7fe4"/><rect x="36.72" y="17.07" width="1.30" height="4.36" fill="#5f7fe4"/><rect x="39.28" y="16.09" width="1.30" height="7.04" fill="#5f7fe4"/><rect x="40.46" y="14.05" width="1.30" height="9.19" fill="#5f7fe4"/><rect x="41.30" y="16.08" width="1.30" height="6.14" fill="#6a84e8"/><rect x="43.84" y="14.97" width="1.30" height="7.47" fill="#5f7fe4"/><rect x="45.27" y="13.13" width="1.30" height="8.31" fill="#5f7fe4"/><rect x="45.80" y="12.93" width="1.30" height="10.17" fill="#6a84e8"/><rect x="47.79" y="16.49" width="1.30" height="5.32" fill="#6a84e8"/><rect x="49.19" y="13.65" width="1.30" height="8.86" fill="#6a84e8"/><rect x="50.49" y="12.71" width="1.30" height="9.36" fill="#5f7fe4"/><rect x="51.12" y="18.22" width="1.30" height="5.18" fill="#5f7fe4"/><rect x="52.23" y="12.08" width="1.30" height="9.59" fill="#6a84e8"/><rect x="54.07" y="12.43" width="1.30" height="9.36" fill="#6a84e8"/><rect x="55.53" y="17.53" width="1.30" height="4.17" fill="#5f7fe4"/><rect x="56.54" y="12.50" width="1.30" height="10.57" fill="#6a84e8"/><rect x="61.83" y="18.68" width="1.30" height="2.35" fill="#6a84e8"/><rect x="62.59" y="12.08" width="1.30" height="9.53" fill="#6a84e8"/><rect x="65.72" y="14.04" width="1.30" height="8.65" fill="#5f7fe4"/><rect x="67.00" y="17.46" width="1.30" height="5.96" fill="#5f7fe4"/><rect x="67.73" y="12.27" width="1.30" height="9.28" fill="#6a84e8"/><rect x="69.09" y="18.44" width="1.30" height="2.33" fill="#6a84e8"/><rect x="71.26" y="14.02" width="1.30" height="6.89" fill="#6a84e8"/><rect x="71.87" y="15.55" width="1.30" height="6.69" fill="#6a84e8"/><rect x="74.32" y="12.83" width="1.30" height="8.37" fill="#6a84e8"/><rect x="75.87" y="13.06" width="1.30" height="10.17" fill="#6a84e8"/><rect x="77.25" y="18.56" width="1.30" height="3.84" fill="#5f7fe4"/><rect x="80.20" y="14.25" width="1.30" height="6.84" fill="#5f7fe4"/><rect x="82.62" y="15.99" width="1.30" height="6.05" fill="#5f7fe4"/><rect x="85.30" y="11.73" width="1.30" height="11.31" fill="#5f7fe4"/><rect x="86.08" y="18.80" width="1.30" height="3.21" fill="#6a84e8"/><rect x="89.22" y="17.96" width="1.30" height="5.50" fill="#6a84e8"/><rect x="93.56" y="17.91" width="1.30" height="4.25" fill="#6a84e8"/><rect x="94.78" y="17.98" width="1.30" height="5.29" fill="#5f7fe4"/><rect x="98.03" y="16.91" width="1.30" height="5.23" fill="#5f7fe4"/><rect x="99.45" y="16.84" width="1.30" height="5.63" fill="#5f7fe4"/><rect x="103.03" y="13.31" width="1.30" height="10.18" fill="#6a84e8"/><rect x="105.91" y="15.70" width="1.30" height="5.55" fill="#5f7fe4"/><rect x="108.11" y="13.00" width="1.30" height="9.44" fill="#5f7fe4"/><rect x="109.45" y="17.92" width="1.30" height="4.20" fill="#6a84e8"/><rect x="110.61" y="13.35" width="1.30" height="8.61" fill="#5f7fe4"/><rect x="114.92" y="17.04" width="1.30" height="3.84" fill="#5f7fe4"/><rect x="116.21" y="16.28" width="1.30" height="6.30" fill="#5f7fe4"/><rect x="118.11" y="17.73" width="1.30" height="3.06" fill="#6a84e8"/><rect x="119.86" y="13.75" width="1.30" height="8.52" fill="#6a84e8"/><rect x="120.97" y="16.61" width="1.30" height="4.37" fill="#6a84e8"/><rect x="122.27" y="18.57" width="1.30" height="3.09" fill="#5f7fe4"/><rect x="125.25" y="18.17" width="1.30" height="3.09" fill="#6a84e8"/><rect x="126.35" y="18.92" width="1.30" height="2.08" fill="#5f7fe4"/><rect x="128.88" y="17.35" width="1.30" height="5.38" fill="#5f7fe4"/><rect x="130.33" y="13.34" width="1.30" height="7.99" fill="#6a84e8"/><rect x="132.09" y="11.75" width="1.30" height="9.43" fill="#5f7fe4"/><rect x="133.14" y="17.88" width="1.30" height="3.33" fill="#6a84e8"/><rect x="135.25" y="16.03" width="1.30" height="5.40" fill="#6a84e8"/><rect x="136.58" y="13.11" width="1.30" height="9.49" fill="#6a84e8"/><rect x="136.92" y="13.08" width="1.30" height="9.37" fill="#5f7fe4"/><rect x="138.60" y="14.39" width="1.30" height="6.87" fill="#5f7fe4"/><rect x="140.30" y="16.65" width="1.30" height="5.79" fill="#6a84e8"/><rect x="141.67" y="15.64" width="1.30" height="5.69" fill="#5f7fe4"/><rect x="144.10" y="14.59" width="1.30" height="7.04" fill="#5f7fe4"/><rect x="145.51" y="18.29" width="1.30" height="4.23" fill="#6a84e8"/><rect x="148.79" y="13.70" width="1.30" height="9.59" fill="#5f7fe4"/><rect x="152.69" y="12.81" width="1.30" height="8.66" fill="#5f7fe4"/><rect x="153.95" y="18.04" width="1.30" height="4.51" fill="#6a84e8"/><rect x="156.05" y="16.08" width="1.30" height="6.92" fill="#5f7fe4"/><rect x="156.52" y="16.10" width="1.30" height="7.09" fill="#6a84e8"/><rect x="158.80" y="16.78" width="1.30" height="4.52" fill="#5f7fe4"/><rect x="159.86" y="14.31" width="1.30" height="7.08" fill="#5f7fe4"/><rect x="160.91" y="14.35" width="1.30" height="7.38" fill="#6a84e8"/><rect x="162.30" y="15.06" width="1.30" height="5.95" fill="#6a84e8"/><rect x="163.15" y="12.43" width="1.30" height="10.15" fill="#6a84e8"/><rect x="165.09" y="14.82" width="1.30" height="7.02" fill="#5f7fe4"/><rect x="166.89" y="18.18" width="1.30" height="3.16" fill="#6a84e8"/><rect x="167.70" y="15.39" width="1.30" height="5.82" fill="#5f7fe4"/><rect x="171.20" y="12.16" width="1.30" height="10.70" fill="#6a84e8"/><rect x="171.63" y="14.02" width="1.30" height="9.17" fill="#6a84e8"/><rect x="173.94" y="18.16" width="1.30" height="3.25" fill="#6a84e8"/><rect x="180.86" y="11.88" width="1.30" height="11.32" fill="#5f7fe4"/><rect x="181.46" y="16.56" width="1.30" height="6.46" fill="#5f7fe4"/><rect x="184.08" y="18.88" width="1.30" height="1.92" fill="#6a84e8"/><rect x="185.96" y="16.14" width="1.30" height="6.41" fill="#5f7fe4"/><rect x="190.71" y="13.02" width="1.30" height="7.74" fill="#5f7fe4"/><rect x="191.62" y="16.80" width="1.30" height="5.32" fill="#5f7fe4"/><rect x="192.28" y="16.47" width="1.30" height="4.70" fill="#6a84e8"/><rect x="193.80" y="17.19" width="1.30" height="4.48" fill="#5f7fe4"/><rect x="197.55" y="15.77" width="1.30" height="7.23" fill="#6a84e8"/><rect x="197.76" y="15.62" width="1.30" height="7.51" fill="#5f7fe4"/><rect x="201.85" y="18.81" width="1.30" height="4.00" fill="#6a84e8"/><rect x="203.31" y="11.83" width="1.30" height="11.12" fill="#6a84e8"/><rect x="205.38" y="11.95" width="1.30" height="9.90" fill="#6a84e8"/><rect x="207.26" y="16.06" width="1.30" height="5.30" fill="#6a84e8"/><rect x="208.87" y="14.41" width="1.30" height="7.47" fill="#5f7fe4"/><rect x="211.63" y="12.54" width="1.30" height="8.68" fill="#6a84e8"/><rect x="214.97" y="16.45" width="1.30" height="6.20" fill="#5f7fe4"/><rect x="219.04" y="15.85" width="1.30" height="6.90" fill="#6a84e8"/><rect x="220.03" y="14.30" width="1.30" height="7.08" fill="#6a84e8"/><rect x="221.58" y="18.66" width="1.30" height="3.70" fill="#5f7fe4"/><rect x="222.89" y="12.88" width="1.30" height="7.98" fill="#6a84e8"/><rect x="224.10" y="12.21" width="1.30" height="8.71" fill="#5f7fe4"/><rect x="227.93" y="17.97" width="1.30" height="3.73" fill="#6a84e8"/><rect x="228.63" y="15.14" width="1.30" height="5.68" fill="#5f7fe4"/><rect x="230.39" y="16.01" width="1.30" height="6.65" fill="#6a84e8"/><rect x="231.38" y="12.57" width="1.30" height="8.28" fill="#5f7fe4"/><rect x="233.32" y="13.59" width="1.30" height="9.54" fill="#6a84e8"/><rect x="234.48" y="18.81" width="1.30" height="4.10" fill="#5f7fe4"/><rect x="235.22" y="13.14" width="1.30" height="10.20" fill="#5f7fe4"/><rect x="237.17" y="16.40" width="1.30" height="7.03" fill="#6a84e8"/><rect x="238.93" y="18.02" width="1.30" height="2.98" fill="#6a84e8"/><rect x="6.50" y="183.18" width="235.60" height="9.12" fill="#2e88e3"/><rect x="6.50" y="15.28" width="3.50" height="177.03" fill="#3c86e2"/><rect x="2.80" y="192.30" width="239.70" height="3.00" fill="#053c32"/></svg>
<svg style="position:absolute;left:290px;top:470px;" width="170" height="210" viewBox="0 0 170 210"><path d="M5.50 199.50 L5.50 66.79 L9.37 66.79 L9.37 51.45 L13.25 51.45 L13.25 53.05 L17.12 53.05 L17.12 57.60 L20.99 57.60 L20.99 65.30 L24.86 65.30 L24.86 48.44 L28.74 48.44 L28.74 47.99 L32.61 47.99 L32.61 56.63 L36.48 56.63 L36.48 56.85 L40.35 56.85 L40.35 64.71 L44.23 64.71 L44.23 71.52 L48.10 71.52 L48.10 60.76 L51.97 60.76 L51.97 54.50 L55.84 54.50 L55.84 69.59 L59.71 69.59 L59.71 48.41 L63.59 48.41 L63.59 64.82 L67.46 64.82 L67.46 64.81 L71.33 64.81 L71.33 70.37 L75.20 70.37 L75.20 42.45 L79.08 42.45 L79.08 50.02 L82.95 50.02 L82.95 46.03 L86.82 46.03 L86.82 53.61 L90.69 53.61 L90.69 70.61 L94.57 70.61 L94.57 61.99 L98.44 61.99 L98.44 57.07 L102.31 57.07 L102.31 68.22 L106.19 68.22 L106.19 43.78 L110.06 43.78 L110.06 60.84 L113.93 60.84 L113.93 67.08 L117.80 67.08 L117.80 47.71 L121.68 47.71 L121.67 67.96 L125.55 67.96 L125.55 44.48 L129.42 44.48 L129.42 58.36 L133.29 58.36 L133.29 55.47 L137.17 55.47 L137.16 61.59 L141.04 61.59 L141.04 57.44 L144.91 57.44 L144.91 66.15 L148.78 66.15 L148.78 70.52 L152.66 70.52 L152.65 46.30 L156.53 46.30 L156.53 64.74 L160.40 64.74 L160.40 199.50Z" fill="#2b2140"/><path d="M5.50 199.50 L5.50 46.72 L7.32 46.72 L7.32 64.52 L9.14 64.52 L9.14 69.32 L10.97 69.32 L10.97 57.51 L12.79 57.51 L12.79 47.72 L14.61 47.72 L14.61 64.76 L16.43 64.76 L16.43 83.84 L18.26 83.84 L18.26 83.09 L20.08 83.09 L20.08 65.91 L21.90 65.91 L21.90 70.95 L23.72 70.95 L23.72 79.06 L25.55 79.06 L25.55 77.08 L27.37 77.08 L27.37 89.07 L29.19 89.07 L29.19 76.85 L31.01 76.85 L31.01 60.32 L32.84 60.32 L32.84 63.31 L34.66 63.31 L34.66 75.36 L36.48 75.36 L36.48 50.12 L38.30 50.12 L38.30 68.80 L40.12 68.80 L40.12 72.22 L41.95 72.22 L41.95 64.35 L43.77 64.35 L43.77 82.32 L45.59 82.32 L45.59 62.06 L47.41 62.06 L47.41 64.92 L49.24 64.92 L49.24 48.75 L51.06 48.75 L51.06 50.30 L52.88 50.30 L52.88 68.91 L54.70 68.91 L54.70 62.30 L56.53 62.30 L56.53 86.60 L58.35 86.60 L58.35 60.54 L60.17 60.54 L60.17 64.33 L61.99 64.33 L61.99 69.93 L63.82 69.93 L63.82 87.97 L65.64 87.97 L65.64 77.98 L67.46 77.98 L67.46 49.58 L69.28 49.58 L69.28 68.13 L71.10 68.13 L71.10 75.21 L72.93 75.21 L72.93 75.95 L74.75 75.95 L74.75 85.93 L76.57 85.93 L76.57 87.10 L78.39 87.10 L78.39 96.81 L80.22 96.81 L80.22 54.94 L82.04 54.94 L82.04 73.66 L83.86 73.66 L83.86 59.06 L85.68 59.06 L85.68 62.16 L87.51 62.16 L87.51 65.90 L89.33 65.90 L89.33 96.26 L91.15 96.26 L91.15 92.04 L92.97 92.04 L92.97 56.15 L94.80 56.15 L94.80 85.34 L96.62 85.34 L96.62 63.92 L98.44 63.92 L98.44 83.38 L100.26 83.38 L100.26 52.37 L102.08 52.37 L102.08 65.26 L103.91 65.26 L103.91 57.79 L105.73 57.79 L105.73 94.87 L107.55 94.87 L107.55 90.78 L109.37 90.78 L109.37 87.95 L111.20 87.95 L111.20 59.43 L113.02 59.43 L113.02 85.88 L114.84 85.88 L114.84 86.41 L116.66 86.41 L116.66 77.12 L118.49 77.12 L118.49 93.59 L120.31 93.59 L120.31 78.62 L122.13 78.62 L122.13 61.85 L123.95 61.85 L123.95 71.63 L125.78 71.63 L125.78 50.09 L127.60 50.09 L127.60 61.49 L129.42 61.49 L129.42 85.56 L131.24 85.56 L131.24 66.35 L133.06 66.35 L133.06 67.43 L134.89 67.43 L134.89 80.82 L136.71 80.82 L136.71 96.47 L138.53 96.47 L138.53 81.01 L140.35 81.01 L140.35 82.96 L142.18 82.96 L142.18 58.44 L144.00 58.44 L144.00 88.16 L145.82 88.16 L145.82 67.32 L147.64 67.32 L147.64 59.51 L149.47 59.51 L149.47 79.40 L151.29 79.40 L151.29 57.44 L153.11 57.44 L153.11 79.21 L154.93 79.21 L154.93 64.65 L156.76 64.65 L156.76 74.28 L158.58 74.28 L158.58 72.78 L160.40 72.78 L160.40 199.50Z" fill="#a77de9"/><rect x="6.10" y="45.32" width="1.20" height="48.35" fill="#a88ef0"/><rect x="7.30" y="39.10" width="1.20" height="33.57" fill="#b09cf0"/><rect x="9.45" y="36.87" width="1.20" height="43.03" fill="#b09cf0"/><rect x="11.30" y="62.00" width="1.20" height="11.27" fill="#b8a4f2"/><rect x="15.79" y="56.27" width="1.20" height="24.74" fill="#a88ef0"/><rect x="17.14" y="63.83" width="1.20" height="9.21" fill="#a88ef0"/><rect x="23.13" y="64.81" width="1.20" height="15.91" fill="#b8a4f2"/><rect x="26.67" y="56.11" width="1.20" height="26.70" fill="#a88ef0"/><rect x="27.24" y="48.00" width="1.20" height="49.95" fill="#b09cf0"/><rect x="32.45" y="74.43" width="1.20" height="11.76" fill="#b09cf0"/><rect x="33.61" y="55.55" width="1.20" height="16.33" fill="#b8a4f2"/><rect x="36.69" y="59.02" width="1.20" height="41.74" fill="#b09cf0"/><rect x="42.49" y="73.11" width="1.20" height="22.25" fill="#a88ef0"/><rect x="44.11" y="50.06" width="1.20" height="26.70" fill="#b8a4f2"/><rect x="47.31" y="49.74" width="1.20" height="48.75" fill="#b8a4f2"/><rect x="48.26" y="68.59" width="1.20" height="17.71" fill="#b8a4f2"/><rect x="49.11" y="54.61" width="1.20" height="22.85" fill="#a88ef0"/><rect x="51.80" y="62.64" width="1.20" height="19.50" fill="#b09cf0"/><rect x="53.25" y="72.30" width="1.20" height="13.58" fill="#b8a4f2"/><rect x="54.29" y="59.81" width="1.20" height="36.29" fill="#b8a4f2"/><rect x="55.43" y="46.62" width="1.20" height="49.59" fill="#b09cf0"/><rect x="57.74" y="64.28" width="1.20" height="30.74" fill="#b09cf0"/><rect x="58.94" y="71.83" width="1.20" height="4.83" fill="#b09cf0"/><rect x="59.98" y="48.66" width="1.20" height="33.68" fill="#b8a4f2"/><rect x="62.51" y="53.61" width="1.20" height="42.49" fill="#a88ef0"/><rect x="65.19" y="65.74" width="1.20" height="12.37" fill="#b8a4f2"/><rect x="69.03" y="33.97" width="1.20" height="39.49" fill="#a88ef0"/><rect x="71.56" y="48.36" width="1.20" height="34.73" fill="#a88ef0"/><rect x="72.43" y="34.45" width="1.20" height="50.72" fill="#a88ef0"/><rect x="76.61" y="41.26" width="1.20" height="37.95" fill="#a88ef0"/><rect x="78.02" y="48.98" width="1.20" height="41.57" fill="#b8a4f2"/><rect x="79.78" y="69.52" width="1.20" height="30.54" fill="#a88ef0"/><rect x="83.76" y="42.74" width="1.20" height="51.89" fill="#b8a4f2"/><rect x="87.00" y="69.88" width="1.20" height="23.95" fill="#a88ef0"/><rect x="87.99" y="53.57" width="1.20" height="41.69" fill="#b09cf0"/><rect x="89.21" y="58.69" width="1.20" height="27.84" fill="#a88ef0"/><rect x="93.49" y="40.66" width="1.20" height="50.36" fill="#a88ef0"/><rect x="94.01" y="43.22" width="1.20" height="28.58" fill="#a88ef0"/><rect x="96.23" y="41.17" width="1.20" height="34.34" fill="#a88ef0"/><rect x="99.48" y="65.30" width="1.20" height="14.08" fill="#a88ef0"/><rect x="100.70" y="35.08" width="1.20" height="61.89" fill="#a88ef0"/><rect x="101.65" y="47.71" width="1.20" height="35.64" fill="#b8a4f2"/><rect x="104.30" y="70.68" width="1.20" height="10.99" fill="#b8a4f2"/><rect x="108.89" y="38.09" width="1.20" height="36.71" fill="#b09cf0"/><rect x="109.44" y="69.57" width="1.20" height="9.30" fill="#a88ef0"/><rect x="111.60" y="46.94" width="1.20" height="38.88" fill="#b09cf0"/><rect x="113.81" y="65.71" width="1.20" height="15.07" fill="#a88ef0"/><rect x="114.02" y="74.86" width="1.20" height="1.34" fill="#a88ef0"/><rect x="116.49" y="57.13" width="1.20" height="40.11" fill="#b8a4f2"/><rect x="117.78" y="43.49" width="1.20" height="39.97" fill="#a88ef0"/><rect x="119.56" y="51.20" width="1.20" height="37.00" fill="#b09cf0"/><rect x="121.13" y="60.08" width="1.20" height="18.70" fill="#b8a4f2"/><rect x="121.71" y="49.56" width="1.20" height="38.45" fill="#b09cf0"/><rect x="124.62" y="55.32" width="1.20" height="39.06" fill="#b8a4f2"/><rect x="126.01" y="60.14" width="1.20" height="36.19" fill="#b09cf0"/><rect x="127.03" y="60.87" width="1.20" height="33.68" fill="#b09cf0"/><rect x="128.21" y="74.81" width="1.20" height="21.41" fill="#b09cf0"/><rect x="129.61" y="51.83" width="1.20" height="45.63" fill="#a88ef0"/><rect x="131.10" y="44.55" width="1.20" height="50.20" fill="#b09cf0"/><rect x="133.19" y="48.98" width="1.20" height="49.05" fill="#b09cf0"/><rect x="138.41" y="39.64" width="1.20" height="49.52" fill="#a88ef0"/><rect x="139.49" y="36.48" width="1.20" height="52.15" fill="#b8a4f2"/><rect x="144.57" y="67.28" width="1.20" height="6.49" fill="#b09cf0"/><rect x="145.36" y="54.58" width="1.20" height="38.61" fill="#b09cf0"/><rect x="146.54" y="53.74" width="1.20" height="39.39" fill="#a88ef0"/><rect x="149.18" y="71.30" width="1.20" height="20.05" fill="#b09cf0"/><rect x="150.61" y="61.74" width="1.20" height="35.82" fill="#b8a4f2"/><rect x="153.73" y="42.56" width="1.20" height="34.09" fill="#b8a4f2"/><rect x="155.33" y="54.50" width="1.20" height="30.08" fill="#a88ef0"/><rect x="156.04" y="47.81" width="1.20" height="35.25" fill="#a88ef0"/><rect x="159.11" y="66.48" width="1.20" height="33.43" fill="#b09cf0"/><rect x="5.50" y="56.99" width="1.60" height="142.51" fill="#b09cf0"/></svg>
<svg style="position:absolute;left:630px;top:480px;" width="250" height="200" viewBox="0 0 250 200"><rect x="9.70" y="48.00" width="231.00" height="32.00" fill="#0b3a36"/><rect x="33.47" y="80.00" width="9.87" height="16.00" fill="#0b3a36"/><rect x="43.34" y="80.00" width="29.98" height="16.00" fill="#0b3a36"/><rect x="73.32" y="80.00" width="22.12" height="16.00" fill="#0b3a36"/><rect x="95.44" y="80.00" width="17.97" height="16.00" fill="#0b3a36"/><rect x="125.64" y="80.00" width="9.97" height="16.00" fill="#0b3a36"/><rect x="135.61" y="80.00" width="8.44" height="16.00" fill="#0b3a36"/><rect x="161.02" y="80.00" width="16.34" height="16.00" fill="#0b3a36"/><rect x="191.04" y="80.00" width="9.39" height="16.00" fill="#0b3a36"/><rect x="200.43" y="80.00" width="16.30" height="16.00" fill="#0b3a36"/><rect x="216.73" y="80.00" width="15.45" height="16.00" fill="#0b3a36"/><rect x="232.18" y="80.00" width="8.52" height="16.00" fill="#0b3a36"/><rect x="2.00" y="63.00" width="8.00" height="18.00" fill="#0b3a36"/><line x1="7" y1="23" x2="238" y2="23" stroke="#aeb7c8" stroke-width="1.6"/><line x1="5.7000000000000455" y1="189.5" x2="239.20000000000005" y2="189.5" stroke="#363c50" stroke-width="3"/><path d="M7.5 91.4 L10.3 54.6 L11.8 92.6 L14.3 55.8 L18.1 83.1 L21.3 73.0 L23.3 77.3 L26.9 54.4 L30.2 70.5 L33.3 68.6 L37.1 89.9 L39.7 55.9 L41.4 81.7 L44.0 52.8 L47.7 81.2 L50.8 56.5 L52.7 68.3 L54.9 57.7 L57.3 77.8 L60.8 73.3 L62.5 78.3 L64.3 67.6 L68.1 73.2 L71.4 58.5 L72.7 87.9 L74.9 55.3 L77.3 74.0 L79.7 62.2 L82.1 83.3 L84.2 53.4 L85.7 70.8 L88.3 60.0 L91.7 81.1 L94.9 75.5 L96.3 68.4 L98.0 60.7 L100.8 87.3 L103.0 75.1 L104.3 89.7 L106.2 72.9 L107.5 93.1 L110.8 75.8 L113.6 72.6 L117.4 62.0 L119.0 83.7 L121.6 62.8 L123.3 71.2 L126.1 62.3 L127.7 79.4 L130.9 68.9 L133.4 78.2 L135.6 56.6 L137.5 79.6 L139.0 69.1 L142.2 83.9 L143.5 60.1 L146.0 70.4 L149.8 69.9 L152.4 86.3 L154.2 56.7 L156.9 87.3 L159.9 51.2 L162.8 91.6 L166.0 74.2 L169.8 73.8 L171.9 64.7 L175.7 77.6 L179.5 72.3 L182.1 84.3 L185.9 70.6 L188.0 90.0 L189.8 60.2 L193.6 90.0 L195.7 58.3 L198.6 89.9 L201.7 74.4 L204.9 89.3 L207.7 60.1 L210.2 80.7 L212.8 72.0 L214.8 69.8 L218.0 57.8 L220.4 71.0 L223.9 57.8 L225.9 88.9 L228.6 57.9 L232.2 78.7 L234.4 75.1 L237.8 87.4" fill="none" stroke="#5a7ee6" stroke-width="1.5" stroke-linejoin="round"/><path d="M7.5 89.1 L9.7 71.7 L11.4 88.3 L14.0 60.7 L16.3 88.3 L19.3 74.0 L21.9 71.6 L24.1 68.1 L25.3 80.0 L28.0 73.6 L30.9 70.4 L33.1 72.6 L35.4 76.3 L36.5 74.0 L39.2 85.0 L40.9 71.7 L43.5 86.8 L45.7 59.0 L47.3 77.3 L49.0 64.0 L50.2 86.8 L51.9 55.0 L53.4 78.1 L55.3 70.6 L56.5 73.8 L58.1 55.4 L60.6 70.8 L61.7 64.9 L64.1 89.5 L66.3 59.2 L69.0 87.1 L71.0 65.1 L73.9 93.9 L76.7 54.3 L78.4 78.6 L79.7 70.1 L80.8 91.1 L83.0 66.3 L84.8 92.3 L87.0 73.4 L89.8 86.0 L92.8 63.2 L94.5 89.9 L96.6 58.7 L99.0 80.4 L100.2 71.9 L102.2 93.3 L104.3 74.4 L105.9 73.7 L107.9 70.2 L110.6 84.8 L111.8 60.9 L112.9 77.7 L115.8 59.7 L118.2 84.2 L119.4 68.2 L120.6 72.8 L122.8 54.2 L125.7 79.1 L128.0 75.1 L129.2 94.0 L130.3 66.0 L132.6 93.6 L134.3 74.7 L136.6 80.4 L137.9 56.9 L139.7 77.0 L141.4 71.2 L143.1 84.3 L144.2 54.5 L146.6 91.2 L148.3 51.8 L149.7 77.4 L151.5 65.0 L153.1 84.8 L155.6 70.6 L158.1 83.2 L159.6 72.0 L161.2 90.4 L163.1 66.7 L165.1 85.0 L166.8 65.5 L169.3 77.4 L171.5 62.4 L173.4 78.0 L175.5 68.7 L176.9 71.8 L179.5 53.2 L182.1 87.7 L183.5 66.9 L185.0 90.9 L186.4 53.9 L187.5 86.7 L188.9 58.9 L191.9 87.1 L194.4 65.4 L196.6 68.3 L199.3 59.2 L202.0 78.8 L204.8 51.0 L207.7 70.5 L209.8 63.0 L212.7 86.6 L215.7 73.6 L217.6 71.8 L218.8 68.7 L221.8 85.3 L223.4 65.9 L225.8 74.6 L228.1 56.0 L229.2 69.7 L231.2 68.4 L232.6 78.3 L235.0 57.6 L237.1 83.7" fill="none" stroke="#2f9be9" stroke-width="1.6" stroke-linejoin="round"/></svg>
<svg style="position:absolute;left:950px;top:480px;" width="260" height="200" viewBox="0 0 260 200"><rect x="8.50" y="15.00" width="234.00" height="136.00" fill="#0b3a35"/><line x1="7" y1="167" x2="243" y2="167" stroke="#363c50" stroke-width="3"/><path d="M9.5 54.3 L12.3 108.3 L15.6 59.0 L17.3 135.5 L19.1 23.8 L20.6 116.0 L22.3 52.0 L24.5 100.5 L27.2 70.0 L29.1 135.5 L32.4 19.0 L35.5 101.0 L38.5 10.0 L41.6 129.9 L44.8 39.7 L47.8 114.4 L50.1 47.5 L52.3 127.1 L53.8 18.4 L56.9 93.0 L59.7 35.4 L62.7 136.1 L65.6 42.5 L67.2 132.7 L69.6 54.6 L72.0 112.3 L74.1 62.5 L76.5 131.0 L78.2 58.4 L80.3 139.3 L83.1 9.8 L85.2 106.5 L88.7 68.1 L90.2 102.1 L93.4 29.9 L95.0 122.0 L98.3 14.1 L101.4 132.7 L104.7 46.9 L107.6 136.0 L111.1 32.2 L114.0 132.2 L116.7 33.7 L119.3 124.7 L122.3 49.0 L124.2 134.6 L127.0 63.7 L128.8 139.5 L131.5 35.2 L134.0 141.0 L136.3 48.9 L137.7 142.8 L141.3 63.1 L143.2 129.3 L145.9 65.9 L148.2 124.4 L151.4 70.5 L153.4 117.8 L156.9 37.8 L159.3 109.0 L161.2 68.8 L163.6 96.8 L166.5 54.3 L169.4 99.9 L171.2 33.2 L173.3 130.6 L175.1 57.8 L177.2 141.0 L179.3 65.3 L182.4 112.5 L183.6 21.3 L185.2 118.6 L187.8 49.5 L189.7 120.9 L191.2 15.5 L192.7 101.2 L194.4 51.4 L196.5 141.3 L198.0 47.7 L200.3 98.5 L203.9 68.1 L206.3 136.4 L209.5 50.2 L212.8 115.3 L214.3 70.6 L216.1 98.9 L217.7 40.2 L219.8 125.5 L222.9 57.2 L225.8 109.2 L229.3 37.6 L232.7 120.6 L235.2 31.1 L238.5 97.4 L239.9 62.1" fill="none" stroke="#4a84ec" stroke-width="1.8" stroke-linejoin="round"/><path d="M9.5 29.5 L11.6 119.0 L14.5 62.5 L15.7 132.2 L16.7 35.0 L17.9 96.7 L20.7 17.5 L23.3 112.3 L25.5 28.2 L28.0 119.5 L30.5 74.5 L32.1 81.8 L34.1 64.4 L36.6 110.9 L37.6 79.7 L39.1 117.2 L42.0 65.7 L44.7 89.4 L46.6 17.9 L49.1 109.1 L50.6 52.0 L53.4 106.3 L54.8 57.5 L56.7 124.8 L58.9 79.4 L61.5 125.4 L62.7 43.8 L64.4 87.7 L66.3 48.1 L69.0 123.5 L71.5 40.0 L73.4 83.7 L74.4 26.3 L75.7 90.1 L77.0 78.1 L79.0 85.5 L80.5 50.4 L82.7 121.9 L84.8 80.9 L86.7 94.4 L88.4 67.4 L89.5 97.5 L91.3 23.0 L93.8 129.6 L96.6 21.8 L99.3 90.6 L101.6 35.4 L104.0 103.4 L105.5 73.0 L107.9 103.1 L109.0 40.4 L111.3 107.6 L113.8 25.4 L115.6 91.5 L117.6 44.9 L119.4 85.1 L121.3 20.5 L123.0 99.1 L125.8 37.8 L127.5 130.8 L129.5 55.0 L132.1 93.1 L135.1 52.9 L136.9 104.8 L139.4 76.4 L140.9 127.2 L142.5 62.3 L145.4 123.9 L148.3 62.7 L149.7 82.9 L150.9 74.3 L152.2 131.4 L153.9 68.0 L155.2 134.1 L157.6 78.4 L159.1 104.8 L161.9 39.3 L164.3 97.6 L166.9 26.9 L168.2 132.1 L170.4 48.3 L172.5 93.2 L173.8 36.3 L175.7 112.4 L177.2 63.5 L179.3 105.4 L182.1 63.6 L184.6 129.8 L186.9 71.3 L189.6 83.4 L191.1 29.8 L192.5 118.7 L193.7 53.3 L195.0 97.3 L197.1 54.6 L199.5 122.5 L201.2 58.3 L202.2 87.6 L203.4 75.1 L206.0 91.3 L207.9 54.6 L209.1 134.9 L211.2 65.9 L212.5 86.6 L213.5 58.3 L216.0 95.1 L217.2 34.0 L219.4 101.3 L222.2 30.4 L224.4 93.8 L226.4 46.2 L229.1 101.9 L230.8 80.3 L233.4 116.8 L235.3 63.1 L237.4 113.5 L240.0 43.5" fill="none" stroke="#22a8ee" stroke-width="2.0" stroke-linejoin="round"/><path d="M9.5 70.6 L11.2 132.6 L13.4 73.5 L15.7 122.1 L17.6 81.6 L18.8 141.2 L20.5 84.3 L23.0 147.1 L24.6 72.7 L26.3 123.4 L27.5 71.2 L29.1 131.6 L30.1 88.9 L32.5 126.7 L34.4 87.9 L35.4 127.8 L37.1 73.5 L39.1 136.5 L41.6 101.9 L44.2 145.8 L46.8 80.1 L48.5 120.8 L50.4 83.8 L51.4 124.9 L53.4 96.7 L54.5 136.0 L57.1 66.4 L58.8 147.3 L61.2 98.5 L63.4 133.6 L66.1 101.2 L68.4 127.2 L69.3 81.1 L70.8 127.9 L73.4 76.2 L75.2 130.6 L76.5 85.8 L77.7 127.1 L78.7 82.9 L79.9 131.8 L80.9 106.9 L82.9 127.2 L85.4 75.7 L88.1 144.1 L90.1 77.7 L91.4 144.2 L92.7 83.1 L95.0 127.4 L96.9 104.5 L99.1 133.3 L100.3 78.5 L101.7 139.2 L103.4 72.2 L104.5 135.3 L105.8 76.0 L108.2 140.6 L110.4 86.0 L111.7 140.2 L113.5 69.5 L115.5 148.3 L117.8 80.4 L119.5 141.2 L121.2 75.0 L122.6 144.2 L125.0 87.0 L126.1 122.1 L127.2 90.7 L129.2 128.8 L131.7 99.8 L133.6 122.5 L135.4 73.9 L137.1 127.3 L139.7 91.9 L142.0 138.2 L144.5 71.5 L146.9 122.6 L148.9 62.6 L150.1 131.5 L151.1 80.2 L153.2 139.9 L155.6 88.2 L156.8 142.6 L158.8 89.8 L159.8 139.3 L162.4 85.6 L164.6 135.8 L165.6 78.8 L166.9 144.7 L168.9 75.8 L169.8 120.5 L170.7 100.3 L172.2 124.9 L174.5 72.5 L176.1 121.5 L177.3 62.1 L178.3 143.8 L180.5 71.3 L182.6 141.0 L185.1 83.5 L186.4 145.5 L189.0 105.6 L190.3 137.8 L192.8 68.3 L195.3 129.8 L196.2 72.8 L197.4 120.5 L200.1 105.1 L202.3 141.2 L203.4 66.2 L205.1 139.7 L207.0 105.2 L208.6 129.2 L211.1 102.4 L213.6 145.2 L214.9 92.2 L216.1 145.6 L218.2 89.1 L219.4 133.2 L220.5 75.5 L223.2 134.6 L224.8 89.1 L226.4 136.2 L227.6 94.0 L229.7 134.2 L230.8 101.3 L233.2 137.9 L235.6 78.6 L237.6 137.9 L239.5 88.3 L241.4 120.6" fill="none" stroke="#24ae7c" stroke-width="2.0" stroke-linejoin="round"/><path d="M9.5 111.7 L13.1 111.2 L16.6 73.7 L18.1 119.5 L19.8 74.5 L22.1 128.7 L24.7 112.2 L27.5 113.8 L30.0 98.5 L32.2 140.7 L34.3 75.1 L38.1 133.3 L40.1 104.5 L43.7 137.8 L45.4 105.8 L47.0 142.4 L48.9 86.0 L52.6 137.9 L54.7 89.8 L56.0 144.7 L58.8 97.0 L61.0 131.7 L62.4 109.0 L64.1 138.7 L65.6 76.4 L67.0 131.7 L68.7 112.3 L72.0 109.8 L75.8 104.8 L78.5 131.0 L80.0 99.4 L82.9 132.3 L86.2 98.1 L88.3 112.5 L91.1 109.3 L94.7 129.1 L97.6 96.8 L101.1 119.0 L103.6 102.8 L106.9 114.8 L109.8 73.0 L112.4 131.7 L114.6 108.5 L116.3 111.3 L119.0 119.4 L120.8 131.3 L124.2 74.0 L127.5 136.6 L129.9 68.6 L132.2 122.3 L133.7 96.1 L136.3 111.9 L140.1 80.1 L142.2 113.4 L145.9 119.8 L148.3 126.2 L150.4 110.1 L153.8 139.9 L156.5 123.1 L159.0 109.7 L160.3 118.0 L164.0 111.7 L166.6 107.0 L168.6 118.9 L171.5 98.1 L174.5 144.3 L176.9 72.7 L180.5 128.9 L183.9 72.3 L186.5 142.6 L188.1 84.9 L190.3 127.2 L191.7 68.6 L193.7 122.9 L196.6 103.4 L198.5 125.8 L200.6 119.8 L202.4 146.7 L206.0 112.4 L209.7 123.5 L213.5 96.7 L215.5 144.9 L218.4 83.4 L221.4 111.9 L223.0 86.4 L226.1 110.6 L228.1 69.6 L229.4 124.7 L231.6 93.8 L233.3 132.9 L235.6 97.1 L237.9 139.6 L239.6 96.8" fill="none" stroke="#2fb385" stroke-width="1.6" stroke-linejoin="round"/></svg>
<svg style="position:absolute;left:300px;top:780px;" width="260" height="200" viewBox="0 0 260 200"><rect x="8.00" y="4.60" width="236.00" height="8.00" fill="#3a1e44"/><rect x="8.00" y="12.50" width="236.00" height="177.10" fill="#86522f"/><rect x="8.00" y="12.50" width="236.00" height="6.50" fill="#766a2d"/><path d="M8.00 189.60 L8.00 136.47 L10.62 136.47 L10.62 136.47 L13.24 136.47 L13.24 136.47 L15.87 136.47 L15.87 185.68 L18.49 185.68 L18.49 136.47 L21.11 136.47 L21.11 143.36 L23.73 143.36 L23.73 143.36 L26.36 143.36 L26.36 174.54 L28.98 174.54 L28.98 143.36 L31.60 143.36 L31.60 143.36 L34.22 143.36 L34.22 143.36 L36.84 143.36 L36.84 143.36 L39.47 143.36 L39.47 143.36 L42.09 143.36 L42.09 133.65 L44.71 133.65 L44.71 112.62 L47.33 112.62 L47.33 159.83 L49.96 159.83 L49.96 159.83 L52.58 159.83 L52.58 159.83 L55.20 159.83 L55.20 159.83 L57.82 159.83 L57.82 159.83 L60.44 159.83 L60.44 159.83 L63.07 159.83 L63.07 151.09 L65.69 151.09 L65.69 151.09 L68.31 151.09 L68.31 106.22 L70.93 106.22 L70.93 106.22 L73.56 106.22 L73.56 106.22 L76.18 106.22 L76.18 141.46 L78.80 141.46 L78.80 117.85 L81.42 117.85 L81.42 178.06 L84.04 178.06 L84.04 106.63 L86.67 106.63 L86.67 106.63 L89.29 106.63 L89.29 106.63 L91.91 106.63 L91.91 183.05 L94.53 183.05 L94.53 153.69 L97.16 153.69 L97.16 153.69 L99.78 153.69 L99.78 172.94 L102.40 172.94 L102.40 111.03 L105.02 111.03 L105.02 184.85 L107.64 184.85 L107.64 111.03 L110.27 111.03 L110.27 111.03 L112.89 111.03 L112.89 118.10 L115.51 118.10 L115.51 118.10 L118.13 118.10 L118.13 118.10 L120.76 118.10 L120.76 118.10 L123.38 118.10 L123.38 118.10 L126.00 118.10 L126.00 118.10 L128.62 118.10 L128.62 175.51 L131.24 175.51 L131.24 118.10 L133.87 118.10 L133.87 118.10 L136.49 118.10 L136.49 118.10 L139.11 118.10 L139.11 118.10 L141.73 118.10 L141.73 118.10 L144.36 118.10 L144.36 118.10 L146.98 118.10 L146.98 118.10 L149.60 118.10 L149.60 118.10 L152.22 118.10 L152.22 119.40 L154.84 119.40 L154.84 119.40 L157.47 119.40 L157.47 119.40 L160.09 119.40 L160.09 182.33 L162.71 182.33 L162.71 119.40 L165.33 119.40 L165.33 119.40 L167.96 119.40 L167.96 130.95 L170.58 130.95 L170.58 106.87 L173.20 106.87 L173.20 173.18 L175.82 173.18 L175.82 178.46 L178.44 178.46 L178.44 106.87 L181.07 106.87 L181.07 106.87 L183.69 106.87 L183.69 106.87 L186.31 106.87 L186.31 151.38 L188.93 151.38 L188.93 129.33 L191.56 129.33 L191.56 129.33 L194.18 129.33 L194.18 142.01 L196.80 142.01 L196.80 175.70 L199.42 175.70 L199.42 142.32 L202.04 142.32 L202.04 145.47 L204.67 145.47 L204.67 143.79 L207.29 143.79 L207.29 143.79 L209.91 143.79 L209.91 143.79 L212.53 143.79 L212.53 136.02 L215.16 136.02 L215.16 136.02 L217.78 136.02 L217.78 136.02 L220.40 136.02 L220.40 136.02 L223.02 136.02 L223.02 136.02 L225.64 136.02 L225.64 136.02 L228.27 136.02 L228.27 136.02 L230.89 136.02 L230.89 136.02 L233.51 136.02 L233.51 136.02 L236.13 136.02 L236.13 136.02 L238.76 136.02 L238.76 136.02 L241.38 136.02 L241.38 136.02 L244.00 136.02 L244.00 189.60Z" fill="#33609f"/><rect x="9.25" y="79.30" width="1.20" height="87.91" fill="#c8862c"/><rect x="10.45" y="94.38" width="1.20" height="80.23" fill="#b9962c"/><rect x="12.57" y="75.30" width="1.20" height="85.00" fill="#a8a02a"/><rect x="16.72" y="74.30" width="1.20" height="45.28" fill="#c07a2c"/><rect x="24.15" y="23.11" width="1.20" height="139.39" fill="#b8782e"/><rect x="31.54" y="77.60" width="1.20" height="97.57" fill="#b9962c"/><rect x="32.29" y="24.57" width="1.20" height="155.33" fill="#c8862c"/><rect x="34.45" y="66.00" width="1.20" height="71.53" fill="#d0922e"/><rect x="38.95" y="65.05" width="1.20" height="102.29" fill="#c3842a"/><rect x="39.61" y="84.05" width="1.20" height="42.55" fill="#b9962c"/><rect x="43.28" y="70.24" width="1.20" height="75.04" fill="#c07a2c"/><rect x="43.86" y="62.72" width="1.20" height="72.24" fill="#c07a2c"/><rect x="46.32" y="66.88" width="1.20" height="65.31" fill="#b9962c"/><rect x="50.99" y="80.30" width="1.20" height="33.07" fill="#b8782e"/><rect x="51.46" y="59.99" width="1.20" height="91.96" fill="#a8a02a"/><rect x="55.70" y="78.09" width="1.20" height="93.52" fill="#c07a2c"/><rect x="58.93" y="90.25" width="1.20" height="59.24" fill="#cf8e2e"/><rect x="62.69" y="54.94" width="1.20" height="79.95" fill="#d0922e"/><rect x="64.12" y="44.84" width="1.20" height="85.66" fill="#d0922e"/><rect x="68.87" y="77.21" width="1.20" height="59.89" fill="#a8a02a"/><rect x="72.51" y="68.77" width="1.20" height="78.06" fill="#c3842a"/><rect x="75.55" y="81.98" width="1.20" height="56.19" fill="#cf8e2e"/><rect x="82.61" y="52.62" width="1.20" height="122.52" fill="#b9962c"/><rect x="82.83" y="61.05" width="1.20" height="73.70" fill="#a8a02a"/><rect x="86.94" y="14.61" width="1.20" height="158.61" fill="#cf8e2e"/><rect x="89.72" y="32.51" width="1.20" height="126.94" fill="#c3842a"/><rect x="92.32" y="67.74" width="1.20" height="68.06" fill="#cf8e2e"/><rect x="94.28" y="72.99" width="1.20" height="75.23" fill="#c8862c"/><rect x="95.96" y="44.95" width="1.20" height="114.76" fill="#cf8e2e"/><rect x="97.83" y="43.25" width="1.20" height="83.52" fill="#cf8e2e"/><rect x="100.19" y="27.05" width="1.20" height="94.05" fill="#b8782e"/><rect x="102.01" y="32.12" width="1.20" height="140.98" fill="#b9962c"/><rect x="103.53" y="65.46" width="1.20" height="58.76" fill="#d0922e"/><rect x="106.07" y="37.31" width="1.20" height="100.77" fill="#b8782e"/><rect x="109.52" y="60.19" width="1.20" height="64.57" fill="#b8782e"/><rect x="115.41" y="62.88" width="1.20" height="91.99" fill="#b9962c"/><rect x="117.91" y="90.47" width="1.20" height="89.86" fill="#c8862c"/><rect x="120.15" y="63.87" width="1.20" height="66.85" fill="#c8862c"/><rect x="123.66" y="35.40" width="1.20" height="95.72" fill="#c3842a"/><rect x="125.21" y="86.06" width="1.20" height="38.98" fill="#c3842a"/><rect x="129.73" y="20.94" width="1.20" height="151.97" fill="#c8862c"/><rect x="131.68" y="87.77" width="1.20" height="61.46" fill="#c8862c"/><rect x="132.45" y="68.47" width="1.20" height="62.74" fill="#cf8e2e"/><rect x="134.51" y="39.20" width="1.20" height="98.58" fill="#a8a02a"/><rect x="137.23" y="17.56" width="1.20" height="113.61" fill="#d0922e"/><rect x="140.38" y="86.12" width="1.20" height="77.06" fill="#b8782e"/><rect x="142.25" y="38.28" width="1.20" height="124.21" fill="#a8a02a"/><rect x="145.58" y="61.74" width="1.20" height="55.40" fill="#c07a2c"/><rect x="146.04" y="91.98" width="1.20" height="63.43" fill="#c8862c"/><rect x="150.56" y="57.12" width="1.20" height="112.08" fill="#c8862c"/><rect x="154.19" y="30.25" width="1.20" height="117.92" fill="#b9962c"/><rect x="155.55" y="50.61" width="1.20" height="70.43" fill="#c8862c"/><rect x="158.75" y="86.48" width="1.20" height="40.04" fill="#b9962c"/><rect x="161.23" y="76.21" width="1.20" height="47.31" fill="#c07a2c"/><rect x="166.61" y="80.78" width="1.20" height="67.47" fill="#d0922e"/><rect x="169.09" y="39.78" width="1.20" height="125.67" fill="#b9962c"/><rect x="171.50" y="74.13" width="1.20" height="102.19" fill="#c3842a"/><rect x="175.33" y="37.57" width="1.20" height="121.66" fill="#cf8e2e"/><rect x="178.73" y="57.65" width="1.20" height="57.94" fill="#cf8e2e"/><rect x="180.92" y="58.18" width="1.20" height="80.16" fill="#c3842a"/><rect x="185.06" y="82.16" width="1.20" height="82.55" fill="#b9962c"/><rect x="187.78" y="53.07" width="1.20" height="69.30" fill="#cf8e2e"/><rect x="189.61" y="77.29" width="1.20" height="82.75" fill="#c07a2c"/><rect x="191.03" y="73.17" width="1.20" height="52.30" fill="#d0922e"/><rect x="194.44" y="59.88" width="1.20" height="56.65" fill="#b9962c"/><rect x="194.85" y="34.23" width="1.20" height="117.70" fill="#c3842a"/><rect x="198.58" y="96.09" width="1.20" height="64.53" fill="#c3842a"/><rect x="199.25" y="40.05" width="1.20" height="91.49" fill="#c8862c"/><rect x="202.01" y="35.78" width="1.20" height="86.71" fill="#b9962c"/><rect x="204.18" y="26.23" width="1.20" height="111.03" fill="#b8782e"/><rect x="207.75" y="24.59" width="1.20" height="136.80" fill="#d0922e"/><rect x="208.62" y="95.86" width="1.20" height="66.66" fill="#c3842a"/><rect x="210.64" y="81.69" width="1.20" height="40.88" fill="#a8a02a"/><rect x="217.48" y="49.46" width="1.20" height="128.87" fill="#d0922e"/><rect x="220.59" y="82.69" width="1.20" height="97.44" fill="#b9962c"/><rect x="226.28" y="43.08" width="1.20" height="86.44" fill="#d0922e"/><rect x="228.86" y="67.83" width="1.20" height="71.80" fill="#c07a2c"/><rect x="230.45" y="21.36" width="1.20" height="127.02" fill="#d0922e"/><rect x="232.93" y="96.53" width="1.20" height="69.88" fill="#b8782e"/><rect x="237.28" y="101.04" width="1.20" height="13.80" fill="#a8a02a"/><rect x="239.07" y="86.68" width="1.20" height="48.11" fill="#c3842a"/><rect x="241.27" y="100.64" width="1.20" height="51.15" fill="#b8782e"/><rect x="8.71" y="166.44" width="1.40" height="18.82" fill="#6a3ea6"/><rect x="23.10" y="142.88" width="1.40" height="39.74" fill="#5e3a9a"/><rect x="31.28" y="129.82" width="1.40" height="57.21" fill="#6a3ea6"/><rect x="39.24" y="147.42" width="1.40" height="35.80" fill="#5e3a9a"/><rect x="48.51" y="153.47" width="1.40" height="29.44" fill="#6a3ea6"/><rect x="63.94" y="148.68" width="1.40" height="36.41" fill="#5e3a9a"/><rect x="72.76" y="152.69" width="1.40" height="34.38" fill="#5e3a9a"/><rect x="88.02" y="178.68" width="1.40" height="9.04" fill="#5e3a9a"/><rect x="91.57" y="151.48" width="1.40" height="31.31" fill="#6a3ea6"/><rect x="97.96" y="144.47" width="1.40" height="39.04" fill="#6a3ea6"/><rect x="111.25" y="173.96" width="1.40" height="12.02" fill="#5e3a9a"/><rect x="153.67" y="163.62" width="1.40" height="20.99" fill="#5e3a9a"/><rect x="159.73" y="158.36" width="1.40" height="30.87" fill="#6a3ea6"/><rect x="185.09" y="178.98" width="1.40" height="7.54" fill="#6a3ea6"/><rect x="198.49" y="148.21" width="1.40" height="40.18" fill="#6a3ea6"/><rect x="207.13" y="163.31" width="1.40" height="24.68" fill="#6a3ea6"/><rect x="228.07" y="136.64" width="1.40" height="47.73" fill="#6a3ea6"/><rect x="235.16" y="135.52" width="1.40" height="48.03" fill="#5e3a9a"/><rect x="12.39" y="113.86" width="1.00" height="73.27" fill="#7fae2e"/><rect x="28.63" y="98.30" width="1.00" height="90.11" fill="#a8a42c"/><rect x="41.31" y="73.17" width="1.00" height="110.41" fill="#a8a42c"/><rect x="46.82" y="134.60" width="1.00" height="50.43" fill="#a8a42c"/><rect x="50.34" y="137.02" width="1.00" height="45.50" fill="#a8a42c"/><rect x="52.34" y="106.20" width="1.00" height="76.81" fill="#a8a42c"/><rect x="66.43" y="66.38" width="1.00" height="121.03" fill="#9fb02a"/><rect x="89.06" y="123.83" width="1.00" height="61.38" fill="#9fb02a"/><rect x="93.41" y="118.55" width="1.00" height="66.22" fill="#9fb02a"/><rect x="98.64" y="41.71" width="1.00" height="143.17" fill="#9fb02a"/><rect x="110.59" y="110.49" width="1.00" height="74.76" fill="#7fae2e"/><rect x="113.05" y="47.54" width="1.00" height="133.31" fill="#a8a42c"/><rect x="118.27" y="61.70" width="1.00" height="123.42" fill="#9fb02a"/><rect x="124.05" y="42.10" width="1.00" height="146.76" fill="#9fb02a"/><rect x="143.70" y="77.71" width="1.00" height="105.89" fill="#a8a42c"/><rect x="177.73" y="116.82" width="1.00" height="70.90" fill="#7fae2e"/><rect x="184.83" y="100.26" width="1.00" height="85.74" fill="#7fae2e"/><rect x="192.41" y="128.65" width="1.00" height="53.23" fill="#7fae2e"/><rect x="198.16" y="38.09" width="1.00" height="149.76" fill="#7fae2e"/><rect x="202.26" y="95.30" width="1.00" height="91.21" fill="#9fb02a"/><rect x="223.22" y="82.88" width="1.00" height="102.74" fill="#a8a42c"/><rect x="226.09" y="91.50" width="1.00" height="93.71" fill="#a8a42c"/><rect x="228.88" y="120.54" width="1.00" height="63.00" fill="#a8a42c"/><rect x="234.98" y="51.49" width="1.00" height="135.58" fill="#7fae2e"/><rect x="242.43" y="54.97" width="1.00" height="132.22" fill="#7fae2e"/><rect x="8.00" y="12.50" width="2.50" height="177.10" fill="#8d9a2e"/><rect x="4.00" y="4.60" width="4.00" height="190.00" fill="#2b1f3e"/><rect x="8.00" y="189.60" width="236.00" height="3.50" fill="#10302f"/></svg>
<svg style="position:absolute;left:610px;top:780px;" width="270" height="200" viewBox="0 0 270 200"><rect x="11.00" y="19.00" width="249.00" height="175.00" fill="#113a3a"/><path d="M12.50 189.60 L12.50 81.65 L14.54 81.65 L14.54 85.65 L16.58 85.65 L16.58 75.32 L18.61 75.32 L18.61 94.53 L20.65 94.53 L20.65 93.40 L22.69 93.40 L22.69 93.50 L24.73 93.50 L24.73 94.97 L26.76 94.97 L26.76 89.64 L28.80 89.64 L28.80 101.05 L30.84 101.05 L30.84 92.21 L32.87 92.21 L32.88 86.75 L34.91 86.75 L34.91 87.71 L36.95 87.71 L36.95 84.37 L38.99 84.37 L38.99 86.64 L41.02 86.64 L41.02 85.98 L43.06 85.98 L43.06 69.53 L45.10 69.53 L45.10 64.31 L47.14 64.31 L47.14 77.19 L49.18 77.19 L49.17 69.45 L51.21 69.45 L51.21 85.57 L53.25 85.57 L53.25 85.24 L55.29 85.24 L55.29 85.58 L57.33 85.58 L57.33 76.99 L59.36 76.99 L59.36 81.94 L61.40 81.94 L61.40 83.95 L63.44 83.95 L63.44 68.63 L65.47 68.63 L65.48 78.08 L67.51 78.08 L67.51 82.08 L69.55 82.08 L69.55 79.54 L71.59 79.54 L71.59 93.67 L73.62 93.67 L73.62 89.08 L75.66 89.08 L75.66 83.74 L77.70 83.74 L77.70 80.77 L79.74 80.77 L79.74 94.93 L81.77 94.93 L81.77 79.48 L83.81 79.48 L83.81 97.56 L85.85 97.56 L85.85 83.25 L87.89 83.25 L87.89 92.04 L89.93 92.04 L89.92 99.89 L91.96 99.89 L91.96 97.10 L94.00 97.10 L94.00 98.61 L96.04 98.61 L96.04 78.84 L98.08 78.84 L98.08 92.57 L100.11 92.57 L100.11 78.14 L102.15 78.14 L102.15 88.77 L104.19 88.77 L104.19 73.72 L106.22 73.72 L106.23 76.25 L108.26 76.25 L108.26 67.39 L110.30 67.39 L110.30 80.75 L112.34 80.75 L112.34 79.85 L114.37 79.85 L114.38 88.92 L116.41 88.92 L116.41 85.10 L118.45 85.10 L118.45 89.33 L120.49 89.33 L120.49 82.96 L122.52 82.96 L122.52 77.08 L124.56 77.08 L124.56 71.93 L126.60 71.93 L126.60 75.80 L128.64 75.80 L128.64 82.01 L130.68 82.01 L130.67 82.91 L132.71 82.91 L132.71 79.45 L134.75 79.45 L134.75 90.27 L136.79 90.27 L136.79 82.31 L138.83 82.31 L138.83 82.94 L140.86 82.94 L140.86 81.18 L142.90 81.18 L142.90 83.62 L144.94 83.62 L144.94 73.99 L146.97 73.99 L146.98 84.24 L149.01 84.24 L149.01 73.95 L151.05 73.95 L151.05 86.35 L153.09 86.35 L153.09 82.69 L155.12 82.69 L155.12 78.52 L157.16 78.52 L157.16 86.21 L159.20 86.21 L159.20 73.87 L161.24 73.87 L161.24 74.35 L163.27 74.35 L163.27 83.78 L165.31 83.78 L165.31 80.70 L167.35 80.70 L167.35 75.98 L169.39 75.98 L169.39 91.74 L171.43 91.74 L171.42 77.17 L173.46 77.17 L173.46 77.60 L175.50 77.60 L175.50 82.89 L177.54 82.89 L177.54 86.95 L179.58 86.95 L179.58 82.11 L181.61 82.11 L181.61 86.62 L183.65 86.62 L183.65 82.19 L185.69 82.19 L185.69 78.64 L187.72 78.64 L187.73 86.85 L189.76 86.85 L189.76 74.04 L191.80 74.04 L191.80 86.70 L193.84 86.70 L193.84 84.88 L195.87 84.88 L195.88 89.93 L197.91 89.93 L197.91 94.29 L199.95 94.29 L199.95 87.77 L201.99 87.77 L201.99 77.19 L204.02 77.19 L204.02 85.27 L206.06 85.27 L206.06 95.81 L208.10 95.81 L208.10 95.55 L210.14 95.55 L210.14 86.54 L212.18 86.54 L212.17 87.18 L214.21 87.18 L214.21 96.85 L216.25 96.85 L216.25 95.68 L218.29 95.68 L218.29 83.85 L220.33 83.85 L220.33 83.24 L222.36 83.24 L222.36 75.21 L224.40 75.21 L224.40 66.98 L226.44 66.98 L226.44 79.89 L228.47 79.89 L228.48 79.10 L230.51 79.10 L230.51 73.82 L232.55 73.82 L232.55 87.74 L234.59 87.74 L234.59 90.32 L236.62 90.32 L236.62 68.28 L238.66 68.28 L238.66 63.74 L240.70 63.74 L240.70 84.87 L242.74 84.87 L242.74 74.13 L244.77 74.13 L244.77 97.05 L246.81 97.05 L246.81 74.92 L248.85 74.92 L248.85 92.40 L250.89 92.40 L250.89 80.93 L252.93 80.93 L252.92 88.03 L254.96 88.03 L254.96 82.32 L257.00 82.32 L257.00 189.60Z" fill="#4a7c63"/><rect x="13.88" y="16.60" width="1.20" height="89.17" fill="#96d6a6"/><rect x="14.14" y="60.13" width="1.20" height="33.04" fill="#6db486"/><rect x="18.06" y="68.92" width="1.20" height="13.88" fill="#96d6a6"/><rect x="18.46" y="82.10" width="1.20" height="3.17" fill="#8ccf9f"/><rect x="20.18" y="49.81" width="1.20" height="29.90" fill="#7cc492"/><rect x="21.76" y="71.60" width="1.20" height="13.81" fill="#7cc492"/><rect x="23.18" y="49.66" width="1.20" height="20.00" fill="#6db486"/><rect x="24.82" y="42.12" width="1.20" height="47.43" fill="#7cc492"/><rect x="27.07" y="37.94" width="1.20" height="29.81" fill="#8ccf9f"/><rect x="28.01" y="65.18" width="1.20" height="29.88" fill="#6db486"/><rect x="29.54" y="35.25" width="1.20" height="50.09" fill="#6db486"/><rect x="31.14" y="44.06" width="1.20" height="36.43" fill="#6db486"/><rect x="33.11" y="21.56" width="1.20" height="62.66" fill="#6db486"/><rect x="34.50" y="43.73" width="1.20" height="60.40" fill="#7cc492"/><rect x="35.77" y="46.29" width="1.20" height="45.00" fill="#8ccf9f"/><rect x="37.31" y="68.49" width="1.20" height="1.66" fill="#8ccf9f"/><rect x="38.63" y="37.14" width="1.20" height="50.62" fill="#96d6a6"/><rect x="40.62" y="19.72" width="1.20" height="67.89" fill="#7cc492"/><rect x="45.00" y="60.30" width="1.20" height="10.21" fill="#7cc492"/><rect x="45.67" y="63.83" width="1.20" height="30.33" fill="#6db486"/><rect x="51.57" y="28.37" width="1.20" height="56.35" fill="#7cc492"/><rect x="55.46" y="74.21" width="1.20" height="7.97" fill="#96d6a6"/><rect x="56.26" y="33.25" width="1.20" height="34.87" fill="#96d6a6"/><rect x="58.08" y="50.08" width="1.20" height="25.94" fill="#8ccf9f"/><rect x="58.66" y="28.66" width="1.20" height="72.83" fill="#96d6a6"/><rect x="60.42" y="16.57" width="1.20" height="69.62" fill="#6db486"/><rect x="62.08" y="17.86" width="1.20" height="68.95" fill="#6db486"/><rect x="63.54" y="47.95" width="1.20" height="26.97" fill="#8ccf9f"/><rect x="64.91" y="49.03" width="1.20" height="36.94" fill="#7cc492"/><rect x="67.25" y="26.40" width="1.20" height="41.37" fill="#96d6a6"/><rect x="68.54" y="17.12" width="1.20" height="83.50" fill="#7cc492"/><rect x="71.60" y="51.35" width="1.20" height="47.84" fill="#96d6a6"/><rect x="72.41" y="31.33" width="1.20" height="63.61" fill="#96d6a6"/><rect x="74.56" y="26.17" width="1.20" height="40.62" fill="#7cc492"/><rect x="75.14" y="44.56" width="1.20" height="21.32" fill="#8ccf9f"/><rect x="77.19" y="62.73" width="1.20" height="7.97" fill="#96d6a6"/><rect x="78.87" y="58.15" width="1.20" height="28.49" fill="#8ccf9f"/><rect x="79.86" y="28.56" width="1.20" height="60.89" fill="#6db486"/><rect x="81.21" y="63.35" width="1.20" height="22.86" fill="#7cc492"/><rect x="82.83" y="24.19" width="1.20" height="54.80" fill="#6db486"/><rect x="84.22" y="73.02" width="1.20" height="30.83" fill="#6db486"/><rect x="85.27" y="16.08" width="1.20" height="66.93" fill="#8ccf9f"/><rect x="87.76" y="26.44" width="1.20" height="48.97" fill="#7cc492"/><rect x="88.51" y="40.64" width="1.20" height="51.01" fill="#6db486"/><rect x="90.29" y="23.44" width="1.20" height="78.06" fill="#6db486"/><rect x="96.26" y="24.77" width="1.20" height="41.02" fill="#6db486"/><rect x="97.79" y="36.35" width="1.20" height="67.89" fill="#8ccf9f"/><rect x="101.32" y="60.58" width="1.20" height="6.32" fill="#96d6a6"/><rect x="104.64" y="37.35" width="1.20" height="53.56" fill="#6db486"/><rect x="106.55" y="50.35" width="1.20" height="54.50" fill="#6db486"/><rect x="109.54" y="31.62" width="1.20" height="57.49" fill="#8ccf9f"/><rect x="110.83" y="33.63" width="1.20" height="68.09" fill="#96d6a6"/><rect x="113.04" y="62.66" width="1.20" height="24.95" fill="#96d6a6"/><rect x="113.45" y="34.31" width="1.20" height="35.14" fill="#96d6a6"/><rect x="116.75" y="25.86" width="1.20" height="59.91" fill="#6db486"/><rect x="118.04" y="73.65" width="1.20" height="2.89" fill="#6db486"/><rect x="120.36" y="81.75" width="1.20" height="2.01" fill="#8ccf9f"/><rect x="121.21" y="82.97" width="1.20" height="17.35" fill="#8ccf9f"/><rect x="122.90" y="42.55" width="1.20" height="27.20" fill="#96d6a6"/><rect x="124.97" y="68.38" width="1.20" height="35.82" fill="#8ccf9f"/><rect x="126.22" y="57.63" width="1.20" height="46.04" fill="#96d6a6"/><rect x="128.05" y="65.80" width="1.20" height="10.51" fill="#96d6a6"/><rect x="128.90" y="75.41" width="1.20" height="11.53" fill="#8ccf9f"/><rect x="129.86" y="81.92" width="1.20" height="0.67" fill="#8ccf9f"/><rect x="132.48" y="36.23" width="1.20" height="45.09" fill="#6db486"/><rect x="133.92" y="49.84" width="1.20" height="54.18" fill="#7cc492"/><rect x="134.43" y="45.89" width="1.20" height="56.16" fill="#96d6a6"/><rect x="137.53" y="63.03" width="1.20" height="33.69" fill="#8ccf9f"/><rect x="140.87" y="73.56" width="1.20" height="25.66" fill="#6db486"/><rect x="142.03" y="50.86" width="1.20" height="31.16" fill="#8ccf9f"/><rect x="144.23" y="73.44" width="1.20" height="21.89" fill="#8ccf9f"/><rect x="145.69" y="63.75" width="1.20" height="25.04" fill="#7cc492"/><rect x="146.56" y="19.49" width="1.20" height="67.72" fill="#96d6a6"/><rect x="150.21" y="57.88" width="1.20" height="40.30" fill="#7cc492"/><rect x="150.80" y="55.89" width="1.20" height="42.33" fill="#7cc492"/><rect x="152.08" y="39.00" width="1.20" height="53.46" fill="#6db486"/><rect x="153.47" y="24.24" width="1.20" height="56.41" fill="#96d6a6"/><rect x="154.89" y="21.01" width="1.20" height="79.91" fill="#7cc492"/><rect x="157.11" y="68.82" width="1.20" height="16.42" fill="#6db486"/><rect x="158.80" y="33.83" width="1.20" height="72.95" fill="#8ccf9f"/><rect x="159.64" y="46.18" width="1.20" height="37.46" fill="#96d6a6"/><rect x="161.20" y="24.46" width="1.20" height="76.56" fill="#7cc492"/><rect x="163.30" y="51.89" width="1.20" height="21.40" fill="#96d6a6"/><rect x="164.65" y="37.74" width="1.20" height="39.22" fill="#96d6a6"/><rect x="165.53" y="25.35" width="1.20" height="65.07" fill="#8ccf9f"/><rect x="168.22" y="33.32" width="1.20" height="52.28" fill="#8ccf9f"/><rect x="170.17" y="79.17" width="1.20" height="5.97" fill="#96d6a6"/><rect x="173.04" y="54.90" width="1.20" height="26.62" fill="#8ccf9f"/><rect x="174.73" y="66.16" width="1.20" height="1.21" fill="#8ccf9f"/><rect x="177.65" y="68.26" width="1.20" height="0.52" fill="#7cc492"/><rect x="179.26" y="72.52" width="1.20" height="10.65" fill="#96d6a6"/><rect x="180.15" y="53.17" width="1.20" height="45.64" fill="#7cc492"/><rect x="181.84" y="64.67" width="1.20" height="13.99" fill="#6db486"/><rect x="183.64" y="63.16" width="1.20" height="26.58" fill="#96d6a6"/><rect x="185.72" y="45.58" width="1.20" height="39.12" fill="#7cc492"/><rect x="186.14" y="46.77" width="1.20" height="26.93" fill="#6db486"/><rect x="191.76" y="68.60" width="1.20" height="7.21" fill="#7cc492"/><rect x="192.47" y="36.21" width="1.20" height="68.58" fill="#96d6a6"/><rect x="193.41" y="33.38" width="1.20" height="53.04" fill="#7cc492"/><rect x="197.22" y="35.30" width="1.20" height="49.85" fill="#6db486"/><rect x="198.17" y="49.75" width="1.20" height="46.21" fill="#6db486"/><rect x="200.32" y="36.55" width="1.20" height="66.95" fill="#7cc492"/><rect x="202.19" y="38.13" width="1.20" height="54.10" fill="#8ccf9f"/><rect x="204.31" y="72.69" width="1.20" height="25.03" fill="#96d6a6"/><rect x="207.41" y="19.10" width="1.20" height="62.45" fill="#8ccf9f"/><rect x="210.24" y="52.14" width="1.20" height="19.65" fill="#6db486"/><rect x="211.16" y="64.91" width="1.20" height="18.54" fill="#6db486"/><rect x="213.62" y="24.42" width="1.20" height="69.33" fill="#6db486"/><rect x="214.33" y="60.18" width="1.20" height="23.32" fill="#6db486"/><rect x="216.56" y="81.86" width="1.20" height="15.63" fill="#7cc492"/><rect x="218.12" y="39.24" width="1.20" height="48.07" fill="#6db486"/><rect x="219.95" y="21.00" width="1.20" height="62.95" fill="#7cc492"/><rect x="221.01" y="45.82" width="1.20" height="27.78" fill="#96d6a6"/><rect x="223.57" y="44.26" width="1.20" height="28.80" fill="#96d6a6"/><rect x="226.00" y="49.61" width="1.20" height="32.24" fill="#6db486"/><rect x="227.92" y="25.73" width="1.20" height="46.02" fill="#8ccf9f"/><rect x="229.53" y="63.41" width="1.20" height="43.96" fill="#96d6a6"/><rect x="231.32" y="73.81" width="1.20" height="15.25" fill="#96d6a6"/><rect x="231.99" y="60.66" width="1.20" height="42.10" fill="#6db486"/><rect x="234.05" y="35.10" width="1.20" height="32.84" fill="#96d6a6"/><rect x="234.78" y="54.08" width="1.20" height="33.28" fill="#96d6a6"/><rect x="236.85" y="58.51" width="1.20" height="11.80" fill="#7cc492"/><rect x="237.79" y="65.01" width="1.20" height="9.91" fill="#7cc492"/><rect x="239.91" y="83.20" width="1.20" height="3.78" fill="#8ccf9f"/><rect x="242.16" y="31.37" width="1.20" height="62.45" fill="#8ccf9f"/><rect x="244.72" y="37.66" width="1.20" height="44.12" fill="#8ccf9f"/><rect x="245.56" y="33.66" width="1.20" height="39.63" fill="#7cc492"/><rect x="246.81" y="33.37" width="1.20" height="36.61" fill="#7cc492"/><rect x="248.71" y="65.09" width="1.20" height="5.35" fill="#7cc492"/><rect x="250.30" y="35.05" width="1.20" height="50.59" fill="#6db486"/><rect x="253.86" y="46.13" width="1.20" height="54.89" fill="#6db486"/><rect x="7.50" y="118.76" width="1.80" height="70.84" fill="#b7a08f"/><rect x="9.50" y="140.01" width="1.80" height="49.59" fill="#a8968c"/><rect x="11.00" y="65.63" width="1.50" height="123.97" fill="#8a9a8c"/><rect x="256.00" y="78.03" width="1.20" height="111.57" fill="#cfe6d0"/></svg>
<svg style="position:absolute;left:940px;top:800px;" width="260" height="200" viewBox="0 0 260 200"><rect x="6.00" y="16.00" width="246.50" height="175.30" fill="#0b3a36"/><path d="M7.00 191.30 L7.00 29.69 L9.05 29.69 L9.04 86.04 L11.09 86.04 L11.09 102.43 L13.14 102.43 L13.13 100.88 L15.18 100.88 L15.18 133.53 L17.22 133.53 L17.23 105.00 L19.27 105.00 L19.27 124.40 L21.31 124.40 L21.32 82.64 L23.36 82.64 L23.36 65.30 L25.41 65.30 L25.40 74.85 L27.45 74.85 L27.45 110.69 L29.50 110.69 L29.50 71.17 L31.54 71.17 L31.54 85.15 L33.58 85.15 L33.59 72.86 L35.63 72.86 L35.63 167.17 L37.67 167.17 L37.67 78.70 L39.72 78.70 L39.72 106.50 L41.77 106.50 L41.76 72.26 L43.81 72.26 L43.81 89.33 L45.86 89.33 L45.86 86.30 L47.90 86.30 L47.90 49.47 L49.94 49.47 L49.95 159.49 L51.99 159.49 L51.99 100.15 L54.04 100.15 L54.03 58.44 L56.08 58.44 L56.08 53.05 L58.13 53.05 L58.12 66.80 L60.17 66.80 L60.17 124.01 L62.22 124.01 L62.22 93.80 L64.26 93.80 L64.26 135.23 L66.30 135.23 L66.31 120.00 L68.35 120.00 L68.35 123.20 L70.40 123.20 L70.39 114.05 L72.44 114.05 L72.44 59.86 L74.49 59.86 L74.49 77.04 L76.53 77.04 L76.53 88.55 L78.57 88.55 L78.58 73.00 L80.62 73.00 L80.62 147.76 L82.67 147.76 L82.67 90.06 L84.71 90.06 L84.71 151.54 L86.76 151.54 L86.76 104.45 L88.80 104.45 L88.80 92.66 L90.84 92.66 L90.85 122.72 L92.89 122.72 L92.89 106.91 L94.94 106.91 L94.93 109.82 L96.98 109.82 L96.98 113.66 L99.03 113.66 L99.03 82.43 L101.07 82.43 L101.07 83.33 L103.11 83.33 L103.12 79.26 L105.16 79.26 L105.16 49.42 L107.21 49.42 L107.20 49.78 L109.25 49.78 L109.25 85.42 L111.30 85.42 L111.30 60.75 L113.34 60.75 L113.34 57.65 L115.39 57.65 L115.38 85.32 L117.43 85.32 L117.43 116.01 L119.48 116.01 L119.48 156.95 L121.52 156.95 L121.52 97.85 L123.56 97.85 L123.57 82.80 L125.61 82.80 L125.61 70.44 L127.66 70.44 L127.65 101.96 L129.70 101.96 L129.70 125.86 L131.75 125.86 L131.75 111.81 L133.79 111.81 L133.79 132.26 L135.83 132.26 L135.84 95.55 L137.88 95.55 L137.88 148.86 L139.93 148.86 L139.92 80.42 L141.97 80.42 L141.97 72.15 L144.02 72.15 L144.02 55.32 L146.06 55.32 L146.06 135.44 L148.10 135.44 L148.11 103.32 L150.15 103.32 L150.15 84.11 L152.20 84.11 L152.20 94.99 L154.24 94.99 L154.24 52.60 L156.28 52.60 L156.29 32.38 L158.33 32.38 L158.33 95.25 L160.38 95.25 L160.38 88.34 L162.42 88.34 L162.42 49.72 L164.47 49.72 L164.47 164.98 L166.51 164.98 L166.51 76.34 L168.55 76.34 L168.56 104.52 L170.60 104.52 L170.60 81.20 L172.65 81.20 L172.64 58.42 L174.69 58.42 L174.69 64.04 L176.74 64.04 L176.74 50.58 L178.78 50.58 L178.78 136.36 L180.82 136.36 L180.83 180.34 L182.87 180.34 L182.87 67.20 L184.92 67.20 L184.91 66.49 L186.96 66.49 L186.96 150.11 L189.01 150.11 L189.01 178.52 L191.05 178.52 L191.05 105.57 L193.10 105.57 L193.10 92.89 L195.14 92.89 L195.14 84.10 L197.19 84.10 L197.19 72.23 L199.23 72.23 L199.23 102.66 L201.28 102.66 L201.28 86.03 L203.32 86.03 L203.32 95.33 L205.37 95.33 L205.37 89.29 L207.41 89.29 L207.41 131.95 L209.46 131.95 L209.46 55.75 L211.50 55.75 L211.50 102.90 L213.54 102.90 L213.55 49.98 L215.59 49.98 L215.59 86.38 L217.64 86.38 L217.63 43.50 L219.68 43.50 L219.68 72.78 L221.73 72.78 L221.73 94.78 L223.77 94.78 L223.77 134.77 L225.81 134.77 L225.82 138.03 L227.86 138.03 L227.86 86.43 L229.91 86.43 L229.91 138.72 L231.95 138.72 L231.95 80.80 L234.00 80.80 L234.00 64.08 L236.04 64.08 L236.04 103.79 L238.08 103.79 L238.09 68.72 L240.13 68.72 L240.13 52.28 L242.18 52.28 L242.18 91.67 L244.22 91.67 L244.22 86.77 L246.27 86.77 L246.27 64.20 L248.31 64.20 L248.31 48.44 L250.36 48.44 L250.36 65.60 L252.40 65.60 L252.40 191.30Z" fill="#07a1e6"/><rect x="15.18" y="96.70" width="1.00" height="83.64" fill="#3f8cea"/><rect x="17.23" y="42.23" width="1.00" height="131.98" fill="#3f8cea"/><rect x="19.27" y="95.14" width="1.30" height="87.07" fill="#4f7fe4"/><rect x="21.32" y="43.52" width="1.00" height="79.90" fill="#3f8cea"/><rect x="31.54" y="45.40" width="1.00" height="101.79" fill="#5a7ae2"/><rect x="35.63" y="109.51" width="1.00" height="72.70" fill="#5a7ae2"/><rect x="41.76" y="19.42" width="1.00" height="129.82" fill="#5a7ae2"/><rect x="43.81" y="59.62" width="1.00" height="92.00" fill="#4f7fe4"/><rect x="49.95" y="148.44" width="1.30" height="33.77" fill="#3f8cea"/><rect x="51.99" y="44.61" width="1.60" height="119.30" fill="#3f8cea"/><rect x="56.08" y="22.58" width="1.60" height="109.51" fill="#4f7fe4"/><rect x="58.12" y="50.74" width="1.60" height="58.33" fill="#3f8cea"/><rect x="68.35" y="73.75" width="1.30" height="108.45" fill="#3f8cea"/><rect x="70.39" y="96.57" width="1.30" height="45.36" fill="#5a7ae2"/><rect x="72.44" y="9.40" width="1.60" height="103.93" fill="#4f7fe4"/><rect x="80.62" y="132.32" width="1.00" height="49.89" fill="#5a7ae2"/><rect x="82.67" y="32.61" width="1.00" height="98.15" fill="#3f8cea"/><rect x="84.71" y="128.21" width="1.00" height="53.99" fill="#4f7fe4"/><rect x="92.89" y="57.96" width="1.60" height="116.94" fill="#5a7ae2"/><rect x="94.93" y="71.07" width="1.60" height="98.12" fill="#4f7fe4"/><rect x="105.16" y="33.37" width="1.30" height="53.38" fill="#5a7ae2"/><rect x="109.25" y="70.81" width="1.30" height="78.46" fill="#5a7ae2"/><rect x="115.38" y="36.21" width="1.60" height="110.20" fill="#5a7ae2"/><rect x="121.52" y="61.22" width="1.00" height="106.06" fill="#3f8cea"/><rect x="125.61" y="36.40" width="1.60" height="82.95" fill="#4f7fe4"/><rect x="127.65" y="92.14" width="1.60" height="56.83" fill="#5a7ae2"/><rect x="131.75" y="95.04" width="1.60" height="83.06" fill="#4f7fe4"/><rect x="133.79" y="79.59" width="1.30" height="90.55" fill="#5a7ae2"/><rect x="141.97" y="34.55" width="1.60" height="74.28" fill="#5a7ae2"/><rect x="144.02" y="35.28" width="1.30" height="86.07" fill="#4f7fe4"/><rect x="148.11" y="54.05" width="1.30" height="91.36" fill="#4f7fe4"/><rect x="150.15" y="74.63" width="1.60" height="74.11" fill="#4f7fe4"/><rect x="152.20" y="33.30" width="1.00" height="111.44" fill="#4f7fe4"/><rect x="158.33" y="85.06" width="1.00" height="47.36" fill="#3f8cea"/><rect x="162.42" y="9.40" width="1.60" height="99.05" fill="#4f7fe4"/><rect x="166.51" y="63.93" width="1.00" height="89.12" fill="#4f7fe4"/><rect x="168.56" y="89.51" width="1.00" height="92.69" fill="#4f7fe4"/><rect x="172.64" y="34.77" width="1.60" height="77.58" fill="#4f7fe4"/><rect x="178.78" y="109.76" width="1.30" height="72.44" fill="#4f7fe4"/><rect x="182.87" y="24.91" width="1.30" height="105.73" fill="#3f8cea"/><rect x="184.91" y="21.04" width="1.00" height="118.31" fill="#5a7ae2"/><rect x="186.96" y="129.88" width="1.60" height="52.32" fill="#5a7ae2"/><rect x="195.14" y="33.85" width="1.60" height="100.50" fill="#4f7fe4"/><rect x="197.19" y="15.67" width="1.60" height="105.50" fill="#5a7ae2"/><rect x="203.32" y="81.16" width="1.00" height="69.40" fill="#4f7fe4"/><rect x="205.37" y="74.18" width="1.60" height="47.31" fill="#3f8cea"/><rect x="207.41" y="108.31" width="1.00" height="72.11" fill="#3f8cea"/><rect x="213.55" y="9.40" width="1.60" height="77.46" fill="#5a7ae2"/><rect x="215.59" y="36.60" width="1.30" height="127.95" fill="#4f7fe4"/><rect x="217.63" y="25.96" width="1.60" height="52.44" fill="#4f7fe4"/><rect x="221.73" y="46.59" width="1.30" height="126.92" fill="#4f7fe4"/><rect x="225.82" y="126.45" width="1.30" height="55.75" fill="#4f7fe4"/><rect x="231.95" y="21.09" width="1.60" height="88.63" fill="#3f8cea"/><rect x="236.04" y="50.85" width="1.30" height="121.84" fill="#3f8cea"/><rect x="238.09" y="54.13" width="1.60" height="60.87" fill="#5a7ae2"/><rect x="240.13" y="9.40" width="1.00" height="116.88" fill="#3f8cea"/><rect x="242.18" y="34.86" width="1.30" height="94.71" fill="#3f8cea"/><rect x="246.27" y="9.40" width="1.00" height="95.34" fill="#4f7fe4"/></svg>
<svg style="position:absolute;left:0px;top:376px;opacity:0.4;" width="165" height="8" viewBox="0 0 165 8"><rect x="0.0" y="0.6" width="2.5" height="7.4" fill="#4a1a3e"/><rect x="3.0" y="1.9" width="1" height="6.1" fill="#4a1a3e"/><rect x="17.1" y="2.4" width="1.5" height="5.6" fill="#0b4a3a"/><rect x="22.9" y="0.0" width="2" height="8.0" fill="#4a1a3e"/><rect x="25.5" y="0.6" width="3" height="7.4" fill="#4a1a3e"/><rect x="29.5" y="2.6" width="1" height="5.4" fill="#4a1a3e"/><rect x="38.6" y="1.2" width="1" height="6.8" fill="#0b4a3a"/><rect x="41.3" y="1.1" width="1" height="6.9" fill="#4a1a3e"/><rect x="42.8" y="0.2" width="2.5" height="7.8" fill="#0b4a3a"/><rect x="49.5" y="2.6" width="1.5" height="5.4" fill="#0b4a3a"/><rect x="55.0" y="0.8" width="2.5" height="7.2" fill="#4a1a3e"/><rect x="59.3" y="1.6" width="2.5" height="6.4" fill="#4a1a3e"/><rect x="65.2" y="0.8" width="2" height="7.2" fill="#4a1a3e"/><rect x="68.4" y="0.9" width="1" height="7.1" fill="#4a1a3e"/><rect x="70.9" y="0.3" width="2.5" height="7.7" fill="#4a1a3e"/><rect x="78.0" y="0.6" width="2.5" height="7.4" fill="#0b4a3a"/><rect x="87.1" y="2.7" width="1.5" height="5.3" fill="#4a1a3e"/><rect x="93.4" y="0.9" width="3" height="7.1" fill="#0b4a3a"/><rect x="99.6" y="1.7" width="2" height="6.3" fill="#0b4a3a"/><rect x="106.5" y="0.6" width="2.5" height="7.4" fill="#4a1a3e"/><rect x="119.3" y="1.8" width="1.5" height="6.2" fill="#0b4a3a"/><rect x="131.2" y="1.2" width="1.5" height="6.8" fill="#0b4a3a"/><rect x="147.2" y="1.8" width="2.5" height="6.2" fill="#0b4a3a"/><rect x="151.1" y="2.8" width="3" height="5.2" fill="#0b4a3a"/><rect x="158.8" y="1.3" width="2" height="6.7" fill="#4a1a3e"/><rect x="162.4" y="0.5" width="2.5" height="7.5" fill="#0b4a3a"/></svg>
<svg style="position:absolute;left:0px;top:400px;opacity:0.6;" width="160" height="15" viewBox="0 0 160 15"><rect x="0.0" y="3.7" width="2" height="11.3" fill="#0b4a3a"/><rect x="2.6" y="4.8" width="2.5" height="10.2" fill="#0b4a3a"/><rect x="6.4" y="2.7" width="1" height="12.3" fill="#0b4a3a"/><rect x="7.8" y="0.0" width="2.5" height="15.0" fill="#0b4a3a"/><rect x="11.7" y="2.2" width="2" height="12.8" fill="#4a1a3e"/><rect x="18.1" y="4.0" width="1" height="11.0" fill="#4a1a3e"/><rect x="19.6" y="1.2" width="2.5" height="13.8" fill="#0b4a3a"/><rect x="22.7" y="1.9" width="2.5" height="13.1" fill="#4a1a3e"/><rect x="26.4" y="1.9" width="1.5" height="13.1" fill="#4a1a3e"/><rect x="29.6" y="3.8" width="3" height="11.2" fill="#0b4a3a"/><rect x="34.1" y="2.7" width="1.5" height="12.3" fill="#4a1a3e"/><rect x="39.9" y="0.8" width="3" height="14.2" fill="#0b4a3a"/><rect x="44.4" y="1.6" width="2" height="13.4" fill="#4a1a3e"/><rect x="47.8" y="3.8" width="1.5" height="11.2" fill="#0b4a3a"/><rect x="53.6" y="3.2" width="1.5" height="11.8" fill="#0b4a3a"/><rect x="59.8" y="0.2" width="2.5" height="14.8" fill="#4a1a3e"/><rect x="68.2" y="4.2" width="2" height="10.8" fill="#4a1a3e"/><rect x="70.5" y="1.8" width="1.5" height="13.2" fill="#4a1a3e"/><rect x="72.8" y="1.2" width="1" height="13.8" fill="#4a1a3e"/><rect x="74.3" y="3.9" width="1" height="11.1" fill="#0b4a3a"/><rect x="76.3" y="0.3" width="1.5" height="14.7" fill="#4a1a3e"/><rect x="78.4" y="2.3" width="2" height="12.7" fill="#4a1a3e"/><rect x="81.6" y="5.0" width="1" height="10.0" fill="#4a1a3e"/><rect x="85.5" y="4.9" width="3" height="10.1" fill="#4a1a3e"/><rect x="93.1" y="2.3" width="1" height="12.7" fill="#4a1a3e"/><rect x="95.1" y="1.2" width="3" height="13.8" fill="#4a1a3e"/><rect x="99.3" y="3.2" width="1.5" height="11.8" fill="#4a1a3e"/><rect x="102.5" y="1.3" width="1.5" height="13.7" fill="#0b4a3a"/><rect x="105.5" y="4.2" width="2" height="10.8" fill="#4a1a3e"/><rect x="109.2" y="1.2" width="3" height="13.8" fill="#4a1a3e"/><rect x="113.6" y="1.3" width="2.5" height="13.7" fill="#4a1a3e"/><rect x="117.5" y="3.3" width="2" height="11.7" fill="#4a1a3e"/><rect x="121.2" y="0.3" width="2.5" height="14.7" fill="#4a1a3e"/><rect x="127.8" y="3.8" width="1" height="11.2" fill="#4a1a3e"/><rect x="129.2" y="2.8" width="2" height="12.2" fill="#0b4a3a"/><rect x="133.2" y="4.5" width="1.5" height="10.5" fill="#4a1a3e"/><rect x="137.7" y="0.9" width="1.5" height="14.1" fill="#4a1a3e"/><rect x="139.8" y="3.4" width="3" height="11.6" fill="#0b4a3a"/><rect x="143.8" y="3.8" width="2.5" height="11.2" fill="#0b4a3a"/><rect x="151.8" y="0.6" width="2" height="14.4" fill="#4a1a3e"/><rect x="156.5" y="1.6" width="2" height="13.4" fill="#4a1a3e"/><rect x="159.7" y="0.1" width="1.5" height="14.9" fill="#4a1a3e"/></svg>
<svg style="position:absolute;left:0px;top:432px;opacity:0.6;" width="152" height="16" viewBox="0 0 152 16"><rect x="0.0" y="0.1" width="1" height="15.9" fill="#4a1a3e"/><rect x="2.0" y="1.8" width="2.5" height="14.2" fill="#0b4a3a"/><rect x="6.3" y="4.9" width="3" height="11.1" fill="#0b4a3a"/><rect x="11.0" y="5.2" width="2.5" height="10.8" fill="#4a1a3e"/><rect x="14.5" y="3.9" width="2.5" height="12.1" fill="#4a1a3e"/><rect x="17.4" y="1.1" width="1" height="14.9" fill="#0b4a3a"/><rect x="20.0" y="4.5" width="3" height="11.5" fill="#4a1a3e"/><rect x="23.6" y="5.3" width="1" height="10.7" fill="#4a1a3e"/><rect x="25.3" y="5.6" width="1.5" height="10.4" fill="#0b4a3a"/><rect x="28.2" y="2.3" width="1" height="13.7" fill="#4a1a3e"/><rect x="30.5" y="1.4" width="1" height="14.6" fill="#4a1a3e"/><rect x="33.2" y="0.2" width="1.5" height="15.8" fill="#0b4a3a"/><rect x="35.9" y="5.0" width="1" height="11.0" fill="#4a1a3e"/><rect x="38.1" y="2.8" width="1.5" height="13.2" fill="#0b4a3a"/><rect x="41.2" y="2.6" width="2" height="13.4" fill="#0b4a3a"/><rect x="43.7" y="1.3" width="2" height="14.7" fill="#0b4a3a"/><rect x="46.5" y="4.4" width="3" height="11.6" fill="#4a1a3e"/><rect x="50.7" y="3.3" width="2" height="12.7" fill="#0b4a3a"/><rect x="53.1" y="0.5" width="2.5" height="15.5" fill="#4a1a3e"/><rect x="56.2" y="0.6" width="1" height="15.4" fill="#4a1a3e"/><rect x="58.6" y="3.6" width="2" height="12.4" fill="#4a1a3e"/><rect x="61.0" y="1.2" width="1" height="14.8" fill="#0b4a3a"/><rect x="62.9" y="1.4" width="3" height="14.6" fill="#0b4a3a"/><rect x="67.1" y="3.9" width="2" height="12.1" fill="#4a1a3e"/><rect x="75.1" y="3.4" width="1.5" height="12.6" fill="#0b4a3a"/><rect x="78.0" y="4.1" width="1.5" height="11.9" fill="#4a1a3e"/><rect x="81.0" y="3.3" width="3" height="12.7" fill="#4a1a3e"/><rect x="84.5" y="5.3" width="2.5" height="10.7" fill="#4a1a3e"/><rect x="88.2" y="5.3" width="2" height="10.7" fill="#4a1a3e"/><rect x="91.5" y="1.9" width="3" height="14.1" fill="#0b4a3a"/><rect x="95.1" y="2.7" width="1.5" height="13.3" fill="#0b4a3a"/><rect x="97.6" y="3.6" width="3" height="12.4" fill="#4a1a3e"/><rect x="102.2" y="4.4" width="2" height="11.6" fill="#4a1a3e"/><rect x="104.7" y="2.1" width="2" height="13.9" fill="#0b4a3a"/><rect x="107.5" y="5.5" width="1.5" height="10.5" fill="#4a1a3e"/><rect x="110.8" y="3.7" width="2" height="12.3" fill="#4a1a3e"/><rect x="114.6" y="4.4" width="1.5" height="11.6" fill="#0b4a3a"/><rect x="117.7" y="0.8" width="1" height="15.2" fill="#4a1a3e"/><rect x="119.6" y="4.2" width="3" height="11.8" fill="#4a1a3e"/><rect x="123.0" y="2.7" width="2" height="13.3" fill="#4a1a3e"/><rect x="125.4" y="0.2" width="2" height="15.8" fill="#4a1a3e"/><rect x="133.7" y="0.2" width="2" height="15.8" fill="#4a1a3e"/><rect x="136.1" y="2.5" width="1.5" height="13.5" fill="#0b4a3a"/><rect x="138.8" y="1.2" width="2.5" height="14.8" fill="#0b4a3a"/><rect x="141.7" y="1.0" width="1.5" height="15.0" fill="#0b4a3a"/><rect x="143.7" y="0.1" width="3" height="15.9" fill="#0b4a3a"/><rect x="148.2" y="3.8" width="1" height="12.2" fill="#0b4a3a"/></svg>
<svg style="position:absolute;left:8px;top:463px;opacity:0.5;" width="136" height="17" viewBox="0 0 136 17"><rect x="0.0" y="5.3" width="1.5" height="11.7" fill="#4a1a3e"/><rect x="5.0" y="2.5" width="2" height="14.5" fill="#4a1a3e"/><rect x="8.3" y="0.5" width="1.5" height="16.5" fill="#4a1a3e"/><rect x="13.9" y="0.2" width="1" height="16.8" fill="#0b4a3a"/><rect x="18.7" y="1.8" width="1" height="15.2" fill="#0b4a3a"/><rect x="20.5" y="2.2" width="2" height="14.8" fill="#0b4a3a"/><rect x="23.1" y="4.4" width="1.5" height="12.6" fill="#4a1a3e"/><rect x="28.1" y="3.0" width="3" height="14.0" fill="#4a1a3e"/><rect x="32.3" y="1.3" width="3" height="15.7" fill="#0b4a3a"/><rect x="39.7" y="4.2" width="3" height="12.8" fill="#0b4a3a"/><rect x="48.8" y="4.3" width="1.5" height="12.7" fill="#4a1a3e"/><rect x="50.7" y="1.6" width="2.5" height="15.4" fill="#0b4a3a"/><rect x="60.0" y="3.7" width="2" height="13.3" fill="#0b4a3a"/><rect x="62.6" y="5.7" width="3" height="11.3" fill="#0b4a3a"/><rect x="67.3" y="2.9" width="2.5" height="14.1" fill="#0b4a3a"/><rect x="71.0" y="0.6" width="3" height="16.4" fill="#4a1a3e"/><rect x="74.4" y="0.1" width="2.5" height="16.9" fill="#4a1a3e"/><rect x="83.2" y="4.5" width="3" height="12.5" fill="#4a1a3e"/><rect x="87.8" y="0.8" width="1" height="16.2" fill="#0b4a3a"/><rect x="89.5" y="0.4" width="2" height="16.6" fill="#0b4a3a"/><rect x="91.8" y="3.6" width="1.5" height="13.4" fill="#4a1a3e"/><rect x="97.5" y="2.1" width="2" height="14.9" fill="#0b4a3a"/><rect x="101.2" y="0.6" width="1.5" height="16.4" fill="#0b4a3a"/><rect x="112.5" y="2.0" width="2" height="15.0" fill="#0b4a3a"/><rect x="118.1" y="2.0" width="1" height="15.0" fill="#4a1a3e"/><rect x="126.9" y="3.5" width="1" height="13.5" fill="#4a1a3e"/><rect x="132.8" y="1.4" width="2" height="15.6" fill="#4a1a3e"/><rect x="135.6" y="0.4" width="3" height="16.6" fill="#0b4a3a"/></svg>
<svg style="position:absolute;left:111px;top:575px;opacity:0.5;" width="152" height="17" viewBox="0 0 152 17"><rect x="0.0" y="1.9" width="1.5" height="15.1" fill="#4a1a3e"/><rect x="2.1" y="1.5" width="1.5" height="15.5" fill="#4a1a3e"/><rect x="6.6" y="3.0" width="2" height="14.0" fill="#4a1a3e"/><rect x="12.7" y="1.8" width="1" height="15.2" fill="#4a1a3e"/><rect x="14.6" y="2.1" width="1.5" height="14.9" fill="#4a1a3e"/><rect x="19.2" y="3.6" width="2" height="13.4" fill="#4a1a3e"/><rect x="22.7" y="1.1" width="1.5" height="15.9" fill="#4a1a3e"/><rect x="25.2" y="5.8" width="2" height="11.2" fill="#4a1a3e"/><rect x="31.7" y="5.2" width="2.5" height="11.8" fill="#0b4a3a"/><rect x="37.4" y="5.8" width="1" height="11.2" fill="#0b4a3a"/><rect x="39.9" y="0.2" width="1.5" height="16.8" fill="#0b4a3a"/><rect x="41.7" y="0.1" width="1.5" height="16.9" fill="#0b4a3a"/><rect x="43.6" y="0.4" width="1" height="16.6" fill="#4a1a3e"/><rect x="48.5" y="0.3" width="2" height="16.7" fill="#4a1a3e"/><rect x="51.1" y="0.5" width="1.5" height="16.5" fill="#4a1a3e"/><rect x="53.1" y="0.3" width="2" height="16.7" fill="#4a1a3e"/><rect x="55.7" y="4.5" width="1.5" height="12.5" fill="#4a1a3e"/><rect x="57.9" y="2.5" width="2.5" height="14.5" fill="#0b4a3a"/><rect x="61.0" y="4.7" width="1" height="12.3" fill="#0b4a3a"/><rect x="62.6" y="0.5" width="1.5" height="16.5" fill="#4a1a3e"/><rect x="65.8" y="5.0" width="2" height="12.0" fill="#4a1a3e"/><rect x="69.2" y="4.0" width="3" height="13.0" fill="#4a1a3e"/><rect x="73.2" y="3.1" width="2" height="13.9" fill="#0b4a3a"/><rect x="75.7" y="4.5" width="2.5" height="12.5" fill="#0b4a3a"/><rect x="79.6" y="0.8" width="3" height="16.2" fill="#4a1a3e"/><rect x="84.2" y="5.2" width="1" height="11.8" fill="#4a1a3e"/><rect x="85.7" y="4.8" width="3" height="12.2" fill="#0b4a3a"/><rect x="89.4" y="3.6" width="1.5" height="13.4" fill="#0b4a3a"/><rect x="91.3" y="2.1" width="1.5" height="14.9" fill="#0b4a3a"/><rect x="94.6" y="5.7" width="2.5" height="11.3" fill="#0b4a3a"/><rect x="97.9" y="1.3" width="1.5" height="15.7" fill="#4a1a3e"/><rect x="100.4" y="3.4" width="1" height="13.6" fill="#4a1a3e"/><rect x="102.4" y="1.0" width="2" height="16.0" fill="#0b4a3a"/><rect x="106.1" y="1.7" width="2" height="15.3" fill="#4a1a3e"/><rect x="111.6" y="0.5" width="1.5" height="16.5" fill="#4a1a3e"/><rect x="118.2" y="0.1" width="3" height="16.9" fill="#4a1a3e"/><rect x="122.2" y="1.8" width="2.5" height="15.2" fill="#0b4a3a"/><rect x="133.6" y="2.2" width="2.5" height="14.8" fill="#4a1a3e"/><rect x="136.9" y="5.7" width="1" height="11.3" fill="#4a1a3e"/><rect x="139.4" y="1.2" width="1.5" height="15.8" fill="#0b4a3a"/><rect x="151.7" y="2.3" width="1.5" height="14.7" fill="#4a1a3e"/></svg>
<svg style="position:absolute;left:96px;top:607px;opacity:0.55;" width="157" height="17" viewBox="0 0 157 17"><rect x="0.0" y="5.3" width="3" height="11.7" fill="#4a1a3e"/><rect x="7.1" y="5.5" width="2.5" height="11.5" fill="#0b4a3a"/><rect x="10.0" y="5.1" width="1.5" height="11.9" fill="#4a1a3e"/><rect x="13.0" y="3.6" width="2" height="13.4" fill="#0b4a3a"/><rect x="16.3" y="2.4" width="2.5" height="14.6" fill="#4a1a3e"/><rect x="19.9" y="3.7" width="2" height="13.3" fill="#4a1a3e"/><rect x="22.2" y="2.6" width="2.5" height="14.4" fill="#4a1a3e"/><rect x="26.4" y="0.6" width="3" height="16.4" fill="#4a1a3e"/><rect x="30.5" y="0.5" width="2.5" height="16.5" fill="#4a1a3e"/><rect x="34.1" y="1.9" width="2.5" height="15.1" fill="#0b4a3a"/><rect x="37.9" y="3.4" width="2" height="13.6" fill="#4a1a3e"/><rect x="40.9" y="4.8" width="1.5" height="12.2" fill="#4a1a3e"/><rect x="46.0" y="2.8" width="1.5" height="14.2" fill="#4a1a3e"/><rect x="48.5" y="4.0" width="3" height="13.0" fill="#0b4a3a"/><rect x="52.0" y="3.5" width="1" height="13.5" fill="#0b4a3a"/><rect x="53.4" y="0.2" width="2" height="16.8" fill="#4a1a3e"/><rect x="56.9" y="1.7" width="1" height="15.3" fill="#4a1a3e"/><rect x="59.1" y="3.4" width="2" height="13.6" fill="#0b4a3a"/><rect x="62.3" y="3.6" width="3" height="13.4" fill="#4a1a3e"/><rect x="65.7" y="4.6" width="3" height="12.4" fill="#4a1a3e"/><rect x="69.5" y="4.2" width="2.5" height="12.8" fill="#4a1a3e"/><rect x="77.0" y="1.3" width="3" height="15.7" fill="#4a1a3e"/><rect x="81.7" y="1.7" width="1.5" height="15.3" fill="#4a1a3e"/><rect x="84.2" y="5.1" width="1.5" height="11.9" fill="#4a1a3e"/><rect x="90.3" y="4.8" width="1" height="12.2" fill="#4a1a3e"/><rect x="92.1" y="3.1" width="1" height="13.9" fill="#4a1a3e"/><rect x="93.9" y="2.3" width="2.5" height="14.7" fill="#0b4a3a"/><rect x="101.5" y="3.7" width="1" height="13.3" fill="#0b4a3a"/><rect x="103.0" y="2.4" width="1" height="14.6" fill="#4a1a3e"/><rect x="107.3" y="0.6" width="1" height="16.4" fill="#4a1a3e"/><rect x="108.7" y="0.6" width="2.5" height="16.4" fill="#4a1a3e"/><rect x="112.9" y="5.7" width="1.5" height="11.3" fill="#4a1a3e"/><rect x="118.4" y="5.9" width="2.5" height="11.1" fill="#0b4a3a"/><rect x="122.3" y="3.5" width="1.5" height="13.5" fill="#0b4a3a"/><rect x="128.4" y="5.2" width="1" height="11.8" fill="#4a1a3e"/><rect x="130.3" y="3.8" width="2.5" height="13.2" fill="#0b4a3a"/><rect x="134.3" y="2.0" width="2.5" height="15.0" fill="#4a1a3e"/><rect x="141.1" y="5.3" width="3" height="11.7" fill="#4a1a3e"/><rect x="147.0" y="2.0" width="1" height="15.0" fill="#0b4a3a"/><rect x="149.6" y="1.0" width="1.5" height="16.0" fill="#4a1a3e"/><rect x="151.5" y="0.2" width="1" height="16.8" fill="#4a1a3e"/><rect x="153.4" y="1.3" width="2" height="15.7" fill="#4a1a3e"/><rect x="156.4" y="5.3" width="3" height="11.7" fill="#0b4a3a"/></svg>
<svg style="position:absolute;left:89px;top:640px;opacity:0.55;" width="157" height="16" viewBox="0 0 157 16"><rect x="0.0" y="3.4" width="1" height="12.6" fill="#4a1a3e"/><rect x="2.2" y="5.4" width="2.5" height="10.6" fill="#4a1a3e"/><rect x="6.2" y="2.3" width="1.5" height="13.7" fill="#0b4a3a"/><rect x="8.4" y="4.3" width="1.5" height="11.7" fill="#4a1a3e"/><rect x="14.6" y="3.9" width="3" height="12.1" fill="#0b4a3a"/><rect x="18.7" y="3.1" width="2" height="12.9" fill="#0b4a3a"/><rect x="22.3" y="4.8" width="2" height="11.2" fill="#4a1a3e"/><rect x="25.2" y="0.3" width="2" height="15.7" fill="#4a1a3e"/><rect x="28.9" y="4.7" width="3" height="11.3" fill="#4a1a3e"/><rect x="32.4" y="3.3" width="1.5" height="12.7" fill="#0b4a3a"/><rect x="34.5" y="3.8" width="1" height="12.2" fill="#4a1a3e"/><rect x="36.7" y="2.9" width="1" height="13.1" fill="#4a1a3e"/><rect x="38.9" y="1.9" width="1.5" height="14.1" fill="#0b4a3a"/><rect x="42.0" y="5.0" width="1" height="11.0" fill="#4a1a3e"/><rect x="43.6" y="3.1" width="1.5" height="12.9" fill="#4a1a3e"/><rect x="46.7" y="0.8" width="3" height="15.2" fill="#0b4a3a"/><rect x="50.2" y="0.4" width="1" height="15.6" fill="#4a1a3e"/><rect x="52.3" y="4.9" width="2" height="11.1" fill="#0b4a3a"/><rect x="54.9" y="0.5" width="2" height="15.5" fill="#0b4a3a"/><rect x="57.8" y="4.7" width="1" height="11.3" fill="#4a1a3e"/><rect x="60.4" y="2.4" width="2" height="13.6" fill="#0b4a3a"/><rect x="63.3" y="1.8" width="2.5" height="14.2" fill="#4a1a3e"/><rect x="67.0" y="0.7" width="2.5" height="15.3" fill="#4a1a3e"/><rect x="70.0" y="0.9" width="1.5" height="15.1" fill="#0b4a3a"/><rect x="73.1" y="5.2" width="3" height="10.8" fill="#4a1a3e"/><rect x="76.5" y="2.1" width="1" height="13.9" fill="#4a1a3e"/><rect x="78.2" y="3.5" width="2" height="12.5" fill="#4a1a3e"/><rect x="81.2" y="0.7" width="1" height="15.3" fill="#4a1a3e"/><rect x="82.6" y="5.6" width="2.5" height="10.4" fill="#4a1a3e"/><rect x="85.5" y="1.8" width="1.5" height="14.2" fill="#4a1a3e"/><rect x="88.3" y="4.2" width="1.5" height="11.8" fill="#0b4a3a"/><rect x="91.4" y="0.3" width="1" height="15.7" fill="#0b4a3a"/><rect x="94.2" y="5.6" width="1.5" height="10.4" fill="#4a1a3e"/><rect x="96.6" y="0.5" width="3" height="15.5" fill="#4a1a3e"/><rect x="103.4" y="2.0" width="2.5" height="14.0" fill="#0b4a3a"/><rect x="106.7" y="2.2" width="1.5" height="13.8" fill="#4a1a3e"/><rect x="115.0" y="0.9" width="3" height="15.1" fill="#0b4a3a"/><rect x="120.6" y="1.5" width="1.5" height="14.5" fill="#4a1a3e"/><rect x="122.7" y="4.2" width="3" height="11.8" fill="#4a1a3e"/><rect x="126.8" y="1.7" width="1" height="14.3" fill="#4a1a3e"/><rect x="128.6" y="3.0" width="2.5" height="13.0" fill="#0b4a3a"/><rect x="132.0" y="3.0" width="1.5" height="13.0" fill="#4a1a3e"/><rect x="134.5" y="0.0" width="1" height="16.0" fill="#4a1a3e"/><rect x="136.3" y="2.7" width="1.5" height="13.3" fill="#4a1a3e"/><rect x="138.8" y="4.4" width="2.5" height="11.6" fill="#0b4a3a"/><rect x="141.9" y="2.8" width="1" height="13.2" fill="#4a1a3e"/><rect x="143.3" y="1.2" width="1.5" height="14.8" fill="#4a1a3e"/><rect x="146.2" y="4.0" width="1.5" height="12.0" fill="#0b4a3a"/><rect x="148.3" y="2.8" width="2" height="13.2" fill="#4a1a3e"/><rect x="151.8" y="4.7" width="1.5" height="11.3" fill="#0b4a3a"/><rect x="153.8" y="4.4" width="1" height="11.6" fill="#4a1a3e"/><rect x="156.4" y="1.5" width="2" height="14.5" fill="#4a1a3e"/></svg>
<svg style="position:absolute;left:81px;top:672px;opacity:0.5;" width="160" height="16" viewBox="0 0 160 16"><rect x="0.0" y="4.5" width="1" height="11.5" fill="#0b4a3a"/><rect x="1.9" y="2.6" width="1" height="13.4" fill="#4a1a3e"/><rect x="9.7" y="4.8" width="2" height="11.2" fill="#4a1a3e"/><rect x="12.5" y="1.3" width="1" height="14.7" fill="#4a1a3e"/><rect x="14.8" y="1.5" width="1.5" height="14.5" fill="#4a1a3e"/><rect x="17.4" y="3.4" width="1.5" height="12.6" fill="#0b4a3a"/><rect x="19.7" y="1.9" width="2" height="14.1" fill="#0b4a3a"/><rect x="23.4" y="1.4" width="1" height="14.6" fill="#4a1a3e"/><rect x="24.7" y="2.3" width="2" height="13.7" fill="#0b4a3a"/><rect x="30.7" y="0.6" width="2" height="15.4" fill="#4a1a3e"/><rect x="42.6" y="4.6" width="1" height="11.4" fill="#0b4a3a"/><rect x="44.0" y="2.6" width="2" height="13.4" fill="#0b4a3a"/><rect x="46.7" y="5.0" width="2" height="11.0" fill="#0b4a3a"/><rect x="49.9" y="2.3" width="2.5" height="13.7" fill="#0b4a3a"/><rect x="53.4" y="5.5" width="2" height="10.5" fill="#0b4a3a"/><rect x="60.8" y="5.2" width="1.5" height="10.8" fill="#4a1a3e"/><rect x="67.3" y="2.0" width="2.5" height="14.0" fill="#4a1a3e"/><rect x="76.7" y="4.3" width="1" height="11.7" fill="#4a1a3e"/><rect x="78.3" y="4.1" width="3" height="11.9" fill="#4a1a3e"/><rect x="82.6" y="0.3" width="2" height="15.7" fill="#4a1a3e"/><rect x="84.9" y="3.6" width="1.5" height="12.4" fill="#0b4a3a"/><rect x="87.5" y="4.6" width="1" height="11.4" fill="#4a1a3e"/><rect x="90.3" y="4.1" width="1.5" height="11.9" fill="#4a1a3e"/><rect x="96.5" y="0.3" width="1" height="15.7" fill="#4a1a3e"/><rect x="99.0" y="0.3" width="1.5" height="15.7" fill="#0b4a3a"/><rect x="101.2" y="4.4" width="2.5" height="11.6" fill="#4a1a3e"/><rect x="104.0" y="2.6" width="1" height="13.4" fill="#0b4a3a"/><rect x="123.7" y="3.6" width="2.5" height="12.4" fill="#0b4a3a"/><rect x="131.6" y="4.0" width="1.5" height="12.0" fill="#4a1a3e"/><rect x="133.7" y="1.9" width="1" height="14.1" fill="#4a1a3e"/><rect x="136.3" y="4.2" width="3" height="11.8" fill="#4a1a3e"/><rect x="140.6" y="1.2" width="3" height="14.8" fill="#4a1a3e"/><rect x="144.9" y="3.1" width="3" height="12.9" fill="#4a1a3e"/><rect x="149.1" y="4.8" width="3" height="11.2" fill="#4a1a3e"/><rect x="156.9" y="1.9" width="2" height="14.1" fill="#4a1a3e"/></svg>
<svg style="position:absolute;left:72px;top:703px;opacity:0.55;" width="160" height="17" viewBox="0 0 160 17"><rect x="0.0" y="1.5" width="3" height="15.5" fill="#0b4a3a"/><rect x="4.2" y="5.0" width="2.5" height="12.0" fill="#4a1a3e"/><rect x="7.7" y="1.4" width="1.5" height="15.6" fill="#4a1a3e"/><rect x="10.2" y="2.6" width="2" height="14.4" fill="#4a1a3e"/><rect x="17.3" y="4.9" width="1.5" height="12.1" fill="#4a1a3e"/><rect x="20.6" y="3.1" width="3" height="13.9" fill="#4a1a3e"/><rect x="24.1" y="1.8" width="1" height="15.2" fill="#4a1a3e"/><rect x="26.3" y="2.4" width="2.5" height="14.6" fill="#0b4a3a"/><rect x="30.3" y="3.7" width="3" height="13.3" fill="#4a1a3e"/><rect x="34.3" y="3.3" width="3" height="13.7" fill="#4a1a3e"/><rect x="40.5" y="5.8" width="1.5" height="11.2" fill="#4a1a3e"/><rect x="50.1" y="5.2" width="1" height="11.8" fill="#0b4a3a"/><rect x="51.9" y="0.4" width="1.5" height="16.6" fill="#4a1a3e"/><rect x="54.2" y="3.5" width="1" height="13.5" fill="#4a1a3e"/><rect x="55.8" y="1.1" width="1" height="15.9" fill="#4a1a3e"/><rect x="57.6" y="2.9" width="1" height="14.1" fill="#0b4a3a"/><rect x="59.2" y="5.1" width="3" height="11.9" fill="#4a1a3e"/><rect x="63.5" y="5.7" width="3" height="11.3" fill="#0b4a3a"/><rect x="67.5" y="4.5" width="2.5" height="12.5" fill="#4a1a3e"/><rect x="71.1" y="2.1" width="1" height="14.9" fill="#4a1a3e"/><rect x="77.6" y="4.6" width="1.5" height="12.4" fill="#0b4a3a"/><rect x="80.1" y="0.7" width="2" height="16.3" fill="#4a1a3e"/><rect x="83.5" y="1.2" width="1.5" height="15.8" fill="#4a1a3e"/><rect x="89.6" y="4.7" width="1" height="12.3" fill="#4a1a3e"/><rect x="91.2" y="5.6" width="3" height="11.4" fill="#4a1a3e"/><rect x="94.9" y="1.6" width="3" height="15.4" fill="#4a1a3e"/><rect x="98.9" y="0.9" width="1.5" height="16.1" fill="#0b4a3a"/><rect x="101.0" y="0.5" width="2" height="16.5" fill="#0b4a3a"/><rect x="104.3" y="1.4" width="3" height="15.6" fill="#0b4a3a"/><rect x="108.0" y="5.8" width="3" height="11.2" fill="#4a1a3e"/><rect x="112.3" y="4.5" width="2.5" height="12.5" fill="#0b4a3a"/><rect x="115.1" y="0.1" width="1.5" height="16.9" fill="#4a1a3e"/><rect x="117.0" y="3.9" width="1.5" height="13.1" fill="#4a1a3e"/><rect x="119.0" y="5.0" width="1" height="12.0" fill="#4a1a3e"/><rect x="124.5" y="3.6" width="2" height="13.4" fill="#4a1a3e"/><rect x="127.5" y="1.7" width="1" height="15.3" fill="#0b4a3a"/><rect x="129.4" y="5.0" width="1" height="12.0" fill="#0b4a3a"/><rect x="131.6" y="4.1" width="1.5" height="12.9" fill="#4a1a3e"/><rect x="133.5" y="3.4" width="1.5" height="13.6" fill="#4a1a3e"/><rect x="135.8" y="3.9" width="2" height="13.1" fill="#4a1a3e"/><rect x="139.2" y="0.4" width="1.5" height="16.6" fill="#0b4a3a"/><rect x="141.9" y="4.5" width="2.5" height="12.5" fill="#0b4a3a"/><rect x="149.3" y="5.4" width="1.5" height="11.6" fill="#0b4a3a"/><rect x="151.6" y="4.1" width="1" height="12.9" fill="#4a1a3e"/><rect x="154.2" y="0.5" width="1" height="16.5" fill="#0b4a3a"/><rect x="156.1" y="5.2" width="1" height="11.8" fill="#0b4a3a"/><rect x="157.5" y="4.9" width="1" height="12.1" fill="#4a1a3e"/><rect x="159.4" y="5.7" width="2" height="11.3" fill="#4a1a3e"/></svg>
<svg style="position:absolute;left:71px;top:735px;opacity:0.35;" width="172" height="15" viewBox="0 0 172 15"><rect x="3.5" y="0.7" width="2.5" height="14.3" fill="#0b4a3a"/><rect x="16.7" y="0.9" width="2.5" height="14.1" fill="#4a1a3e"/><rect x="32.1" y="0.5" width="2.5" height="14.5" fill="#4a1a3e"/><rect x="40.8" y="4.4" width="2.5" height="10.6" fill="#0b4a3a"/><rect x="44.9" y="3.7" width="2.5" height="11.3" fill="#4a1a3e"/><rect x="69.4" y="3.2" width="1" height="11.8" fill="#0b4a3a"/><rect x="74.7" y="0.1" width="1" height="14.9" fill="#4a1a3e"/><rect x="81.0" y="2.3" width="3" height="12.7" fill="#4a1a3e"/><rect x="84.7" y="3.5" width="3" height="11.5" fill="#0b4a3a"/><rect x="99.1" y="0.4" width="2.5" height="14.6" fill="#4a1a3e"/><rect x="115.8" y="5.2" width="1.5" height="9.8" fill="#4a1a3e"/><rect x="125.1" y="1.8" width="3" height="13.2" fill="#4a1a3e"/><rect x="129.2" y="0.5" width="3" height="14.5" fill="#0b4a3a"/><rect x="137.4" y="2.7" width="1" height="12.3" fill="#0b4a3a"/><rect x="139.4" y="0.1" width="2" height="14.9" fill="#0b4a3a"/><rect x="143.1" y="4.2" width="1.5" height="10.8" fill="#0b4a3a"/><rect x="146.3" y="4.5" width="3" height="10.5" fill="#4a1a3e"/><rect x="161.6" y="3.8" width="1" height="11.2" fill="#4a1a3e"/><rect x="165.1" y="4.4" width="2" height="10.6" fill="#4a1a3e"/><rect x="168.1" y="4.2" width="3" height="10.8" fill="#0b4a3a"/></svg>
<svg style="position:absolute;left:119px;top:977px;opacity:0.5;" width="170" height="15" viewBox="0 0 170 15"><rect x="0.0" y="1.0" width="1.5" height="14.0" fill="#4a1a3e"/><rect x="15.7" y="0.3" width="1" height="14.7" fill="#0b4a3a"/><rect x="23.0" y="0.8" width="2" height="14.2" fill="#0b4a3a"/><rect x="27.9" y="1.9" width="3" height="13.1" fill="#0b4a3a"/><rect x="31.9" y="5.2" width="3" height="9.8" fill="#4a1a3e"/><rect x="35.9" y="0.9" width="2.5" height="14.1" fill="#4a1a3e"/><rect x="40.1" y="3.9" width="2.5" height="11.1" fill="#4a1a3e"/><rect x="43.8" y="3.9" width="2" height="11.1" fill="#0b4a3a"/><rect x="47.0" y="0.1" width="2" height="14.9" fill="#4a1a3e"/><rect x="56.8" y="2.7" width="2.5" height="12.3" fill="#4a1a3e"/><rect x="60.3" y="5.2" width="1.5" height="9.8" fill="#0b4a3a"/><rect x="63.0" y="0.6" width="2.5" height="14.4" fill="#4a1a3e"/><rect x="84.0" y="0.5" width="3" height="14.5" fill="#4a1a3e"/><rect x="102.4" y="0.9" width="3" height="14.1" fill="#0b4a3a"/><rect x="111.3" y="4.1" width="3" height="10.9" fill="#4a1a3e"/><rect x="118.9" y="3.0" width="3" height="12.0" fill="#0b4a3a"/><rect x="123.4" y="5.2" width="2.5" height="9.8" fill="#4a1a3e"/><rect x="126.8" y="3.1" width="1" height="11.9" fill="#4a1a3e"/><rect x="131.5" y="0.6" width="3" height="14.4" fill="#4a1a3e"/><rect x="140.5" y="2.8" width="1" height="12.2" fill="#4a1a3e"/><rect x="147.9" y="1.3" width="2.5" height="13.7" fill="#0b4a3a"/><rect x="152.1" y="1.6" width="1.5" height="13.4" fill="#0b4a3a"/><rect x="154.4" y="0.6" width="3" height="14.4" fill="#0b4a3a"/><rect x="158.7" y="2.8" width="2" height="12.2" fill="#4a1a3e"/><rect x="164.0" y="3.7" width="3" height="11.3" fill="#4a1a3e"/><rect x="168.4" y="0.7" width="1.5" height="14.3" fill="#0b4a3a"/></svg>
<svg style="position:absolute;left:96px;top:1008px;opacity:0.6;" width="217" height="16" viewBox="0 0 217 16"><rect x="0.0" y="2.8" width="3" height="13.2" fill="#0b4a3a"/><rect x="4.5" y="2.7" width="1.5" height="13.3" fill="#0b4a3a"/><rect x="6.7" y="3.3" width="3" height="12.7" fill="#4a1a3e"/><rect x="11.3" y="1.6" width="3" height="14.4" fill="#4a1a3e"/><rect x="15.1" y="4.4" width="3" height="11.6" fill="#0b4a3a"/><rect x="18.5" y="0.3" width="3" height="15.7" fill="#4a1a3e"/><rect x="22.5" y="1.0" width="3" height="15.0" fill="#4a1a3e"/><rect x="26.2" y="2.5" width="2.5" height="13.5" fill="#0b4a3a"/><rect x="29.5" y="3.6" width="2" height="12.4" fill="#0b4a3a"/><rect x="33.2" y="2.3" width="2.5" height="13.7" fill="#4a1a3e"/><rect x="36.2" y="0.2" width="2.5" height="15.8" fill="#4a1a3e"/><rect x="40.4" y="3.2" width="2.5" height="12.8" fill="#0b4a3a"/><rect x="44.2" y="0.2" width="1" height="15.8" fill="#4a1a3e"/><rect x="47.0" y="1.2" width="2" height="14.8" fill="#4a1a3e"/><rect x="50.5" y="4.7" width="2.5" height="11.3" fill="#4a1a3e"/><rect x="58.7" y="0.9" width="3" height="15.1" fill="#0b4a3a"/><rect x="62.7" y="4.4" width="2" height="11.6" fill="#0b4a3a"/><rect x="65.4" y="2.3" width="2.5" height="13.7" fill="#0b4a3a"/><rect x="68.3" y="3.6" width="2.5" height="12.4" fill="#4a1a3e"/><rect x="71.7" y="4.6" width="3" height="11.4" fill="#4a1a3e"/><rect x="76.4" y="4.5" width="2" height="11.5" fill="#4a1a3e"/><rect x="78.7" y="5.5" width="2.5" height="10.5" fill="#4a1a3e"/><rect x="82.4" y="1.2" width="2" height="14.8" fill="#4a1a3e"/><rect x="85.3" y="4.7" width="1.5" height="11.3" fill="#4a1a3e"/><rect x="87.2" y="0.6" width="2" height="15.4" fill="#0b4a3a"/><rect x="90.2" y="3.6" width="2" height="12.4" fill="#4a1a3e"/><rect x="93.1" y="0.4" width="3" height="15.6" fill="#4a1a3e"/><rect x="96.8" y="0.7" width="2" height="15.3" fill="#4a1a3e"/><rect x="99.2" y="0.6" width="3" height="15.4" fill="#0b4a3a"/><rect x="102.6" y="3.0" width="1.5" height="13.0" fill="#4a1a3e"/><rect x="105.2" y="1.8" width="3" height="14.2" fill="#0b4a3a"/><rect x="109.1" y="3.6" width="2" height="12.4" fill="#4a1a3e"/><rect x="112.0" y="3.5" width="3" height="12.5" fill="#4a1a3e"/><rect x="116.1" y="4.4" width="3" height="11.6" fill="#4a1a3e"/><rect x="123.9" y="3.1" width="2.5" height="12.9" fill="#0b4a3a"/><rect x="127.3" y="3.8" width="3" height="12.2" fill="#4a1a3e"/><rect x="131.0" y="2.7" width="2.5" height="13.3" fill="#0b4a3a"/><rect x="134.7" y="5.4" width="3" height="10.6" fill="#0b4a3a"/><rect x="139.5" y="4.8" width="2.5" height="11.2" fill="#0b4a3a"/><rect x="143.2" y="1.5" width="1.5" height="14.5" fill="#4a1a3e"/><rect x="145.2" y="2.9" width="2" height="13.1" fill="#0b4a3a"/><rect x="147.9" y="3.1" width="3" height="12.9" fill="#4a1a3e"/><rect x="151.5" y="1.3" width="2.5" height="14.7" fill="#0b4a3a"/><rect x="155.8" y="5.6" width="2" height="10.4" fill="#0b4a3a"/><rect x="158.5" y="1.5" width="1.5" height="14.5" fill="#0b4a3a"/><rect x="160.9" y="2.5" width="2" height="13.5" fill="#4a1a3e"/><rect x="167.2" y="2.9" width="2.5" height="13.1" fill="#4a1a3e"/><rect x="171.1" y="2.0" width="2" height="14.0" fill="#0b4a3a"/><rect x="173.7" y="2.1" width="1.5" height="13.9" fill="#0b4a3a"/><rect x="176.3" y="2.9" width="1.5" height="13.1" fill="#0b4a3a"/><rect x="179.2" y="2.7" width="2" height="13.3" fill="#0b4a3a"/><rect x="181.8" y="4.6" width="2" height="11.4" fill="#4a1a3e"/><rect x="184.5" y="2.7" width="2" height="13.3" fill="#4a1a3e"/><rect x="187.3" y="1.0" width="2.5" height="15.0" fill="#4a1a3e"/><rect x="190.2" y="4.7" width="1.5" height="11.3" fill="#4a1a3e"/><rect x="195.9" y="1.5" width="3" height="14.5" fill="#4a1a3e"/><rect x="199.7" y="0.1" width="1.5" height="15.9" fill="#4a1a3e"/><rect x="202.9" y="0.2" width="2.5" height="15.8" fill="#4a1a3e"/><rect x="206.3" y="2.5" width="3" height="13.5" fill="#4a1a3e"/><rect x="210.0" y="3.4" width="1.5" height="12.6" fill="#0b4a3a"/><rect x="212.0" y="1.5" width="1" height="14.5" fill="#4a1a3e"/><rect x="214.1" y="0.1" width="2.5" height="15.9" fill="#4a1a3e"/></svg>
<svg style="position:absolute;left:524px;top:383.5px;opacity:0.6;" width="92" height="16.5" viewBox="0 0 92 16.5"><rect x="0.0" y="2.1" width="2" height="14.4" fill="#4a1a3e"/><rect x="2.6" y="3.4" width="2.5" height="13.1" fill="#4a1a3e"/><rect x="5.4" y="0.7" width="2" height="15.8" fill="#0b4a3a"/><rect x="8.5" y="4.1" width="1.5" height="12.4" fill="#4a1a3e"/><rect x="11.7" y="1.6" width="2" height="14.9" fill="#4a1a3e"/><rect x="14.5" y="1.0" width="1.5" height="15.5" fill="#0b4a3a"/><rect x="17.0" y="5.8" width="2" height="10.7" fill="#0b4a3a"/><rect x="20.6" y="0.9" width="1" height="15.6" fill="#4a1a3e"/><rect x="22.4" y="3.8" width="1" height="12.7" fill="#0b4a3a"/><rect x="28.8" y="4.5" width="1.5" height="12.0" fill="#4a1a3e"/><rect x="31.3" y="2.4" width="2" height="14.1" fill="#4a1a3e"/><rect x="34.2" y="4.8" width="1.5" height="11.7" fill="#4a1a3e"/><rect x="36.1" y="2.9" width="2" height="13.6" fill="#4a1a3e"/><rect x="38.9" y="2.8" width="3" height="13.7" fill="#0b4a3a"/><rect x="42.9" y="3.4" width="2" height="13.1" fill="#4a1a3e"/><rect x="45.3" y="2.7" width="3" height="13.8" fill="#0b4a3a"/><rect x="49.4" y="3.1" width="1.5" height="13.4" fill="#0b4a3a"/><rect x="52.3" y="0.3" width="3" height="16.2" fill="#4a1a3e"/><rect x="55.6" y="1.5" width="1.5" height="15.0" fill="#4a1a3e"/><rect x="57.7" y="4.7" width="1" height="11.8" fill="#4a1a3e"/><rect x="61.8" y="0.9" width="3" height="15.6" fill="#4a1a3e"/><rect x="66.1" y="1.5" width="3" height="15.0" fill="#4a1a3e"/><rect x="69.7" y="3.0" width="1" height="13.5" fill="#4a1a3e"/><rect x="71.4" y="5.3" width="2" height="11.2" fill="#4a1a3e"/><rect x="73.9" y="4.4" width="3" height="12.1" fill="#4a1a3e"/><rect x="77.3" y="4.1" width="1" height="12.4" fill="#4a1a3e"/><rect x="78.6" y="4.2" width="2" height="12.3" fill="#4a1a3e"/><rect x="81.2" y="1.0" width="3" height="15.5" fill="#4a1a3e"/><rect x="84.6" y="2.9" width="2.5" height="13.6" fill="#4a1a3e"/><rect x="87.5" y="0.1" width="1" height="16.4" fill="#4a1a3e"/><rect x="89.9" y="1.4" width="1" height="15.1" fill="#4a1a3e"/><rect x="91.5" y="0.4" width="1" height="16.1" fill="#0b4a3a"/></svg>
<svg style="position:absolute;left:512px;top:416px;opacity:0.55;" width="104" height="16" viewBox="0 0 104 16"><rect x="0.0" y="2.0" width="1" height="14.0" fill="#0b4a3a"/><rect x="5.1" y="1.4" width="2" height="14.6" fill="#0b4a3a"/><rect x="8.9" y="4.8" width="2.5" height="11.2" fill="#4a1a3e"/><rect x="12.0" y="2.1" width="1.5" height="13.9" fill="#4a1a3e"/><rect x="14.7" y="1.6" width="3" height="14.4" fill="#0b4a3a"/><rect x="21.4" y="1.5" width="2" height="14.5" fill="#4a1a3e"/><rect x="24.7" y="1.4" width="1" height="14.6" fill="#4a1a3e"/><rect x="27.3" y="0.0" width="3" height="16.0" fill="#0b4a3a"/><rect x="31.4" y="0.4" width="3" height="15.6" fill="#4a1a3e"/><rect x="35.6" y="4.9" width="2.5" height="11.1" fill="#4a1a3e"/><rect x="39.8" y="0.9" width="2.5" height="15.1" fill="#0b4a3a"/><rect x="43.6" y="0.3" width="3" height="15.7" fill="#0b4a3a"/><rect x="48.2" y="3.7" width="3" height="12.3" fill="#4a1a3e"/><rect x="52.6" y="0.0" width="2.5" height="16.0" fill="#4a1a3e"/><rect x="55.8" y="0.8" width="1" height="15.2" fill="#4a1a3e"/><rect x="57.7" y="2.6" width="2" height="13.4" fill="#0b4a3a"/><rect x="60.8" y="3.2" width="1" height="12.8" fill="#4a1a3e"/><rect x="63.5" y="3.1" width="2" height="12.9" fill="#0b4a3a"/><rect x="66.4" y="0.8" width="1.5" height="15.2" fill="#4a1a3e"/><rect x="68.2" y="3.3" width="1.5" height="12.7" fill="#0b4a3a"/><rect x="71.3" y="0.0" width="1" height="16.0" fill="#0b4a3a"/><rect x="73.9" y="3.6" width="2" height="12.4" fill="#0b4a3a"/><rect x="76.4" y="2.5" width="3" height="13.5" fill="#0b4a3a"/><rect x="79.8" y="5.0" width="3" height="11.0" fill="#4a1a3e"/><rect x="89.3" y="5.3" width="2" height="10.7" fill="#0b4a3a"/><rect x="92.4" y="2.2" width="2" height="13.8" fill="#0b4a3a"/><rect x="94.9" y="4.5" width="2" height="11.5" fill="#4a1a3e"/><rect x="97.9" y="3.8" width="1.5" height="12.2" fill="#4a1a3e"/><rect x="103.9" y="1.3" width="1.5" height="14.7" fill="#4a1a3e"/></svg>
<svg style="position:absolute;left:503px;top:447px;opacity:0.4;" width="112" height="17" viewBox="0 0 112 17"><rect x="0.0" y="3.8" width="2" height="13.2" fill="#4a1a3e"/><rect x="2.5" y="5.9" width="2.5" height="11.1" fill="#4a1a3e"/><rect x="6.5" y="2.6" width="1.5" height="14.4" fill="#0b4a3a"/><rect x="20.5" y="5.9" width="2" height="11.1" fill="#4a1a3e"/><rect x="23.6" y="5.6" width="1.5" height="11.4" fill="#0b4a3a"/><rect x="25.5" y="2.4" width="2.5" height="14.6" fill="#0b4a3a"/><rect x="28.3" y="5.8" width="1.5" height="11.2" fill="#0b4a3a"/><rect x="31.6" y="1.4" width="2.5" height="15.6" fill="#0b4a3a"/><rect x="34.4" y="4.4" width="2" height="12.6" fill="#4a1a3e"/><rect x="40.6" y="2.2" width="2" height="14.8" fill="#0b4a3a"/><rect x="53.1" y="5.4" width="2.5" height="11.6" fill="#4a1a3e"/><rect x="57.2" y="2.7" width="3" height="14.3" fill="#0b4a3a"/><rect x="61.3" y="1.9" width="2.5" height="15.1" fill="#0b4a3a"/><rect x="66.6" y="4.7" width="2.5" height="12.3" fill="#4a1a3e"/><rect x="70.3" y="0.6" width="2" height="16.4" fill="#4a1a3e"/><rect x="73.6" y="4.7" width="2" height="12.3" fill="#0b4a3a"/><rect x="80.4" y="0.4" width="1" height="16.6" fill="#0b4a3a"/><rect x="86.9" y="2.2" width="1" height="14.8" fill="#4a1a3e"/><rect x="88.5" y="2.9" width="2" height="14.1" fill="#4a1a3e"/><rect x="91.6" y="1.0" width="1" height="16.0" fill="#4a1a3e"/><rect x="98.0" y="1.8" width="2" height="15.2" fill="#4a1a3e"/><rect x="110.5" y="3.7" width="2" height="13.3" fill="#4a1a3e"/></svg>
<svg style="position:absolute;left:240.6px;top:400px;opacity:0.9;" width="7.4" height="15" viewBox="0 0 7.4 15"><rect x="0" y="0" width="3.7" height="15" fill="#4a1a3e"/><rect x="3.7" y="0" width="3.7" height="15" fill="#0b4a3a"/></svg>
<svg style="position:absolute;left:231.8px;top:432px;opacity:0.9;" width="7.4" height="16" viewBox="0 0 7.4 16"><rect x="0" y="0" width="3.7" height="16" fill="#4a1a3e"/><rect x="3.7" y="0" width="3.7" height="16" fill="#0b4a3a"/></svg>
<svg style="position:absolute;left:224px;top:463px;opacity:0.9;" width="7.4" height="17" viewBox="0 0 7.4 17"><rect x="0" y="0" width="3.7" height="17" fill="#4a1a3e"/><rect x="3.7" y="0" width="3.7" height="17" fill="#0b4a3a"/></svg>
<svg style="position:absolute;left:216.6px;top:496px;opacity:0.9;" width="7.4" height="15.5" viewBox="0 0 7.4 15.5"><rect x="0" y="0" width="3.7" height="15.5" fill="#4a1a3e"/><rect x="3.7" y="0" width="3.7" height="15.5" fill="#0b4a3a"/></svg>
<svg style="position:absolute;left:209px;top:528px;opacity:0.9;" width="7.4" height="15" viewBox="0 0 7.4 15"><rect x="0" y="0" width="3.7" height="15" fill="#4a1a3e"/><rect x="3.7" y="0" width="3.7" height="15" fill="#0b4a3a"/></svg>
<svg style="position:absolute;left:128px;top:496px;opacity:0.9;" width="7.4" height="15.5" viewBox="0 0 7.4 15.5"><rect x="0" y="0" width="3.7" height="15.5" fill="#4a1a3e"/><rect x="3.7" y="0" width="3.7" height="15.5" fill="#0b4a3a"/></svg>
<svg style="position:absolute;left:120px;top:528px;opacity:0.9;" width="7.4" height="15" viewBox="0 0 7.4 15"><rect x="0" y="0" width="3.7" height="15" fill="#4a1a3e"/><rect x="3.7" y="0" width="3.7" height="15" fill="#0b4a3a"/></svg>
<svg style="position:absolute;left:112.7px;top:560px;opacity:0.9;" width="7.4" height="15.5" viewBox="0 0 7.4 15.5"><rect x="0" y="0" width="3.7" height="15.5" fill="#4a1a3e"/><rect x="3.7" y="0" width="3.7" height="15.5" fill="#0b4a3a"/></svg>
<svg style="position:absolute;left:200px;top:560px;opacity:0.9;" width="7.4" height="15.5" viewBox="0 0 7.4 15.5"><rect x="0" y="0" width="3.7" height="15.5" fill="#4a1a3e"/><rect x="3.7" y="0" width="3.7" height="15.5" fill="#0b4a3a"/></svg>
<svg style="position:absolute;left:105px;top:592px;opacity:0.9;" width="7.4" height="15" viewBox="0 0 7.4 15"><rect x="0" y="0" width="3.7" height="15" fill="#4a1a3e"/><rect x="3.7" y="0" width="3.7" height="15" fill="#0b4a3a"/></svg>
<svg style="position:absolute;left:192.5px;top:592px;opacity:0.9;" width="7.4" height="15" viewBox="0 0 7.4 15"><rect x="0" y="0" width="3.7" height="15" fill="#4a1a3e"/><rect x="3.7" y="0" width="3.7" height="15" fill="#0b4a3a"/></svg>
<svg style="position:absolute;left:97.5px;top:624px;opacity:0.9;" width="7.4" height="16" viewBox="0 0 7.4 16"><rect x="0" y="0" width="3.7" height="16" fill="#4a1a3e"/><rect x="3.7" y="0" width="3.7" height="16" fill="#0b4a3a"/></svg>
<svg style="position:absolute;left:185px;top:624px;opacity:0.9;" width="7.4" height="16" viewBox="0 0 7.4 16"><rect x="0" y="0" width="3.7" height="16" fill="#4a1a3e"/><rect x="3.7" y="0" width="3.7" height="16" fill="#0b4a3a"/></svg>
<svg style="position:absolute;left:88.7px;top:656.5px;opacity:0.9;" width="7.4" height="15.200000000000045" viewBox="0 0 7.4 15.200000000000045"><rect x="0" y="0" width="3.7" height="15.200000000000045" fill="#4a1a3e"/><rect x="3.7" y="0" width="3.7" height="15.200000000000045" fill="#0b4a3a"/></svg>
<svg style="position:absolute;left:177px;top:656.5px;opacity:0.9;" width="7.4" height="15.200000000000045" viewBox="0 0 7.4 15.200000000000045"><rect x="0" y="0" width="3.7" height="15.200000000000045" fill="#4a1a3e"/><rect x="3.7" y="0" width="3.7" height="15.200000000000045" fill="#0b4a3a"/></svg>
<svg style="position:absolute;left:249.5px;top:367px;opacity:0.9;" width="7.4" height="16.600000000000023" viewBox="0 0 7.4 16.600000000000023"><rect x="0" y="0" width="3.7" height="16.600000000000023" fill="#4a1a3e"/><rect x="3.7" y="0" width="3.7" height="16.600000000000023" fill="#0b4a3a"/></svg>
<div style="position:absolute;left:0px;top:689px;width:84px;height:9px;background:#4a1a3e;opacity:.75;"></div>
<div style="position:absolute;left:0px;top:699px;width:81px;height:4px;background:#0b4a3a;opacity:.85;"></div>
<div style="position:absolute;left:172px;top:688px;width:235px;height:10px;background:#0b4a3a;opacity:.85;"></div>
<div style="position:absolute;left:175px;top:699px;width:232px;height:5px;background:#4a1a3e;opacity:.85;"></div>
<div style="position:absolute;left:450px;top:672px;width:165px;height:10px;background:#4a1a3e;opacity:.6;"></div>
<div style="position:absolute;left:450px;top:683px;width:165px;height:5px;background:#0b4a3a;opacity:.8;"></div>
<div style="position:absolute;left:390px;top:997px;width:230px;height:2px;background:#0b4a3a;opacity:.8;"></div>
<div style="position:absolute;left:0px;top:700px;width:80px;height:2px;background:#0b4a3a;opacity:.5;"></div>
<div class="t" style="position:absolute;left:162px;top:612.1px;font-size:32px;line-height:32px;font-weight:400;color:#0c5a44;white-space:nowrap;-webkit-text-stroke:0.96px #0c5a44;opacity:.7;">3</div>
<div style="position:absolute;left:296px;top:608px;width:103px;height:21px;background:#d46ee6;opacity:.85;"></div>
<div style="position:absolute;left:278px;top:608px;width:17px;height:21px;background:#4a1a3e;opacity:.7;"></div>
<div style="position:absolute;left:296px;top:637px;width:95px;height:18px;background:#d46ee6;opacity:.85;"></div>
<div style="position:absolute;left:274px;top:637px;width:21px;height:18px;background:#4a1a3e;opacity:.7;"></div>
<div class="t" style="position:absolute;left:278px;top:605.1px;font-size:32px;line-height:32px;font-weight:400;color:#58a2f2;white-space:nowrap;-webkit-text-stroke:0.96px #58a2f2;clip-path:inset(0 0 48% 0);">149.05K</div>
<div class="t" style="position:absolute;left:274px;top:627.1px;font-size:32px;line-height:32px;font-weight:400;color:#58a2f2;white-space:nowrap;-webkit-text-stroke:0.96px #58a2f2;clip-path:inset(52% 0 0 0);">149.05K</div>
</body></html>
